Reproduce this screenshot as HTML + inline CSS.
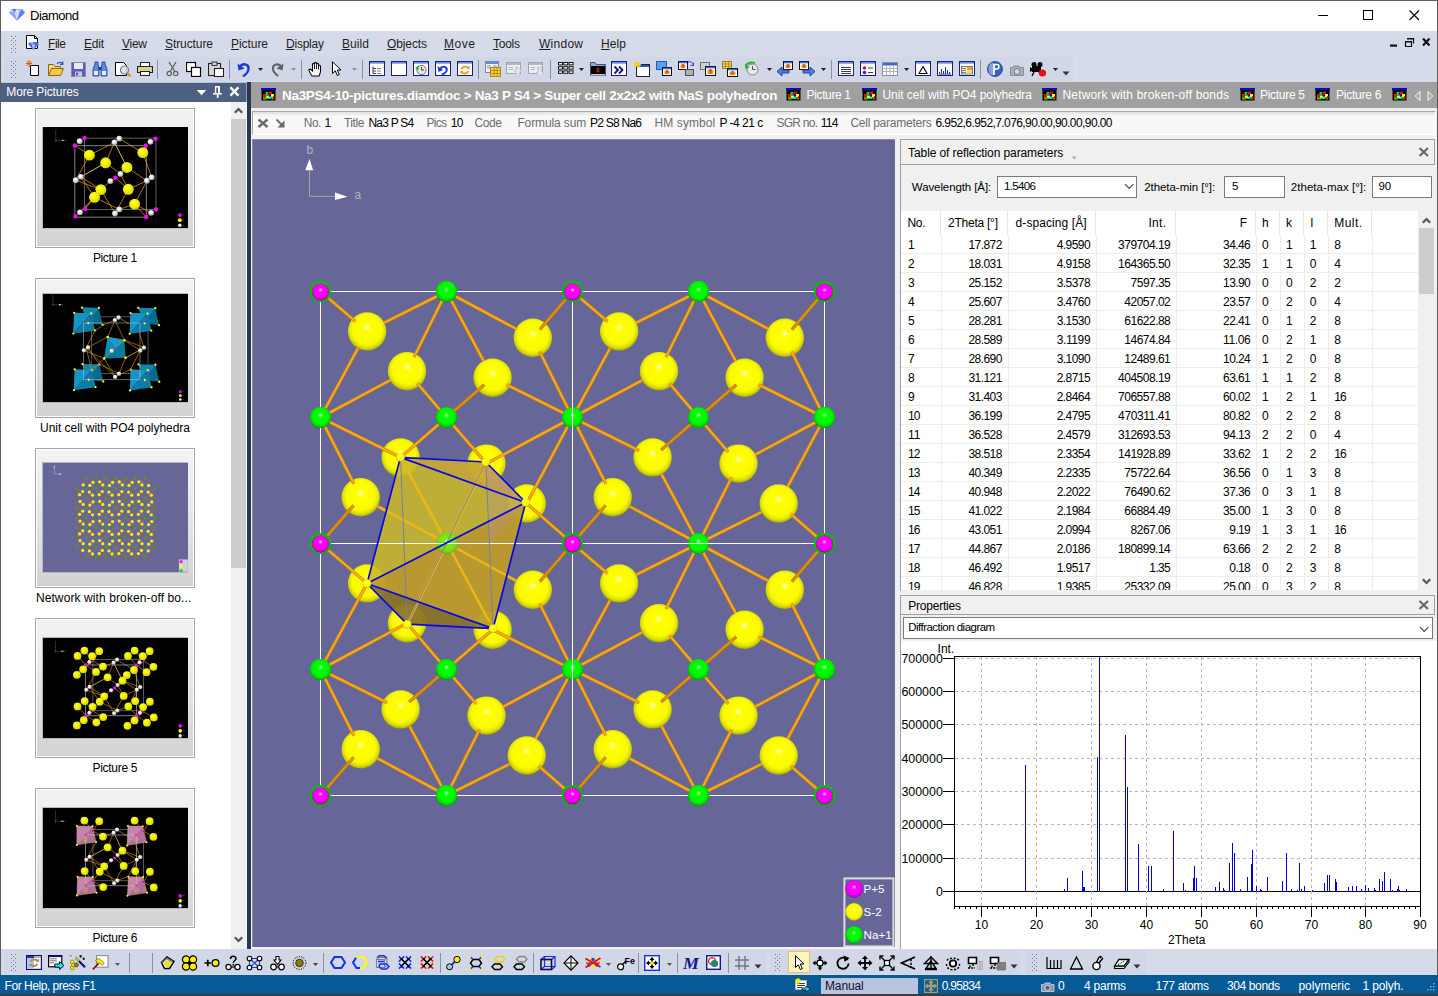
<!DOCTYPE html>
<html><head><meta charset="utf-8"><title>Diamond</title>
<style>
html,body{margin:0;padding:0}
body{width:1438px;height:996px;overflow:hidden;position:relative;background:#d6dbe9;font-family:"Liberation Sans",sans-serif;font-size:12px}
.b{position:absolute;box-sizing:border-box}
.t{position:absolute;white-space:pre}
u{text-decoration:underline;text-underline-offset:1px}
</style></head><body>
<div class="b" style="left:0px;top:0px;width:1438px;height:31px;background:#ffffff;"></div>
<div class="b" style="left:0px;top:0px;width:1438px;height:1px;background:#5d5d5d;"></div>
<svg class="b" style="left:8px;top:8px;" width="18" height="14" viewBox="0 0 18 14">
<polygon points="1,4.5 4,1 14,1 17,4.5 9,12.5" fill="#7f9cf5"/>
<polygon points="1,4.5 4,1 6.5,4.5" fill="#b9caff"/><polygon points="4,1 9,1 6.5,4.5" fill="#5b78ec"/>
<polygon points="9,1 14,1 11.5,4.5" fill="#a9bdff"/><polygon points="14,1 17,4.5 11.5,4.5" fill="#6a86f0"/>
<polygon points="6.5,4.5 9,1 11.5,4.5" fill="#e4ebff"/>
<polygon points="1,4.5 6.5,4.5 9,12.5" fill="#8ea8f8"/><polygon points="6.5,4.5 11.5,4.5 9,12.5" fill="#d4deff"/><polygon points="11.5,4.5 17,4.5 9,12.5" fill="#5f7cee"/>
</svg>
<span class="t " style="left:30.00px;top:7px;font-size:13px;line-height:17px;color:#000;letter-spacing:-0.504px;">Diamond</span>
<svg class="b" style="left:1310px;top:5px;" width="120" height="22" viewBox="0 0 120 22">
<path d="M8 10.5H18" stroke="#000" stroke-width="1" fill="none"/>
<rect x="53.5" y="5.5" width="9" height="9" stroke="#000" stroke-width="1" fill="none"/>
<path d="M99.5 5.5L109 15M109 5.5L99.5 15" stroke="#000" stroke-width="1.1" fill="none"/>
</svg>
<div class="b" style="left:0px;top:31px;width:1438px;height:51px;background:#d6dbe9;"></div>
<div class="b" style="left:0px;top:1px;width:1px;height:993px;background:#5d5d5d;"></div>
<div class="b" style="left:1437px;top:1px;width:1px;height:993px;background:#5d5d5d;"></div>
<div class="b" style="left:4px;top:57px;width:1069px;height:24px;background:#d1d7e6;"></div>
<svg class="b" style="left:11px;top:36px;" width="5" height="18" viewBox="0 0 5 18"><rect x="0" y="0" width="1" height="1" fill="#6f7a96"/><rect x="4" y="0" width="1" height="1" fill="#6f7a96"/><rect x="2" y="2" width="1" height="1" fill="#6f7a96"/><rect x="0" y="4" width="1" height="1" fill="#6f7a96"/><rect x="4" y="4" width="1" height="1" fill="#6f7a96"/><rect x="2" y="6" width="1" height="1" fill="#6f7a96"/><rect x="0" y="8" width="1" height="1" fill="#6f7a96"/><rect x="4" y="8" width="1" height="1" fill="#6f7a96"/><rect x="2" y="10" width="1" height="1" fill="#6f7a96"/><rect x="0" y="12" width="1" height="1" fill="#6f7a96"/><rect x="4" y="12" width="1" height="1" fill="#6f7a96"/><rect x="2" y="14" width="1" height="1" fill="#6f7a96"/><rect x="0" y="16" width="1" height="1" fill="#6f7a96"/><rect x="4" y="16" width="1" height="1" fill="#6f7a96"/></svg>
<svg class="b" style="left:11px;top:61px;" width="5" height="17" viewBox="0 0 5 17"><rect x="0" y="0" width="1" height="1" fill="#6f7a96"/><rect x="4" y="0" width="1" height="1" fill="#6f7a96"/><rect x="2" y="2" width="1" height="1" fill="#6f7a96"/><rect x="0" y="4" width="1" height="1" fill="#6f7a96"/><rect x="4" y="4" width="1" height="1" fill="#6f7a96"/><rect x="2" y="6" width="1" height="1" fill="#6f7a96"/><rect x="0" y="8" width="1" height="1" fill="#6f7a96"/><rect x="4" y="8" width="1" height="1" fill="#6f7a96"/><rect x="2" y="10" width="1" height="1" fill="#6f7a96"/><rect x="0" y="12" width="1" height="1" fill="#6f7a96"/><rect x="4" y="12" width="1" height="1" fill="#6f7a96"/><rect x="2" y="14" width="1" height="1" fill="#6f7a96"/><rect x="0" y="16" width="1" height="1" fill="#6f7a96"/><rect x="4" y="16" width="1" height="1" fill="#6f7a96"/></svg>
<svg class="b" style="left:25px;top:35px;" width="16" height="16" viewBox="0 0 16 16">
<path d="M1.5 0.5H9.5L12.5 3.5V13.5H1.5Z" fill="#fff" stroke="#000" stroke-width="1"/>
<path d="M9.5 0.5V3.5H12.5" fill="none" stroke="#000" stroke-width="1"/>
<polygon points="3,9 5,7 12,7 14,9 8.5,15" fill="#4a6cf0"/>
<polygon points="5,7 8.5,7 7,9.5" fill="#b9c9ff"/><polygon points="7,9.5 10,9.5 8.5,15" fill="#c8d6ff"/>
</svg>
<span class="t" style="left:48px;top:36.00px;font-size:12px;line-height:16px;color:#1e1e1e;letter-spacing:-0.445px"><u>F</u>ile</span>
<span class="t" style="left:84px;top:36.00px;font-size:12px;line-height:16px;color:#1e1e1e;letter-spacing:-0.226px"><u>E</u>dit</span>
<span class="t" style="left:122px;top:36.00px;font-size:12px;line-height:16px;color:#1e1e1e;letter-spacing:-0.264px"><u>V</u>iew</span>
<span class="t" style="left:165px;top:36.00px;font-size:12px;line-height:16px;color:#1e1e1e;letter-spacing:-0.086px"><u>S</u>tructure</span>
<span class="t" style="left:231px;top:36.00px;font-size:12px;line-height:16px;color:#1e1e1e;letter-spacing:-0.058px"><u>P</u>icture</span>
<span class="t" style="left:286px;top:36.00px;font-size:12px;line-height:16px;color:#1e1e1e;letter-spacing:-0.224px"><u>D</u>isplay</span>
<span class="t" style="left:342px;top:36.00px;font-size:12px;line-height:16px;color:#1e1e1e;letter-spacing:0.079px"><u>B</u>uild</span>
<span class="t" style="left:387px;top:36.00px;font-size:12px;line-height:16px;color:#1e1e1e;letter-spacing:-0.114px"><u>O</u>bjects</span>
<span class="t" style="left:444px;top:36.00px;font-size:12px;line-height:16px;color:#1e1e1e;letter-spacing:0.552px"><u>M</u>ove</span>
<span class="t" style="left:493px;top:36.00px;font-size:12px;line-height:16px;color:#1e1e1e;letter-spacing:-0.253px"><u>T</u>ools</span>
<span class="t" style="left:539px;top:36.00px;font-size:12px;line-height:16px;color:#1e1e1e;letter-spacing:0.264px"><u>W</u>indow</span>
<span class="t" style="left:601px;top:36.00px;font-size:12px;line-height:16px;color:#1e1e1e;letter-spacing:0.107px"><u>H</u>elp</span>
<svg class="b" style="left:1388px;top:36px;" width="46" height="14" viewBox="0 0 46 14">
<rect x="2" y="8.5" width="7" height="2.2" fill="#111"/>
<path d="M19.5 2.5H25.5V7.5M17.5 5.5H23.5V10.5H17.5Z" stroke="#111" stroke-width="1.2" fill="none"/>
<path d="M19 2.8H25.5M17.5 5.8H23.5" stroke="#111" stroke-width="1.6" fill="none"/>
<path d="M35 2.5L41.5 9.5M41.5 2.5L35 9.5" stroke="#111" stroke-width="2.2" fill="none"/>
</svg>
<svg class="b" style="left:26px;top:60px;" width="16" height="17" viewBox="0 0 16 17"><path d="M4.5 5.5H12.5V15.5H4.5Z" fill="#fff" stroke="#000"/>
<path d="M3 0V7M0 3.5H6M0.8 1.2L5.2 5.8M5.2 1.2L0.8 5.8" stroke="#e06000" stroke-width="1"/></svg>
<svg class="b" style="left:48px;top:61px;" width="16" height="16" viewBox="0 0 16 16"><path d="M0.5 14.5V3.5H5.5L7 5.5H12.5V7.5" fill="#f8d878" stroke="#8a6a10"/>
<path d="M0.5 14.5L3.5 7.5H15.5L12.5 14.5Z" fill="#f7c64a" stroke="#8a6a10"/>
<path d="M9 3C10.5 0.8 13.5 0.8 14.5 3.2M14.8 0.5V3.5H12" fill="none" stroke="#2a50c8" stroke-width="1.2"/></svg>
<svg class="b" style="left:71px;top:61px;" width="16" height="16" viewBox="0 0 16 16"><rect x="0.5" y="1.5" width="14" height="14" fill="#5a5ac8" stroke="#8c8ca0"/>
<rect x="3" y="2" width="9" height="6" fill="#e8e8f4"/><rect x="4" y="10.5" width="7" height="5" fill="#c8c8d8"/><rect x="5" y="11.5" width="2" height="3" fill="#5a5ac8"/></svg>
<svg class="b" style="left:92px;top:61px;" width="16" height="16" viewBox="0 0 16 16"><path d="M1 15V8L3 3V1H6V3L7 8V15Z" fill="#5a8ae0" stroke="#1a3a9c" stroke-width="0.8"/>
<path d="M9 15V8L10 3V1H13V3L15 8V15Z" fill="#5a8ae0" stroke="#1a3a9c" stroke-width="0.8"/>
<rect x="6.5" y="6" width="3" height="3" fill="#1a3a9c"/><rect x="2" y="10" width="4" height="4" fill="#e8f0ff"/><rect x="10" y="10" width="4" height="4" fill="#e8f0ff"/></svg>
<svg class="b" style="left:115px;top:61px;" width="16" height="16" viewBox="0 0 16 16"><path d="M0.5 1.5H8.5L11.5 4.5V14.5H0.5Z" fill="#fff" stroke="#000"/>
<circle cx="9.5" cy="9" r="4" fill="#d8e8f8" fill-opacity="0.85" stroke="#707888" stroke-width="1.2"/>
<path d="M12.5 12L15.5 15.5" stroke="#d88a20" stroke-width="2.2"/></svg>
<svg class="b" style="left:137px;top:61px;" width="16" height="16" viewBox="0 0 16 16"><rect x="3.5" y="1.5" width="9" height="5" fill="#fff" stroke="#222"/>
<rect x="0.5" y="5.5" width="15" height="6" fill="#d8d090" stroke="#222"/>
<rect x="3.5" y="10.5" width="9" height="4" fill="#fff" stroke="#222"/><rect x="2" y="7" width="2" height="1.5" fill="#e8e020"/></svg>
<div class="b" style="left:157px;top:60px;width:1px;height:19px;background:#8591a8;"></div>
<svg class="b" style="left:166px;top:61px;" width="13" height="16" viewBox="0 0 13 16"><path d="M3 1L8.5 10M10 1L4.5 10" stroke="#606060" stroke-width="1.3" fill="none"/>
<circle cx="3.3" cy="12.5" r="2.2" fill="none" stroke="#606060" stroke-width="1.2"/><circle cx="9.7" cy="12.5" r="2.2" fill="none" stroke="#606060" stroke-width="1.2"/></svg>
<svg class="b" style="left:186px;top:61px;" width="16" height="16" viewBox="0 0 16 16"><rect x="0.5" y="1.5" width="9" height="9" fill="#fff" stroke="#000" stroke-width="1.2"/>
<rect x="5.5" y="6.5" width="9" height="9" fill="#fff" stroke="#000" stroke-width="1.2"/></svg>
<svg class="b" style="left:208px;top:61px;" width="16" height="16" viewBox="0 0 16 16"><rect x="0.5" y="2.5" width="12" height="12" fill="#d8d8d8" stroke="#222" stroke-width="1.1"/>
<rect x="4" y="1" width="5" height="3.5" fill="#d0d0d0" stroke="#222" stroke-width="0.9"/>
<rect x="6.5" y="7.5" width="9" height="8" fill="#fff" stroke="#222" stroke-width="1.1"/></svg>
<div class="b" style="left:229px;top:60px;width:1px;height:19px;background:#8591a8;"></div>
<svg class="b" style="left:237px;top:61px;" width="14" height="16" viewBox="0 0 14 16"><path d="M2.5 6.5C5 1.5 12 2.5 11.5 8C11.2 11 9 13.5 6 15.5" fill="none" stroke="#1a3ad8" stroke-width="2.4"/>
<polygon points="0.5,2.5 1.5,9.5 7.5,7.5" fill="#1a3ad8"/></svg>
<svg class="b" style="left:258px;top:68px;" width="5" height="3" viewBox="0 0 5 3"><polygon points="0,0 5,0 2.5,3" fill="#1e1e1e"/></svg>
<svg class="b" style="left:271px;top:61px;" width="14" height="16" viewBox="0 0 14 16"><path d="M10.5 6.5C8 1.5 1.5 3 2 8C2.3 11 4.5 13 7 15" fill="none" stroke="#606468" stroke-width="2.2"/>
<polygon points="12.5,2.5 11.5,9.5 5.5,7.5" fill="#606468"/></svg>
<svg class="b" style="left:291px;top:68px;" width="5" height="3" viewBox="0 0 5 3"><polygon points="0,0 5,0 2.5,3" fill="#8a90a0"/></svg>
<div class="b" style="left:301px;top:60px;width:1px;height:19px;background:#8591a8;"></div>
<svg class="b" style="left:308px;top:61px;" width="16" height="16" viewBox="0 0 16 16"><path d="M4 15C2 12 0.5 9.5 1 8.5C2 7.5 3.5 9 4.5 10V3.5C4.5 2 6.5 2 6.5 3.5V2.5C6.5 1 8.5 1 8.5 2.5V3.5C8.5 2 10.5 2 10.5 3.5V5C10.5 4 12.5 4 12.5 5.5V10C12.5 12.5 11.5 14 11 15Z" fill="#fff" stroke="#000" stroke-width="1.1"/>
<path d="M6.5 3.5V8M8.5 3.5V8M10.5 5V8.5" stroke="#000" stroke-width="0.9"/></svg>
<svg class="b" style="left:331px;top:61px;" width="11" height="16" viewBox="0 0 11 16"><path d="M1.5 0.8V12.5L4.3 9.8L6.3 14.5L8.3 13.6L6.3 9H10Z" fill="#fff" stroke="#000" stroke-width="1"/></svg>
<svg class="b" style="left:352px;top:68px;" width="5" height="3" viewBox="0 0 5 3"><polygon points="0,0 5,0 2.5,3" fill="#8a90a0"/></svg>
<div class="b" style="left:362px;top:60px;width:1px;height:19px;background:#8591a8;"></div>
<svg class="b" style="left:369px;top:61px;" width="16" height="16" viewBox="0 0 16 16"><rect x="0.5" y="0.5" width="15" height="14" fill="#fff" stroke="#1c1c70" stroke-width="1"/><rect x="1" y="1" width="14" height="1.7" fill="#6a8ce4"/><path d="M4 5.5V12.5M4 7.5H7M4 10H7M4 12.5H7" stroke="#404040" stroke-width="1" fill="none"/><path d="M8 7.5H12M8 10H12M8 12.5H12" stroke="#808080"/></svg>
<svg class="b" style="left:391px;top:61px;" width="16" height="16" viewBox="0 0 16 16"><rect x="0.5" y="0.5" width="15" height="14" fill="#fff" stroke="#1c1c70" stroke-width="1"/><rect x="1" y="1" width="14" height="1.7" fill="#6a8ce4"/></svg>
<svg class="b" style="left:413px;top:61px;" width="16" height="16" viewBox="0 0 16 16"><rect x="0.5" y="0.5" width="15" height="14" fill="#fff" stroke="#1c1c70" stroke-width="1"/><rect x="1" y="1" width="14" height="1.7" fill="#6a8ce4"/><circle cx="8.5" cy="9" r="4.6" fill="#e8e8e8" stroke="#707070"/><path d="M8.5 6V9H11" stroke="#404040" fill="none"/><path d="M2 7L5.5 4.5V9.5Z" fill="#20b020"/></svg>
<svg class="b" style="left:435px;top:61px;" width="16" height="16" viewBox="0 0 16 16"><rect x="0.5" y="0.5" width="15" height="14" fill="#fff" stroke="#1c1c70" stroke-width="1"/><rect x="1" y="1" width="14" height="1.7" fill="#6a8ce4"/><path d="M5 8C7 4.5 12 5.5 11.8 9C11.5 11.5 9.5 12.5 7 13.5" fill="none" stroke="#1a3ad8" stroke-width="2"/><polygon points="2.5,5 3.5,11 8,9" fill="#1a3ad8"/></svg>
<svg class="b" style="left:457px;top:61px;" width="16" height="16" viewBox="0 0 16 16"><rect x="0.5" y="0.5" width="15" height="14" fill="#fff" stroke="#1c1c70" stroke-width="1"/><rect x="1" y="1" width="14" height="1.7" fill="#6a8ce4"/><path d="M4.5 8.5C5 5.5 9.5 4.5 11.5 7M11.5 10C10.5 13 6.5 13.2 4.8 11" fill="none" stroke="#e89a10" stroke-width="1.8"/><polygon points="12.8,5 12.5,8.6 9.5,7.4" fill="#e89a10"/><polygon points="3.2,12.8 3.6,9.4 6.5,10.6" fill="#e89a10"/></svg>
<div class="b" style="left:478px;top:60px;width:1px;height:19px;background:#8591a8;"></div>
<svg class="b" style="left:485px;top:61px;" width="16" height="16" viewBox="0 0 16 16"><rect x="0.5" y="0.5" width="13" height="11" fill="#f4f4f8" stroke="#7088c0"/><rect x="1" y="1" width="12" height="2" fill="#6a8ad8"/>
<path d="M2 5H6M2 7H6M8 5H12" stroke="#8a8a8a"/>
<rect x="5.5" y="6.5" width="10" height="9" fill="#f8d040" stroke="#b08a10"/><path d="M5.5 9.5H15.5M5.5 12.5H15.5M9 6.5V15.5M12.3 6.5V15.5" stroke="#b08a10" stroke-width="0.9"/></svg>
<svg class="b" style="left:506px;top:61px;" width="16" height="16" viewBox="0 0 16 16"><rect x="0.5" y="1.5" width="14" height="11" fill="#eceef2" stroke="#a0a4b0"/><rect x="1" y="2" width="13" height="2" fill="#b4b8c4"/><path d="M2.5 6.5H7M2.5 8.5H7M9 6.5H12M9 8.5H12" stroke="#b0b4bc"/><path d="M10.5 15.5V10.5H8L12 6L16 10.5H13.5V15.5Z" fill="#e4e6ea" stroke="#c0c4cc" stroke-width="0.8"/></svg>
<svg class="b" style="left:528px;top:61px;" width="16" height="16" viewBox="0 0 16 16"><rect x="0.5" y="1.5" width="14" height="11" fill="#eceef2" stroke="#a0a4b0"/><rect x="1" y="2" width="13" height="2" fill="#b4b8c4"/><path d="M2.5 6.5H7M2.5 8.5H7M9 6.5H12M9 8.5H12" stroke="#b0b4bc"/><path d="M10.5 6V11H8L12 15.5L16 11H13.5V6Z" fill="#e4e6ea" stroke="#c0c4cc" stroke-width="0.8"/></svg>
<div class="b" style="left:550px;top:60px;width:1px;height:19px;background:#8591a8;"></div>
<svg class="b" style="left:558px;top:61px;" width="16" height="14" viewBox="0 0 16 14"><rect x="0.5" y="1.5" width="4" height="2.4" fill="#fff" stroke="#000" stroke-width="0.9"/><rect x="5.8" y="1.5" width="4" height="2.4" fill="#fff" stroke="#000" stroke-width="0.9"/><rect x="11.1" y="1.5" width="4" height="2.4" fill="#fff" stroke="#000" stroke-width="0.9"/><rect x="0.5" y="5.7" width="4" height="2.4" fill="#fff" stroke="#000" stroke-width="0.9"/><rect x="5.8" y="5.7" width="4" height="2.4" fill="#fff" stroke="#000" stroke-width="0.9"/><rect x="11.1" y="5.7" width="4" height="2.4" fill="#fff" stroke="#000" stroke-width="0.9"/><rect x="0.5" y="9.9" width="4" height="2.4" fill="#fff" stroke="#000" stroke-width="0.9"/><rect x="5.8" y="9.9" width="4" height="2.4" fill="#fff" stroke="#000" stroke-width="0.9"/><rect x="11.1" y="9.9" width="4" height="2.4" fill="#fff" stroke="#000" stroke-width="0.9"/></svg>
<svg class="b" style="left:579px;top:68px;" width="5" height="3" viewBox="0 0 5 3"><polygon points="0,0 5,0 2.5,3" fill="#1e1e1e"/></svg>
<svg class="b" style="left:590px;top:61px;" width="16" height="16" viewBox="0 0 16 16"><path d="M0.5 14.5V1.5H5L6.5 3.5H15.5V14.5Z" fill="#8aa8e0" stroke="#40507a"/>
<rect x="1" y="5" width="14" height="8" fill="#000"/><path d="M8 6L10 8.5H6ZM8 12L10 9.5H6Z" fill="#e02020"/><rect x="1" y="13" width="14" height="1.5" fill="#c8c8c8"/></svg>
<svg class="b" style="left:611px;top:61px;" width="17" height="16" viewBox="0 0 17 16"><rect x="0.5" y="0.5" width="15" height="14" fill="#fff" stroke="#1c1c70" stroke-width="1"/><rect x="1" y="1" width="14" height="1.7" fill="#6a8ce4"/><path d="M3.5 5.5L7 9L3.5 12.5M8 5.5L11.5 9L8 12.5" fill="none" stroke="#10107a" stroke-width="1.8"/></svg>
<svg class="b" style="left:634px;top:61px;" width="16" height="16" viewBox="0 0 16 16"><rect x="2.5" y="3.5" width="13" height="12" fill="#fff" stroke="#222"/><rect x="3" y="4" width="12" height="2" fill="#2a5ad0"/><path d="M3.5 0V7M0 3.5H7M1 1L6 6M6 1L1 6" stroke="#f0d020" stroke-width="1.3"/></svg>
<svg class="b" style="left:656px;top:61px;" width="16" height="16" viewBox="0 0 16 16"><rect x="0.5" y="0.5" width="10" height="8" fill="#58a0f0" stroke="#2060c0"/><rect x="6.5" y="6.5" width="9" height="8" fill="#fff" stroke="#111" stroke-width="1"/><rect x="7.0" y="6.8" width="8" height="1.5" fill="#3a6ae0"/><rect x="8.5" y="9.7" width="5" height="3.4000000000000004" fill="#e8a020"/><rect x="9.8" y="9.1" width="2.4" height="3.4000000000000004" fill="#e05020"/></svg>
<svg class="b" style="left:678px;top:61px;" width="16" height="16" viewBox="0 0 16 16"><rect x="0.5" y="0.5" width="9" height="8" fill="#fff" stroke="#111" stroke-width="1"/><rect x="1.0" y="0.8" width="8" height="1.5" fill="#3a6ae0"/><rect x="2.5" y="3.7" width="5" height="3.4000000000000004" fill="#e8a020"/><rect x="3.8" y="3.1" width="2.4" height="3.4000000000000004" fill="#e05020"/><rect x="7.5" y="8.5" width="8" height="6" fill="#b0b0b0" stroke="#505050"/><path d="M10 1C12.5 0 15 1.5 15 4M15.5 1.5V4.5H12.5" fill="none" stroke="#2a50c8"/></svg>
<svg class="b" style="left:700px;top:61px;" width="16" height="16" viewBox="0 0 16 16"><rect x="0.5" y="1.5" width="9" height="7" fill="#d0d0d0" stroke="#707070"/><rect x="5.5" y="5.5" width="10" height="9" fill="#fff" stroke="#111" stroke-width="1"/><rect x="6.0" y="5.8" width="9" height="1.5" fill="#3a6ae0"/><rect x="7.5" y="8.7" width="6" height="4.4" fill="#e8a020"/><rect x="9.3" y="8.1" width="2.4" height="4.4" fill="#e05020"/></svg>
<svg class="b" style="left:722px;top:61px;" width="16" height="16" viewBox="0 0 16 16"><rect x="0.5" y="0.5" width="9" height="7" fill="#f4d868" stroke="#a08020"/><path d="M0.5 3H9.5M0.5 5.5H9.5M3.5 0.5V7.5M6.5 0.5V7.5" stroke="#a08020" stroke-width="0.8"/><rect x="5.5" y="7.5" width="10" height="8" fill="#fff" stroke="#111" stroke-width="1"/><rect x="6.0" y="7.8" width="9" height="1.5" fill="#3a6ae0"/><rect x="7.5" y="10.7" width="6" height="3.4000000000000004" fill="#e8a020"/><rect x="9.3" y="10.1" width="2.4" height="3.4000000000000004" fill="#e05020"/></svg>
<svg class="b" style="left:745px;top:61px;" width="14" height="16" viewBox="0 0 14 16"><circle cx="7.5" cy="8.5" r="5.5" fill="#e8e8e8" stroke="#808080"/><path d="M7.5 5V8.5H10.5" stroke="#505050" fill="none"/><path d="M0 6C2 1.5 7 0.5 10 2.5" fill="none" stroke="#30b030" stroke-width="2"/><polygon points="0,3 0.5,8 4.5,6.5" fill="#30b030"/></svg>
<svg class="b" style="left:767px;top:68px;" width="5" height="3" viewBox="0 0 5 3"><polygon points="0,0 5,0 2.5,3" fill="#1e1e1e"/></svg>
<svg class="b" style="left:777px;top:61px;" width="16" height="16" viewBox="0 0 16 16"><rect x="6.5" y="0.5" width="9" height="8" fill="#fff" stroke="#111" stroke-width="1"/><rect x="7.0" y="0.8" width="8" height="1.5" fill="#3a6ae0"/><rect x="8.5" y="3.7" width="5" height="3.4000000000000004" fill="#e8a020"/><rect x="9.8" y="3.1" width="2.4" height="3.4000000000000004" fill="#e05020"/><path d="M0 10.5L5 6V9H12V12H5V15Z" fill="#4a7ae8" stroke="#1a3a9c" stroke-width="0.9"/></svg>
<svg class="b" style="left:799px;top:61px;" width="16" height="16" viewBox="0 0 16 16"><rect x="0.5" y="0.5" width="9" height="8" fill="#fff" stroke="#111" stroke-width="1"/><rect x="1.0" y="0.8" width="8" height="1.5" fill="#3a6ae0"/><rect x="2.5" y="3.7" width="5" height="3.4000000000000004" fill="#e8a020"/><rect x="3.8" y="3.1" width="2.4" height="3.4000000000000004" fill="#e05020"/><path d="M16 10.5L11 6V9H4V12H11V15Z" fill="#4a7ae8" stroke="#1a3a9c" stroke-width="0.9"/></svg>
<svg class="b" style="left:821px;top:68px;" width="5" height="3" viewBox="0 0 5 3"><polygon points="0,0 5,0 2.5,3" fill="#1e1e1e"/></svg>
<div class="b" style="left:831px;top:60px;width:1px;height:19px;background:#8591a8;"></div>
<svg class="b" style="left:838px;top:61px;" width="16" height="16" viewBox="0 0 16 16"><rect x="0.5" y="0.5" width="15" height="14" fill="#fff" stroke="#1c1c70" stroke-width="1"/><rect x="1" y="1" width="14" height="1.7" fill="#6a8ce4"/><path d="M3 6.5H13M3 8.5H13M3 10.5H13M3 12.5H13" stroke="#404040"/></svg>
<svg class="b" style="left:860px;top:61px;" width="16" height="16" viewBox="0 0 16 16"><rect x="0.5" y="0.5" width="15" height="14" fill="#fff" stroke="#1c1c70" stroke-width="1"/><rect x="1" y="1" width="14" height="1.7" fill="#6a8ce4"/><circle cx="4.5" cy="7" r="1.8" fill="#e01010"/><circle cx="4.5" cy="11.5" r="1.8" fill="#1030e0"/><path d="M8 7H13M8 11.5H13" stroke="#404040" stroke-width="1.2"/></svg>
<svg class="b" style="left:882px;top:61px;" width="16" height="16" viewBox="0 0 16 16"><rect x="0.5" y="1.5" width="15" height="13" fill="#fff" stroke="#8a90a8"/><rect x="1" y="2" width="14" height="2.5" fill="#3c6ad8"/><path d="M1 7.5H15M1 10.5H15M4.5 5V14M8 5V14M11.5 5V14" stroke="#b0b4c0" stroke-width="1"/></svg>
<svg class="b" style="left:904px;top:68px;" width="5" height="3" viewBox="0 0 5 3"><polygon points="0,0 5,0 2.5,3" fill="#1e1e1e"/></svg>
<svg class="b" style="left:915px;top:61px;" width="16" height="16" viewBox="0 0 16 16"><rect x="0.5" y="0.5" width="15" height="14" fill="#fff" stroke="#1c1c70" stroke-width="1"/><rect x="1" y="1" width="14" height="1.7" fill="#6a8ce4"/><path d="M8 5.5L12 12.5H4Z" fill="none" stroke="#000" stroke-width="1.1"/></svg>
<svg class="b" style="left:937px;top:61px;" width="16" height="16" viewBox="0 0 16 16"><rect x="0.5" y="0.5" width="15" height="14" fill="#fff" stroke="#1c1c70" stroke-width="1"/><rect x="1" y="1" width="14" height="1.7" fill="#6a8ce4"/><path d="M2.5 13V11M4.5 13V8M6.5 13V10M8.5 13V6M10.5 13V9M12.5 13V11" stroke="#1030d0" stroke-width="1"/><path d="M2 13.2H14" stroke="#1030d0" stroke-width="0.8"/></svg>
<svg class="b" style="left:959px;top:61px;" width="16" height="16" viewBox="0 0 16 16"><rect x="0.5" y="0.5" width="15" height="14" fill="#fff" stroke="#1c1c70" stroke-width="1"/><rect x="1" y="1" width="14" height="1.7" fill="#6a8ce4"/><rect x="2.5" y="5.5" width="11" height="7.5" fill="#f0f0f0" stroke="#606060" stroke-width="0.8"/><rect x="8" y="6" width="5" height="3" fill="#f0a020"/><rect x="8" y="9.5" width="5" height="3" fill="#f0d848"/><path d="M3 7.5H7M3 9.5H7M3 11.5H7" stroke="#707070" stroke-width="0.9"/></svg>
<div class="b" style="left:980px;top:60px;width:1px;height:19px;background:#8591a8;"></div>
<svg class="b" style="left:987px;top:61px;" width="16" height="16" viewBox="0 0 16 16"><circle cx="8" cy="8" r="7.5" fill="#3a62b8"/><ellipse cx="5" cy="8" rx="3.5" ry="6.5" fill="#9ab4e8" opacity="0.8"/><path d="M7 14V3.5H10C12.5 3.5 12.5 8 10 8H7" fill="none" stroke="#fff" stroke-width="1.6"/><circle cx="8" cy="8" r="7.5" fill="none" stroke="#203a80" stroke-width="0.8"/></svg>
<svg class="b" style="left:1010px;top:63px;" width="14" height="13" viewBox="0 0 14 13"><path d="M0.5 4.5H3L4 3H9L10 4.5H13.5V12.5H0.5Z" fill="#a8b0b8" stroke="#808890" stroke-width="0.9"/><circle cx="7" cy="8.5" r="3" fill="#d0d8e0" stroke="#707880"/></svg>
<svg class="b" style="left:1030px;top:61px;" width="17" height="16" viewBox="0 0 17 16"><circle cx="4" cy="3.5" r="2.5" fill="#000"/><circle cx="10" cy="3.5" r="2.5" fill="#000"/><rect x="2" y="5" width="9" height="6" fill="#000"/><path d="M0 6L2.5 7.5V9.5L0 11Z" fill="#000"/><path d="M4 11L2 15M9 11L11 15" stroke="#000" stroke-width="1.3"/><circle cx="12.5" cy="12" r="3.6" fill="#e81010"/></svg>
<svg class="b" style="left:1053px;top:68px;" width="5" height="3" viewBox="0 0 5 3"><polygon points="0,0 5,0 2.5,3" fill="#1e1e1e"/></svg>
<svg class="b" style="left:1062px;top:71px;" width="8" height="5" viewBox="0 0 8 5"><polygon points="0.5,0.5 7.5,0.5 4,4.5" fill="#333"/></svg>
<div class="b" style="left:1px;top:82px;width:1436px;height:893px;background:#293955;"></div>
<div class="b" style="left:251px;top:82px;width:1186px;height:867px;background:#f0f0f0;"></div>
<div class="b" style="left:251px;top:82px;width:1186px;height:26px;background:#a0a0a0;"></div>
<svg class="b" style="left:261px;top:88px;" width="15" height="13" viewBox="0 0 15 13"><rect x="0" y="0" width="15" height="2" fill="#0000e0"/><rect x="0.5" y="2" width="14" height="10.5" fill="#000"/>
<rect x="2" y="6" width="3.5" height="4" fill="#ff0000"/><rect x="4.5" y="4" width="3" height="3" fill="#00e000"/><rect x="7" y="5" width="2.5" height="4" fill="#0000ff"/><rect x="8" y="3.5" width="3" height="3" fill="#ff0000"/>
<rect x="10" y="6" width="3" height="3.5" fill="#ffff00"/><rect x="5" y="7.5" width="3" height="3" fill="#ffff00"/><rect x="7.5" y="8.5" width="2.5" height="2.5" fill="#00e0ff"/><rect x="2" y="9.5" width="4" height="2" fill="#00e000"/><rect x="10.5" y="9.5" width="2.5" height="2" fill="#00d000"/><rect x="12" y="8" width="1.5" height="3" fill="#ff0000"/></svg>
<span class="t " style="left:282.00px;top:87px;font-size:13.5px;line-height:17px;color:#fff;letter-spacing:-0.303px;font-weight:bold;">Na3PS4-10-pictures.diamdoc &gt; Na3 P S4 &gt; Super cell 2x2x2 with NaS polyhedron</span>
<svg class="b" style="left:786px;top:88px;" width="15" height="13" viewBox="0 0 15 13"><rect x="0" y="0" width="15" height="2" fill="#0000e0"/><rect x="0.5" y="2" width="14" height="10.5" fill="#000"/>
<rect x="2" y="6" width="3.5" height="4" fill="#ff0000"/><rect x="4.5" y="4" width="3" height="3" fill="#00e000"/><rect x="7" y="5" width="2.5" height="4" fill="#0000ff"/><rect x="8" y="3.5" width="3" height="3" fill="#ff0000"/>
<rect x="10" y="6" width="3" height="3.5" fill="#ffff00"/><rect x="5" y="7.5" width="3" height="3" fill="#ffff00"/><rect x="7.5" y="8.5" width="2.5" height="2.5" fill="#00e0ff"/><rect x="2" y="9.5" width="4" height="2" fill="#00e000"/><rect x="10.5" y="9.5" width="2.5" height="2" fill="#00d000"/><rect x="12" y="8" width="1.5" height="3" fill="#ff0000"/></svg>
<span class="t " style="left:806.60px;top:87px;font-size:12px;line-height:16px;color:#fff;letter-spacing:-0.370px;">Picture 1</span>
<svg class="b" style="left:862px;top:88px;" width="15" height="13" viewBox="0 0 15 13"><rect x="0" y="0" width="15" height="2" fill="#0000e0"/><rect x="0.5" y="2" width="14" height="10.5" fill="#000"/>
<rect x="2" y="6" width="3.5" height="4" fill="#ff0000"/><rect x="4.5" y="4" width="3" height="3" fill="#00e000"/><rect x="7" y="5" width="2.5" height="4" fill="#0000ff"/><rect x="8" y="3.5" width="3" height="3" fill="#ff0000"/>
<rect x="10" y="6" width="3" height="3.5" fill="#ffff00"/><rect x="5" y="7.5" width="3" height="3" fill="#ffff00"/><rect x="7.5" y="8.5" width="2.5" height="2.5" fill="#00e0ff"/><rect x="2" y="9.5" width="4" height="2" fill="#00e000"/><rect x="10.5" y="9.5" width="2.5" height="2" fill="#00d000"/><rect x="12" y="8" width="1.5" height="3" fill="#ff0000"/></svg>
<span class="t " style="left:882.40px;top:87px;font-size:12px;line-height:16px;color:#fff;letter-spacing:-0.042px;">Unit cell with PO4 polyhedra</span>
<svg class="b" style="left:1042px;top:88px;" width="15" height="13" viewBox="0 0 15 13"><rect x="0" y="0" width="15" height="2" fill="#0000e0"/><rect x="0.5" y="2" width="14" height="10.5" fill="#000"/>
<rect x="2" y="6" width="3.5" height="4" fill="#ff0000"/><rect x="4.5" y="4" width="3" height="3" fill="#00e000"/><rect x="7" y="5" width="2.5" height="4" fill="#0000ff"/><rect x="8" y="3.5" width="3" height="3" fill="#ff0000"/>
<rect x="10" y="6" width="3" height="3.5" fill="#ffff00"/><rect x="5" y="7.5" width="3" height="3" fill="#ffff00"/><rect x="7.5" y="8.5" width="2.5" height="2.5" fill="#00e0ff"/><rect x="2" y="9.5" width="4" height="2" fill="#00e000"/><rect x="10.5" y="9.5" width="2.5" height="2" fill="#00d000"/><rect x="12" y="8" width="1.5" height="3" fill="#ff0000"/></svg>
<span class="t " style="left:1062.50px;top:87px;font-size:12px;line-height:16px;color:#fff;letter-spacing:0.166px;">Network with broken-off bonds</span>
<svg class="b" style="left:1240px;top:88px;" width="15" height="13" viewBox="0 0 15 13"><rect x="0" y="0" width="15" height="2" fill="#0000e0"/><rect x="0.5" y="2" width="14" height="10.5" fill="#000"/>
<rect x="2" y="6" width="3.5" height="4" fill="#ff0000"/><rect x="4.5" y="4" width="3" height="3" fill="#00e000"/><rect x="7" y="5" width="2.5" height="4" fill="#0000ff"/><rect x="8" y="3.5" width="3" height="3" fill="#ff0000"/>
<rect x="10" y="6" width="3" height="3.5" fill="#ffff00"/><rect x="5" y="7.5" width="3" height="3" fill="#ffff00"/><rect x="7.5" y="8.5" width="2.5" height="2.5" fill="#00e0ff"/><rect x="2" y="9.5" width="4" height="2" fill="#00e000"/><rect x="10.5" y="9.5" width="2.5" height="2" fill="#00d000"/><rect x="12" y="8" width="1.5" height="3" fill="#ff0000"/></svg>
<span class="t " style="left:1260.00px;top:87px;font-size:12px;line-height:16px;color:#fff;letter-spacing:-0.295px;">Picture 5</span>
<svg class="b" style="left:1315px;top:88px;" width="15" height="13" viewBox="0 0 15 13"><rect x="0" y="0" width="15" height="2" fill="#0000e0"/><rect x="0.5" y="2" width="14" height="10.5" fill="#000"/>
<rect x="2" y="6" width="3.5" height="4" fill="#ff0000"/><rect x="4.5" y="4" width="3" height="3" fill="#00e000"/><rect x="7" y="5" width="2.5" height="4" fill="#0000ff"/><rect x="8" y="3.5" width="3" height="3" fill="#ff0000"/>
<rect x="10" y="6" width="3" height="3.5" fill="#ffff00"/><rect x="5" y="7.5" width="3" height="3" fill="#ffff00"/><rect x="7.5" y="8.5" width="2.5" height="2.5" fill="#00e0ff"/><rect x="2" y="9.5" width="4" height="2" fill="#00e000"/><rect x="10.5" y="9.5" width="2.5" height="2" fill="#00d000"/><rect x="12" y="8" width="1.5" height="3" fill="#ff0000"/></svg>
<span class="t " style="left:1336.00px;top:87px;font-size:12px;line-height:16px;color:#fff;letter-spacing:-0.232px;">Picture 6</span>
<svg class="b" style="left:1392px;top:88px;" width="15" height="13" viewBox="0 0 15 13"><rect x="0" y="0" width="15" height="2" fill="#0000e0"/><rect x="0.5" y="2" width="14" height="10.5" fill="#000"/>
<rect x="2" y="6" width="3.5" height="4" fill="#ff0000"/><rect x="4.5" y="4" width="3" height="3" fill="#00e000"/><rect x="7" y="5" width="2.5" height="4" fill="#0000ff"/><rect x="8" y="3.5" width="3" height="3" fill="#ff0000"/>
<rect x="10" y="6" width="3" height="3.5" fill="#ffff00"/><rect x="5" y="7.5" width="3" height="3" fill="#ffff00"/><rect x="7.5" y="8.5" width="2.5" height="2.5" fill="#00e0ff"/><rect x="2" y="9.5" width="4" height="2" fill="#00e000"/><rect x="10.5" y="9.5" width="2.5" height="2" fill="#00d000"/><rect x="12" y="8" width="1.5" height="3" fill="#ff0000"/></svg>
<svg class="b" style="left:1413px;top:90px;" width="22" height="12" viewBox="0 0 22 12"><path d="M7 1.5V10.5L2.2 6Z" fill="none" stroke="#fff" stroke-width="1"/><path d="M15 1.5V10.5L19.8 6Z" fill="none" stroke="#fff" stroke-width="1"/></svg>
<div class="b" style="left:252px;top:111px;width:1184px;height:24px;background:#f0f0f0;border:1px solid #fff;border-top:1px solid #a8a8a8;border-left:1px solid #a8a8a8;background:linear-gradient(#e0e0e0,#f8f8f8 4px,#f8f8f8)"></div>
<svg class="b" style="left:257px;top:117px;" width="30" height="12" viewBox="0 0 30 12"><path d="M1.5 2.5L10.5 10M10.5 2.5L1.5 10" stroke="#6a6a6a" stroke-width="2.3"/><path d="M19.5 2.5L25.5 8.5" stroke="#6a6a6a" stroke-width="1.8" fill="none"/><polygon points="27.5,3.5 27.5,10.5 20.5,10.5" fill="#6a6a6a"/></svg>
<span class="t " style="left:303.80px;top:115px;font-size:12px;line-height:16px;color:#6d6d6d;letter-spacing:-0.587px;">No.</span>
<span class="t " style="left:324.60px;top:115px;font-size:12px;line-height:16px;color:#000;">1</span>
<span class="t " style="left:343.90px;top:115px;font-size:12px;line-height:16px;color:#6d6d6d;letter-spacing:-0.431px;">Title</span>
<span class="t " style="left:368.40px;top:115px;font-size:12px;line-height:16px;color:#000;letter-spacing:-0.750px;">Na3 P S4</span>
<span class="t " style="left:426.50px;top:115px;font-size:12px;line-height:16px;color:#6d6d6d;letter-spacing:-0.750px;">Pics</span>
<span class="t " style="left:450.80px;top:115px;font-size:12px;line-height:16px;color:#000;letter-spacing:-0.750px;">10</span>
<span class="t " style="left:474.60px;top:115px;font-size:12px;line-height:16px;color:#6d6d6d;letter-spacing:-0.462px;">Code</span>
<span class="t " style="left:517.40px;top:115px;font-size:12px;line-height:16px;color:#6d6d6d;letter-spacing:-0.111px;">Formula sum</span>
<span class="t " style="left:590.00px;top:115px;font-size:12px;line-height:16px;color:#000;letter-spacing:-0.750px;">P2 S8 Na6</span>
<span class="t " style="left:654.60px;top:115px;font-size:12px;line-height:16px;color:#6d6d6d;letter-spacing:0.074px;">HM symbol</span>
<span class="t " style="left:719.40px;top:115px;font-size:12px;line-height:16px;color:#000;letter-spacing:-0.501px;">P -4 21 c</span>
<span class="t " style="left:776.50px;top:115px;font-size:12px;line-height:16px;color:#6d6d6d;letter-spacing:-0.750px;">SGR no.</span>
<span class="t " style="left:820.80px;top:115px;font-size:12px;line-height:16px;color:#000;letter-spacing:-0.750px;">114</span>
<span class="t " style="left:850.40px;top:115px;font-size:12px;line-height:16px;color:#6d6d6d;letter-spacing:-0.243px;">Cell parameters</span>
<span class="t " style="left:935.50px;top:115px;font-size:12px;line-height:16px;color:#000;letter-spacing:-0.584px;">6.952,6.952,7.076,90.00,90.00,90.00</span>
<div class="b" style="left:1px;top:82px;width:246px;height:1px;background:#b9c4da;"></div>
<div class="b" style="left:1px;top:83px;width:245px;height:19px;background:#4d6082;"></div>
<div class="b" style="left:246px;top:83px;width:1px;height:19px;background:#8e9bbc;"></div>
<div class="b" style="left:246px;top:102px;width:1px;height:847px;background:#f4f4f4;"></div>
<span class="t " style="left:6.30px;top:84px;font-size:12px;line-height:16px;color:#fff;letter-spacing:-0.127px;">More Pictures</span>
<svg class="b" style="left:196px;top:85px;" width="46" height="14" viewBox="0 0 46 14"><polygon points="0.8,4.9 10.2,4.9 5.5,10.2" fill="#fff"/>
<path d="M19.6 8V1.8H23.2V8" stroke="#fff" stroke-width="1.4" fill="none"/><rect x="22" y="1.8" width="1.9" height="6.5" fill="#fff"/><rect x="17.1" y="8.1" width="8.8" height="1.5" fill="#fff"/><rect x="20.8" y="9.5" width="1.8" height="3.4" fill="#fff"/>
<path d="M34.4 2.4L42.4 10.6M42.4 2.4L34.4 10.6" stroke="#fff" stroke-width="2.4"/></svg>
<div class="b" style="left:1px;top:102px;width:230px;height:847px;background:#ffffff;"></div>
<div class="b" style="left:231px;top:102px;width:15px;height:847px;background:#f0f0f0;"></div>
<div class="b" style="left:231px;top:119px;width:15px;height:449px;background:#cdcdcd;"></div>
<svg class="b" style="left:231px;top:102px;" width="15" height="17" viewBox="0 0 15 17"><path d="M3.8 10.8L7.5 7L11.2 10.8" fill="none" stroke="#555" stroke-width="2.2"/></svg>
<svg class="b" style="left:231px;top:931px;" width="15" height="17" viewBox="0 0 15 17"><path d="M3.8 6.2L7.5 10L11.2 6.2" fill="none" stroke="#555" stroke-width="2.2"/></svg>
<div class="b" style="left:35px;top:108px;width:160px;height:140px;border:1px solid #a6a6a6;background:linear-gradient(#f3f3f3,#ececec 30%,#d2d2d2);box-shadow:inset 0 0 0 1px #fff"></div>
<div class="b" style="left:42px;top:126.8px;width:146px;height:102.00000000000001px;background:#b8b8b8;"></div>
<svg class="b" style="left:42.5px;top:127.3px" width="145" height="101.00000000000001" viewBox="0 0 145 101.00000000000001"><defs><radialGradient id="gy" cx="0.42" cy="0.38" r="0.6"><stop offset="0" stop-color="#ffff9a"/><stop offset="0.25" stop-color="#ffff00"/><stop offset="1" stop-color="#d8d800"/></radialGradient><radialGradient id="gw" cx="0.42" cy="0.38" r="0.6"><stop offset="0" stop-color="#fff"/><stop offset="0.5" stop-color="#e8e8e8"/><stop offset="1" stop-color="#9a9a9a"/></radialGradient></defs><rect width="145" height="101.00000000000001" fill="#000"/><g transform="scale(0.17062) translate(-103,-160)"><rect x="346" y="225" width="419" height="418" fill="none" stroke="#8a8a8a" stroke-width="4"/><path d="M290 268L375 325M375 325L522 250M522 250L470 370M522 250L595 397M550 228L688 310M705 270L688 310M375 325L295 472M470 370L325 452M470 370L557 435M595 397L557 435M595 397L712 475M688 310L740 455M295 472L442 527M325 452L405 572M498 477L442 527M527 457L603 525M712 475L603 525M712 475L640 612M442 527L525 667M405 572L550 643M603 525L525 667M640 612L550 643M405 572L293 684M640 612L708 688M350 640L405 572M325 452L442 527M557 435L603 525M640 612L737 663M320 660L405 572M498 477L527 457" stroke="#c8820a" stroke-width="5" fill="none"/><rect x="290" y="270" width="418" height="418" fill="none" stroke="#bdbdbd" stroke-width="4"/><path d="M522 250L595 397M325 452L470 370" stroke="#e8d0a0" stroke-width="3" fill="none"/><circle cx="346" cy="224" r="13" fill="#ff00ff"/><circle cx="290" cy="268" r="13" fill="#ff00ff"/><circle cx="762" cy="229" r="13" fill="#ff00ff"/><circle cx="705" cy="270" r="13" fill="#ff00ff"/><circle cx="527" cy="457" r="13" fill="#ff00ff"/><circle cx="350" cy="640" r="13" fill="#ff00ff"/><circle cx="293" cy="684" r="13" fill="#ff00ff"/><circle cx="765" cy="643" r="13" fill="#ff00ff"/><circle cx="708" cy="688" r="13" fill="#ff00ff"/><circle cx="318" cy="243" r="17" fill="url(#gw)"/><circle cx="550" cy="228" r="17" fill="url(#gw)"/><circle cx="522" cy="250" r="17" fill="url(#gw)"/><circle cx="733" cy="247" r="17" fill="url(#gw)"/><circle cx="295" cy="472" r="17" fill="url(#gw)"/><circle cx="325" cy="452" r="17" fill="url(#gw)"/><circle cx="498" cy="477" r="17" fill="url(#gw)"/><circle cx="557" cy="435" r="17" fill="url(#gw)"/><circle cx="712" cy="475" r="17" fill="url(#gw)"/><circle cx="740" cy="455" r="17" fill="url(#gw)"/><circle cx="320" cy="660" r="17" fill="url(#gw)"/><circle cx="525" cy="667" r="17" fill="url(#gw)"/><circle cx="550" cy="643" r="17" fill="url(#gw)"/><circle cx="737" cy="663" r="17" fill="url(#gw)"/><circle cx="375" cy="325" r="32" fill="url(#gy)"/><circle cx="470" cy="370" r="32" fill="url(#gy)"/><circle cx="595" cy="397" r="32" fill="url(#gy)"/><circle cx="688" cy="310" r="32" fill="url(#gy)"/><circle cx="442" cy="527" r="32" fill="url(#gy)"/><circle cx="405" cy="572" r="32" fill="url(#gy)"/><circle cx="603" cy="525" r="32" fill="url(#gy)"/><circle cx="640" cy="612" r="32" fill="url(#gy)"/><path d="M178 178.0V248.0M170.0 238H238.0" stroke="#ddd" stroke-width="2.0" stroke-dasharray="6.0 3.0" fill="none"/><polygon points="214.0,234.0 214.0,242.0 230.0,238" fill="#fff"/><circle cx="905.0" cy="676.0" r="11.0" fill="#ff00ff"/><rect x="919.0" y="674.0" width="12.0" height="3.0" fill="#bbb" opacity="0.7"/><circle cx="905.0" cy="706.0" r="11.0" fill="#ffff00"/><rect x="919.0" y="704.0" width="12.0" height="3.0" fill="#bbb" opacity="0.7"/><circle cx="905.0" cy="736.0" r="11.0" fill="url(#gw)"/><rect x="919.0" y="734.0" width="12.0" height="3.0" fill="#bbb" opacity="0.7"/></g></svg>
<span class="t " style="left:92.90px;top:250px;font-size:12px;line-height:16px;color:#000;letter-spacing:-0.395px;">Picture 1</span>
<div class="b" style="left:35px;top:278px;width:160px;height:140px;border:1px solid #a6a6a6;background:linear-gradient(#f3f3f3,#ececec 30%,#d2d2d2);box-shadow:inset 0 0 0 1px #fff"></div>
<div class="b" style="left:42px;top:293.2px;width:146px;height:109.5px;background:#b8b8b8;"></div>
<svg class="b" style="left:42.5px;top:293.7px" width="145" height="108.5" viewBox="0 0 145 108.5"><defs><radialGradient id="gy" cx="0.42" cy="0.38" r="0.6"><stop offset="0" stop-color="#ffff9a"/><stop offset="0.25" stop-color="#ffff00"/><stop offset="1" stop-color="#d8d800"/></radialGradient><radialGradient id="gw" cx="0.42" cy="0.38" r="0.6"><stop offset="0" stop-color="#fff"/><stop offset="0.5" stop-color="#e8e8e8"/><stop offset="1" stop-color="#9a9a9a"/></radialGradient></defs><rect width="145" height="108.5" fill="#000"/><g transform="scale(0.11544) translate(-65,-32)"><rect x="485" y="230" width="490" height="490" fill="none" stroke="#8a8a8a" stroke-width="5"/><polygon points="402,150 549,153 582,300 457,285" fill="#0a6a8c"/><polygon points="402,150 549,153 457,285" fill="#0f86ae"/><polygon points="335,195 482,200 515,348 328,375" fill="#0a7296"/><polygon points="335,195 482,200 328,375" fill="#1596c2"/><polygon points="482,200 515,348 328,375" fill="#0c7ea6" opacity="0.9"/><path d="M328 375L482 200M457 285L549 153" stroke="#1030e0" stroke-width="3"/><circle cx="415" cy="280" r="10" fill="#7030c0"/><circle cx="467" cy="230" r="8" fill="#6030b0"/><circle cx="335" cy="195" r="10" fill="#ffff00"/><circle cx="482" cy="200" r="10" fill="#ffff00"/><circle cx="515" cy="348" r="10" fill="#ffff00"/><circle cx="328" cy="375" r="10" fill="#ffff00"/><circle cx="402" cy="150" r="10" fill="#ffff00"/><circle cx="549" cy="153" r="10" fill="#ffff00"/><circle cx="582" cy="300" r="10" fill="#ffff00"/><circle cx="457" cy="285" r="10" fill="#ffff00"/><polygon points="890,152 1037,155 1070,302 945,287" fill="#0a6a8c"/><polygon points="890,152 1037,155 945,287" fill="#0f86ae"/><polygon points="823,197 970,202 1003,350 816,377" fill="#0a7296"/><polygon points="823,197 970,202 816,377" fill="#1596c2"/><polygon points="970,202 1003,350 816,377" fill="#0c7ea6" opacity="0.9"/><path d="M816 377L970 202M945 287L1037 155" stroke="#1030e0" stroke-width="3"/><circle cx="903" cy="282" r="10" fill="#7030c0"/><circle cx="955" cy="232" r="8" fill="#6030b0"/><circle cx="823" cy="197" r="10" fill="#ffff00"/><circle cx="970" cy="202" r="10" fill="#ffff00"/><circle cx="1003" cy="350" r="10" fill="#ffff00"/><circle cx="816" cy="377" r="10" fill="#ffff00"/><circle cx="890" cy="152" r="10" fill="#ffff00"/><circle cx="1037" cy="155" r="10" fill="#ffff00"/><circle cx="1070" cy="302" r="10" fill="#ffff00"/><circle cx="945" cy="287" r="10" fill="#ffff00"/><polygon points="407,640 554,643 587,790 462,775" fill="#0a6a8c"/><polygon points="407,640 554,643 462,775" fill="#0f86ae"/><polygon points="340,685 487,690 520,838 333,865" fill="#0a7296"/><polygon points="340,685 487,690 333,865" fill="#1596c2"/><polygon points="487,690 520,838 333,865" fill="#0c7ea6" opacity="0.9"/><path d="M333 865L487 690M462 775L554 643" stroke="#1030e0" stroke-width="3"/><circle cx="420" cy="770" r="10" fill="#7030c0"/><circle cx="472" cy="720" r="8" fill="#6030b0"/><circle cx="340" cy="685" r="10" fill="#ffff00"/><circle cx="487" cy="690" r="10" fill="#ffff00"/><circle cx="520" cy="838" r="10" fill="#ffff00"/><circle cx="333" cy="865" r="10" fill="#ffff00"/><circle cx="407" cy="640" r="10" fill="#ffff00"/><circle cx="554" cy="643" r="10" fill="#ffff00"/><circle cx="587" cy="790" r="10" fill="#ffff00"/><circle cx="462" cy="775" r="10" fill="#ffff00"/><polygon points="892,642 1039,645 1072,792 947,777" fill="#0a6a8c"/><polygon points="892,642 1039,645 947,777" fill="#0f86ae"/><polygon points="825,687 972,692 1005,840 818,867" fill="#0a7296"/><polygon points="825,687 972,692 818,867" fill="#1596c2"/><polygon points="972,692 1005,840 818,867" fill="#0c7ea6" opacity="0.9"/><path d="M818 867L972 692M947 777L1039 645" stroke="#1030e0" stroke-width="3"/><circle cx="905" cy="772" r="10" fill="#7030c0"/><circle cx="957" cy="722" r="8" fill="#6030b0"/><circle cx="825" cy="687" r="10" fill="#ffff00"/><circle cx="972" cy="692" r="10" fill="#ffff00"/><circle cx="1005" cy="840" r="10" fill="#ffff00"/><circle cx="818" cy="867" r="10" fill="#ffff00"/><circle cx="892" cy="642" r="10" fill="#ffff00"/><circle cx="1039" cy="645" r="10" fill="#ffff00"/><circle cx="1072" cy="792" r="10" fill="#ffff00"/><circle cx="947" cy="777" r="10" fill="#ffff00"/><path d="M688 258L580 305M580 305L515 350M515 350L440 498M688 258L625 405M625 405L455 495M720 235L810 290M688 258L770 432M770 432L905 520M770 432L940 495M900 370L940 495M420 520L595 590M455 495L550 640M595 590L690 750M550 640L725 720M905 520L780 585M780 585L725 720M905 520L825 685M825 685L690 750M485 690L595 590M625 405L770 432M595 590L770 432M440 498L485 690M440 498L690 750M940 495L780 585" stroke="#c8820a" stroke-width="6" fill="none"/><rect x="415" y="283" width="490" height="492" fill="none" stroke="#c8c8c8" stroke-width="5" opacity="0.85"/><polygon points="625,405 770,432 780,585 595,590" fill="#0a7a9c"/><polygon points="625,405 770,432 690,500" fill="#12a0c8"/><polygon points="625,405 690,500 595,590" fill="#0e8eb6"/><path d="M595 590L770 432" stroke="#d89a10" stroke-width="4"/><circle cx="693" cy="500" r="11" fill="#c030e0"/><circle cx="625" cy="405" r="11" fill="#ffff00"/><circle cx="770" cy="432" r="11" fill="#ffff00"/><circle cx="780" cy="585" r="11" fill="#ffff00"/><circle cx="595" cy="590" r="11" fill="#ffff00"/><circle cx="720" cy="235" r="19" fill="url(#gw)"/><circle cx="688" cy="258" r="19" fill="url(#gw)"/><circle cx="455" cy="495" r="19" fill="url(#gw)"/><circle cx="420" cy="520" r="19" fill="url(#gw)"/><circle cx="940" cy="497" r="19" fill="url(#gw)"/><circle cx="908" cy="522" r="19" fill="url(#gw)"/><circle cx="660" cy="525" r="19" fill="url(#gw)"/><circle cx="723" cy="722" r="19" fill="url(#gw)"/><circle cx="690" cy="750" r="19" fill="url(#gw)"/><path d="M152 38.39999999999999V139.43333333333334M140.45333333333332 125H238.60000000000002" stroke="#ddd" stroke-width="2.8866666666666667" stroke-dasharray="8.66 4.33" fill="none"/><polygon points="203.96,119.22666666666666 203.96,130.77333333333334 227.05333333333334,125" fill="#fff"/><circle cx="1254.3333333333333" cy="878.8" r="12.466666666666667" fill="#ff00ff"/><rect x="1270.2" y="876.5333333333333" width="13.6" height="3.4" fill="#bbb" opacity="0.7"/><circle cx="1254.3333333333333" cy="912.8" r="12.466666666666667" fill="#ffff00"/><rect x="1270.2" y="910.5333333333333" width="13.6" height="3.4" fill="#bbb" opacity="0.7"/><circle cx="1254.3333333333333" cy="946.8" r="12.466666666666667" fill="url(#gw)"/><rect x="1270.2" y="944.5333333333333" width="13.6" height="3.4" fill="#bbb" opacity="0.7"/></g></svg>
<span class="t " style="left:40.00px;top:420px;font-size:12px;line-height:16px;color:#000;letter-spacing:-0.027px;">Unit cell with PO4 polyhedra</span>
<div class="b" style="left:35px;top:448px;width:160px;height:140px;border:1px solid #a6a6a6;background:linear-gradient(#f3f3f3,#ececec 30%,#d2d2d2);box-shadow:inset 0 0 0 1px #fff"></div>
<div class="b" style="left:42px;top:462.4px;width:146px;height:110.30000000000007px;background:#b8b8b8;"></div>
<svg class="b" style="left:42.5px;top:462.9px" width="145" height="109.30000000000007" viewBox="0 0 145 109.30000000000007"><defs><radialGradient id="gy" cx="0.42" cy="0.38" r="0.6"><stop offset="0" stop-color="#ffff9a"/><stop offset="0.25" stop-color="#ffff00"/><stop offset="1" stop-color="#d8d800"/></radialGradient><radialGradient id="gw" cx="0.42" cy="0.38" r="0.6"><stop offset="0" stop-color="#fff"/><stop offset="0.5" stop-color="#e8e8e8"/><stop offset="1" stop-color="#9a9a9a"/></radialGradient></defs><rect width="145" height="109.30000000000007" fill="#666699"/><g transform="scale(0.17077) translate(-42,-105)"><path d="M238.0 254.4L259.0 260.9M238.0 254.4L248.3 273.8M238.0 254.4L231.5 275.4M238.0 254.4L218.5 264.6M238.0 254.4L217.0 247.9M238.0 254.4L227.7 234.9M238.0 254.4L244.5 233.4M238.0 254.4L257.5 244.1M238.0 311.8L259.0 318.3M238.0 311.8L248.3 331.2M238.0 311.8L231.5 332.8M238.0 311.8L218.5 322.0M238.0 311.8L217.0 305.2M238.0 311.8L227.7 292.3M238.0 311.8L244.5 290.7M238.0 311.8L257.5 301.5M238.0 369.1L259.0 375.6M238.0 369.1L248.3 388.6M238.0 369.1L231.5 390.1M238.0 369.1L218.5 379.4M238.0 369.1L217.0 362.6M238.0 369.1L227.7 349.7M238.0 369.1L244.5 348.1M238.0 369.1L257.5 358.9M238.0 426.5L259.0 433.0M238.0 426.5L248.3 446.0M238.0 426.5L231.5 447.5M238.0 426.5L218.5 436.8M238.0 426.5L217.0 420.0M238.0 426.5L227.7 407.0M238.0 426.5L244.5 405.5M238.0 426.5L257.5 416.2M238.0 483.9L259.0 490.4M238.0 483.9L248.3 503.3M238.0 483.9L231.5 504.9M238.0 483.9L218.5 494.1M238.0 483.9L217.0 477.4M238.0 483.9L227.7 464.4M238.0 483.9L244.5 462.9M238.0 483.9L257.5 473.6M238.0 541.2L259.0 547.8M238.0 541.2L248.3 560.7M238.0 541.2L231.5 562.3M238.0 541.2L218.5 551.5M238.0 541.2L217.0 534.7M238.0 541.2L227.7 521.8M238.0 541.2L244.5 520.2M238.0 541.2L257.5 531.0M238.0 598.6L259.0 605.1M238.0 598.6L248.3 618.1M238.0 598.6L231.5 619.6M238.0 598.6L218.5 608.9M238.0 598.6L217.0 592.1M238.0 598.6L227.7 579.2M238.0 598.6L244.5 577.6M238.0 598.6L257.5 588.4M295.4 197.0L316.4 203.5M295.4 197.0L305.6 216.5M295.4 197.0L288.9 218.0M295.4 197.0L275.9 207.3M295.4 197.0L274.4 190.5M295.4 197.0L285.1 177.5M295.4 197.0L301.9 176.0M295.4 197.0L314.8 186.7M295.4 656.0L316.4 662.5M295.4 656.0L305.6 675.5M295.4 656.0L288.9 677.0M295.4 656.0L275.9 666.3M295.4 656.0L274.4 649.5M295.4 656.0L285.1 636.5M295.4 656.0L301.9 635.0M295.4 656.0L314.8 645.7M352.8 197.0L373.8 203.5M352.8 197.0L363.0 216.5M352.8 197.0L346.2 218.0M352.8 197.0L333.3 207.3M352.8 197.0L331.7 190.5M352.8 197.0L342.5 177.5M352.8 197.0L359.3 176.0M352.8 197.0L372.2 186.7M352.8 656.0L373.8 662.5M352.8 656.0L363.0 675.5M352.8 656.0L346.2 677.0M352.8 656.0L333.3 666.3M352.8 656.0L331.7 649.5M352.8 656.0L342.5 636.5M352.8 656.0L359.3 635.0M352.8 656.0L372.2 645.7M410.1 197.0L431.1 203.5M410.1 197.0L420.4 216.5M410.1 197.0L403.6 218.0M410.1 197.0L390.7 207.3M410.1 197.0L389.1 190.5M410.1 197.0L399.9 177.5M410.1 197.0L416.6 176.0M410.1 197.0L429.6 186.7M410.1 656.0L431.1 662.5M410.1 656.0L420.4 675.5M410.1 656.0L403.6 677.0M410.1 656.0L390.7 666.3M410.1 656.0L389.1 649.5M410.1 656.0L399.9 636.5M410.1 656.0L416.6 635.0M410.1 656.0L429.6 645.7M467.5 197.0L488.5 203.5M467.5 197.0L477.8 216.5M467.5 197.0L461.0 218.0M467.5 197.0L448.0 207.3M467.5 197.0L446.5 190.5M467.5 197.0L457.2 177.5M467.5 197.0L474.0 176.0M467.5 197.0L487.0 186.7M467.5 656.0L488.5 662.5M467.5 656.0L477.8 675.5M467.5 656.0L461.0 677.0M467.5 656.0L448.0 666.3M467.5 656.0L446.5 649.5M467.5 656.0L457.2 636.5M467.5 656.0L474.0 635.0M467.5 656.0L487.0 645.7M524.9 197.0L545.9 203.5M524.9 197.0L535.1 216.5M524.9 197.0L518.4 218.0M524.9 197.0L505.4 207.3M524.9 197.0L503.9 190.5M524.9 197.0L514.6 177.5M524.9 197.0L531.4 176.0M524.9 197.0L544.3 186.7M524.9 656.0L545.9 662.5M524.9 656.0L535.1 675.5M524.9 656.0L518.4 677.0M524.9 656.0L505.4 666.3M524.9 656.0L503.9 649.5M524.9 656.0L514.6 636.5M524.9 656.0L531.4 635.0M524.9 656.0L544.3 645.7M582.2 197.0L603.3 203.5M582.2 197.0L592.5 216.5M582.2 197.0L575.7 218.0M582.2 197.0L562.8 207.3M582.2 197.0L561.2 190.5M582.2 197.0L572.0 177.5M582.2 197.0L588.8 176.0M582.2 197.0L601.7 186.7M582.2 656.0L603.3 662.5M582.2 656.0L592.5 675.5M582.2 656.0L575.7 677.0M582.2 656.0L562.8 666.3M582.2 656.0L561.2 649.5M582.2 656.0L572.0 636.5M582.2 656.0L588.8 635.0M582.2 656.0L601.7 645.7M639.6 197.0L660.6 203.5M639.6 197.0L649.9 216.5M639.6 197.0L633.1 218.0M639.6 197.0L620.2 207.3M639.6 197.0L618.6 190.5M639.6 197.0L629.4 177.5M639.6 197.0L646.1 176.0M639.6 197.0L659.1 186.7M639.6 656.0L660.6 662.5M639.6 656.0L649.9 675.5M639.6 656.0L633.1 677.0M639.6 656.0L620.2 666.3M639.6 656.0L618.6 649.5M639.6 656.0L629.4 636.5M639.6 656.0L646.1 635.0M639.6 656.0L659.1 645.7M697.0 254.4L718.0 260.9M697.0 254.4L707.3 273.8M697.0 254.4L690.5 275.4M697.0 254.4L677.5 264.6M697.0 254.4L676.0 247.9M697.0 254.4L686.7 234.9M697.0 254.4L703.5 233.4M697.0 254.4L716.5 244.1M697.0 311.8L718.0 318.3M697.0 311.8L707.3 331.2M697.0 311.8L690.5 332.8M697.0 311.8L677.5 322.0M697.0 311.8L676.0 305.2M697.0 311.8L686.7 292.3M697.0 311.8L703.5 290.7M697.0 311.8L716.5 301.5M697.0 369.1L718.0 375.6M697.0 369.1L707.3 388.6M697.0 369.1L690.5 390.1M697.0 369.1L677.5 379.4M697.0 369.1L676.0 362.6M697.0 369.1L686.7 349.7M697.0 369.1L703.5 348.1M697.0 369.1L716.5 358.9M697.0 426.5L718.0 433.0M697.0 426.5L707.3 446.0M697.0 426.5L690.5 447.5M697.0 426.5L677.5 436.8M697.0 426.5L676.0 420.0M697.0 426.5L686.7 407.0M697.0 426.5L703.5 405.5M697.0 426.5L716.5 416.2M697.0 483.9L718.0 490.4M697.0 483.9L707.3 503.3M697.0 483.9L690.5 504.9M697.0 483.9L677.5 494.1M697.0 483.9L676.0 477.4M697.0 483.9L686.7 464.4M697.0 483.9L703.5 462.9M697.0 483.9L716.5 473.6M697.0 541.2L718.0 547.8M697.0 541.2L707.3 560.7M697.0 541.2L690.5 562.3M697.0 541.2L677.5 551.5M697.0 541.2L676.0 534.7M697.0 541.2L686.7 521.8M697.0 541.2L703.5 520.2M697.0 541.2L716.5 531.0M697.0 598.6L718.0 605.1M697.0 598.6L707.3 618.1M697.0 598.6L690.5 619.6M697.0 598.6L677.5 608.9M697.0 598.6L676.0 592.1M697.0 598.6L686.7 579.2M697.0 598.6L703.5 577.6M697.0 598.6L716.5 588.4" stroke="#8a6a48" stroke-width="2.5" fill="none"/><path d="M352.8 197.0L334.7 218.1M295.4 197.0L277.4 233.3M295.4 197.0L316.4 236.3M295.4 197.0L334.7 218.1M238.0 254.4L277.4 233.3M295.4 254.4L277.4 233.3M295.4 254.4L316.4 236.3M352.8 254.4L316.4 236.3M352.8 254.4L334.7 218.1M238.0 254.4L274.5 272.5M238.0 254.4L256.3 290.7M295.4 254.4L274.5 272.5M295.4 254.4L313.6 275.4M352.8 254.4L313.6 275.4M352.8 254.4L331.9 293.5M295.4 311.8L274.5 272.5M295.4 311.8L313.6 275.4M295.4 311.8L256.3 290.7M295.4 311.8L331.9 293.5M238.0 311.8L256.3 290.7M352.8 311.8L331.9 293.5M238.0 311.8L259.2 329.9M352.8 311.8L334.7 332.8M295.4 311.8L259.2 329.9M295.4 311.8L277.4 348.0M295.4 311.8L316.4 351.0M295.4 311.8L334.7 332.8M238.0 369.1L259.2 329.9M238.0 369.1L277.4 348.0M295.4 369.1L277.4 348.0M295.4 369.1L316.4 351.0M352.8 369.1L316.4 351.0M352.8 369.1L334.7 332.8M238.0 369.1L274.5 387.3M238.0 369.1L256.3 405.5M295.4 369.1L274.5 387.3M295.4 369.1L313.6 390.1M352.8 369.1L313.6 390.1M352.8 369.1L331.9 408.3M295.4 426.5L274.5 387.3M295.4 426.5L313.6 390.1M295.4 426.5L256.3 405.5M295.4 426.5L331.9 408.3M238.0 426.5L256.3 405.5M352.8 426.5L331.9 408.3M238.0 426.5L259.2 444.7M352.8 426.5L334.7 447.6M295.4 426.5L259.2 444.7M295.4 426.5L277.4 462.8M295.4 426.5L316.4 465.8M295.4 426.5L334.7 447.6M238.0 483.9L259.2 444.7M238.0 483.9L277.4 462.8M295.4 483.9L277.4 462.8M295.4 483.9L316.4 465.8M352.8 483.9L316.4 465.8M352.8 483.9L334.7 447.6M238.0 483.9L274.5 502.0M238.0 483.9L256.3 520.2M295.4 483.9L274.5 502.0M295.4 483.9L313.6 504.9M352.8 483.9L313.6 504.9M352.8 483.9L331.9 523.0M295.4 541.2L274.5 502.0M295.4 541.2L313.6 504.9M295.4 541.2L256.3 520.2M295.4 541.2L331.9 523.0M238.0 541.2L256.3 520.2M352.8 541.2L331.9 523.0M238.0 541.2L259.2 559.4M352.8 541.2L334.7 562.3M295.4 541.2L259.2 559.4M295.4 541.2L277.4 577.5M295.4 541.2L316.4 580.5M295.4 541.2L334.7 562.3M238.0 598.6L259.2 559.4M238.0 598.6L277.4 577.5M295.4 598.6L277.4 577.5M295.4 598.6L316.4 580.5M352.8 598.6L316.4 580.5M352.8 598.6L334.7 562.3M238.0 598.6L274.5 616.8M295.4 598.6L274.5 616.8M295.4 598.6L313.6 619.6M352.8 598.6L313.6 619.6M352.8 598.6L331.9 637.8M295.4 656.0L274.5 616.8M295.4 656.0L313.6 619.6M295.4 656.0L331.9 637.8M352.8 656.0L331.9 637.8M352.8 197.0L374.0 215.2M467.5 197.0L449.4 218.1M410.1 197.0L374.0 215.2M410.1 197.0L392.1 233.3M410.1 197.0L431.1 236.3M410.1 197.0L449.4 218.1M352.8 254.4L374.0 215.2M352.8 254.4L392.1 233.3M410.1 254.4L392.1 233.3M410.1 254.4L431.1 236.3M467.5 254.4L431.1 236.3M467.5 254.4L449.4 218.1M352.8 254.4L389.2 272.5M352.8 254.4L371.1 290.7M410.1 254.4L389.2 272.5M410.1 254.4L428.3 275.4M467.5 254.4L428.3 275.4M467.5 254.4L446.6 293.5M410.1 311.8L389.2 272.5M410.1 311.8L428.3 275.4M410.1 311.8L371.1 290.7M410.1 311.8L446.6 293.5M352.8 311.8L371.1 290.7M467.5 311.8L446.6 293.5M352.8 311.8L374.0 329.9M467.5 311.8L449.4 332.8M410.1 311.8L374.0 329.9M410.1 311.8L392.1 348.0M410.1 311.8L431.1 351.0M410.1 311.8L449.4 332.8M352.8 369.1L374.0 329.9M352.8 369.1L392.1 348.0M410.1 369.1L392.1 348.0M410.1 369.1L431.1 351.0M467.5 369.1L431.1 351.0M467.5 369.1L449.4 332.8M352.8 369.1L389.2 387.3M352.8 369.1L371.1 405.5M410.1 369.1L389.2 387.3M410.1 369.1L428.3 390.1M467.5 369.1L428.3 390.1M467.5 369.1L446.6 408.3M410.1 426.5L389.2 387.3M410.1 426.5L428.3 390.1M410.1 426.5L371.1 405.5M410.1 426.5L446.6 408.3M352.8 426.5L371.1 405.5M467.5 426.5L446.6 408.3M352.8 426.5L374.0 444.7M467.5 426.5L449.4 447.6M410.1 426.5L374.0 444.7M410.1 426.5L392.1 462.8M410.1 426.5L431.1 465.8M410.1 426.5L449.4 447.6M352.8 483.9L374.0 444.7M352.8 483.9L392.1 462.8M410.1 483.9L392.1 462.8M410.1 483.9L431.1 465.8M467.5 483.9L431.1 465.8M467.5 483.9L449.4 447.6M352.8 483.9L389.2 502.0M352.8 483.9L371.1 520.2M410.1 483.9L389.2 502.0M410.1 483.9L428.3 504.9M467.5 483.9L428.3 504.9M467.5 483.9L446.6 523.0M410.1 541.2L389.2 502.0M410.1 541.2L428.3 504.9M410.1 541.2L371.1 520.2M410.1 541.2L446.6 523.0M352.8 541.2L371.1 520.2M467.5 541.2L446.6 523.0M352.8 541.2L374.0 559.4M467.5 541.2L449.4 562.3M410.1 541.2L374.0 559.4M410.1 541.2L392.1 577.5M410.1 541.2L431.1 580.5M410.1 541.2L449.4 562.3M352.8 598.6L374.0 559.4M352.8 598.6L392.1 577.5M410.1 598.6L392.1 577.5M410.1 598.6L431.1 580.5M467.5 598.6L431.1 580.5M467.5 598.6L449.4 562.3M352.8 598.6L389.2 616.8M352.8 598.6L371.1 635.0M410.1 598.6L389.2 616.8M410.1 598.6L428.3 619.6M467.5 598.6L428.3 619.6M467.5 598.6L446.6 637.8M410.1 656.0L389.2 616.8M410.1 656.0L428.3 619.6M410.1 656.0L371.1 635.0M410.1 656.0L446.6 637.8M352.8 656.0L371.1 635.0M467.5 656.0L446.6 637.8M467.5 197.0L488.7 215.2M582.2 197.0L564.2 218.1M524.9 197.0L488.7 215.2M524.9 197.0L506.9 233.3M524.9 197.0L545.9 236.3M524.9 197.0L564.2 218.1M467.5 254.4L488.7 215.2M467.5 254.4L506.9 233.3M524.9 254.4L506.9 233.3M524.9 254.4L545.9 236.3M582.2 254.4L545.9 236.3M582.2 254.4L564.2 218.1M467.5 254.4L504.0 272.5M467.5 254.4L485.8 290.7M524.9 254.4L504.0 272.5M524.9 254.4L543.1 275.4M582.2 254.4L543.1 275.4M582.2 254.4L561.4 293.5M524.9 311.8L504.0 272.5M524.9 311.8L543.1 275.4M524.9 311.8L485.8 290.7M524.9 311.8L561.4 293.5M467.5 311.8L485.8 290.7M582.2 311.8L561.4 293.5M467.5 311.8L488.7 329.9M582.2 311.8L564.2 332.8M524.9 311.8L488.7 329.9M524.9 311.8L506.9 348.0M524.9 311.8L545.9 351.0M524.9 311.8L564.2 332.8M467.5 369.1L488.7 329.9M467.5 369.1L506.9 348.0M524.9 369.1L506.9 348.0M524.9 369.1L545.9 351.0M582.2 369.1L545.9 351.0M582.2 369.1L564.2 332.8M467.5 369.1L504.0 387.3M467.5 369.1L485.8 405.5M524.9 369.1L504.0 387.3M524.9 369.1L543.1 390.1M582.2 369.1L543.1 390.1M582.2 369.1L561.4 408.3M524.9 426.5L504.0 387.3M524.9 426.5L543.1 390.1M524.9 426.5L485.8 405.5M524.9 426.5L561.4 408.3M467.5 426.5L485.8 405.5M582.2 426.5L561.4 408.3M467.5 426.5L488.7 444.7M582.2 426.5L564.2 447.6M524.9 426.5L488.7 444.7M524.9 426.5L506.9 462.8M524.9 426.5L545.9 465.8M524.9 426.5L564.2 447.6M467.5 483.9L488.7 444.7M467.5 483.9L506.9 462.8M524.9 483.9L506.9 462.8M524.9 483.9L545.9 465.8M582.2 483.9L545.9 465.8M582.2 483.9L564.2 447.6M467.5 483.9L504.0 502.0M467.5 483.9L485.8 520.2M524.9 483.9L504.0 502.0M524.9 483.9L543.1 504.9M582.2 483.9L543.1 504.9M582.2 483.9L561.4 523.0M524.9 541.2L504.0 502.0M524.9 541.2L543.1 504.9M524.9 541.2L485.8 520.2M524.9 541.2L561.4 523.0M467.5 541.2L485.8 520.2M582.2 541.2L561.4 523.0M467.5 541.2L488.7 559.4M582.2 541.2L564.2 562.3M524.9 541.2L488.7 559.4M524.9 541.2L506.9 577.5M524.9 541.2L545.9 580.5M524.9 541.2L564.2 562.3M467.5 598.6L488.7 559.4M467.5 598.6L506.9 577.5M524.9 598.6L506.9 577.5M524.9 598.6L545.9 580.5M582.2 598.6L545.9 580.5M582.2 598.6L564.2 562.3M467.5 598.6L504.0 616.8M467.5 598.6L485.8 635.0M524.9 598.6L504.0 616.8M524.9 598.6L543.1 619.6M582.2 598.6L543.1 619.6M582.2 598.6L561.4 637.8M524.9 656.0L504.0 616.8M524.9 656.0L543.1 619.6M524.9 656.0L485.8 635.0M524.9 656.0L561.4 637.8M467.5 656.0L485.8 635.0M582.2 656.0L561.4 637.8M582.2 197.0L603.5 215.2M639.6 197.0L603.5 215.2M639.6 197.0L621.6 233.3M639.6 197.0L660.6 236.3M582.2 254.4L603.5 215.2M582.2 254.4L621.6 233.3M639.6 254.4L621.6 233.3M639.6 254.4L660.6 236.3M697.0 254.4L660.6 236.3M582.2 254.4L618.7 272.5M582.2 254.4L600.6 290.7M639.6 254.4L618.7 272.5M639.6 254.4L657.8 275.4M697.0 254.4L657.8 275.4M697.0 254.4L676.1 293.5M639.6 311.8L618.7 272.5M639.6 311.8L657.8 275.4M639.6 311.8L600.6 290.7M639.6 311.8L676.1 293.5M582.2 311.8L600.6 290.7M697.0 311.8L676.1 293.5M582.2 311.8L603.5 329.9M697.0 311.8L678.9 332.8M639.6 311.8L603.5 329.9M639.6 311.8L621.6 348.0M639.6 311.8L660.6 351.0M639.6 311.8L678.9 332.8M582.2 369.1L603.5 329.9M582.2 369.1L621.6 348.0M639.6 369.1L621.6 348.0M639.6 369.1L660.6 351.0M697.0 369.1L660.6 351.0M697.0 369.1L678.9 332.8M582.2 369.1L618.7 387.3M582.2 369.1L600.6 405.5M639.6 369.1L618.7 387.3M639.6 369.1L657.8 390.1M697.0 369.1L657.8 390.1M697.0 369.1L676.1 408.3M639.6 426.5L618.7 387.3M639.6 426.5L657.8 390.1M639.6 426.5L600.6 405.5M639.6 426.5L676.1 408.3M582.2 426.5L600.6 405.5M697.0 426.5L676.1 408.3M582.2 426.5L603.5 444.7M697.0 426.5L678.9 447.6M639.6 426.5L603.5 444.7M639.6 426.5L621.6 462.8M639.6 426.5L660.6 465.8M639.6 426.5L678.9 447.6M582.2 483.9L603.5 444.7M582.2 483.9L621.6 462.8M639.6 483.9L621.6 462.8M639.6 483.9L660.6 465.8M697.0 483.9L660.6 465.8M697.0 483.9L678.9 447.6M582.2 483.9L618.7 502.0M582.2 483.9L600.6 520.2M639.6 483.9L618.7 502.0M639.6 483.9L657.8 504.9M697.0 483.9L657.8 504.9M697.0 483.9L676.1 523.0M639.6 541.2L618.7 502.0M639.6 541.2L657.8 504.9M639.6 541.2L600.6 520.2M639.6 541.2L676.1 523.0M582.2 541.2L600.6 520.2M697.0 541.2L676.1 523.0M582.2 541.2L603.5 559.4M697.0 541.2L678.9 562.3M639.6 541.2L603.5 559.4M639.6 541.2L621.6 577.5M639.6 541.2L660.6 580.5M639.6 541.2L678.9 562.3M582.2 598.6L603.5 559.4M582.2 598.6L621.6 577.5M639.6 598.6L621.6 577.5M639.6 598.6L660.6 580.5M697.0 598.6L660.6 580.5M697.0 598.6L678.9 562.3M582.2 598.6L618.7 616.8M582.2 598.6L600.6 635.0M639.6 598.6L618.7 616.8M639.6 598.6L657.8 619.6M697.0 598.6L657.8 619.6M639.6 656.0L618.7 616.8M639.6 656.0L657.8 619.6M639.6 656.0L600.6 635.0M582.2 656.0L600.6 635.0" stroke="#9a7448" stroke-width="2.5" fill="none"/><circle cx="238.0" cy="254.4" r="5.5" fill="#00d000"/><circle cx="238.0" cy="311.8" r="5.5" fill="#00d000"/><circle cx="238.0" cy="369.1" r="5.5" fill="#00d000"/><circle cx="238.0" cy="426.5" r="5.5" fill="#00d000"/><circle cx="238.0" cy="483.9" r="5.5" fill="#00d000"/><circle cx="238.0" cy="541.2" r="5.5" fill="#00d000"/><circle cx="238.0" cy="598.6" r="5.5" fill="#00d000"/><circle cx="295.4" cy="197.0" r="5.5" fill="#00d000"/><circle cx="295.4" cy="254.4" r="5.5" fill="#00d000"/><circle cx="295.4" cy="311.8" r="5.5" fill="#00d000"/><circle cx="295.4" cy="369.1" r="5.5" fill="#00d000"/><circle cx="295.4" cy="426.5" r="5.5" fill="#00d000"/><circle cx="295.4" cy="483.9" r="5.5" fill="#00d000"/><circle cx="295.4" cy="541.2" r="5.5" fill="#00d000"/><circle cx="295.4" cy="598.6" r="5.5" fill="#00d000"/><circle cx="295.4" cy="656.0" r="5.5" fill="#00d000"/><circle cx="352.8" cy="197.0" r="5.5" fill="#00d000"/><circle cx="352.8" cy="254.4" r="5.5" fill="#00d000"/><circle cx="352.8" cy="311.8" r="5.5" fill="#00d000"/><circle cx="352.8" cy="369.1" r="5.5" fill="#00d000"/><circle cx="352.8" cy="426.5" r="5.5" fill="#00d000"/><circle cx="352.8" cy="483.9" r="5.5" fill="#00d000"/><circle cx="352.8" cy="541.2" r="5.5" fill="#00d000"/><circle cx="352.8" cy="598.6" r="5.5" fill="#00d000"/><circle cx="352.8" cy="656.0" r="5.5" fill="#00d000"/><circle cx="410.1" cy="197.0" r="5.5" fill="#00d000"/><circle cx="410.1" cy="254.4" r="5.5" fill="#00d000"/><circle cx="410.1" cy="311.8" r="5.5" fill="#00d000"/><circle cx="410.1" cy="369.1" r="5.5" fill="#00d000"/><circle cx="410.1" cy="426.5" r="5.5" fill="#00d000"/><circle cx="410.1" cy="483.9" r="5.5" fill="#00d000"/><circle cx="410.1" cy="541.2" r="5.5" fill="#00d000"/><circle cx="410.1" cy="598.6" r="5.5" fill="#00d000"/><circle cx="410.1" cy="656.0" r="5.5" fill="#00d000"/><circle cx="467.5" cy="197.0" r="5.5" fill="#00d000"/><circle cx="467.5" cy="254.4" r="5.5" fill="#00d000"/><circle cx="467.5" cy="311.8" r="5.5" fill="#00d000"/><circle cx="467.5" cy="369.1" r="5.5" fill="#00d000"/><circle cx="467.5" cy="426.5" r="5.5" fill="#00d000"/><circle cx="467.5" cy="483.9" r="5.5" fill="#00d000"/><circle cx="467.5" cy="541.2" r="5.5" fill="#00d000"/><circle cx="467.5" cy="598.6" r="5.5" fill="#00d000"/><circle cx="467.5" cy="656.0" r="5.5" fill="#00d000"/><circle cx="524.9" cy="197.0" r="5.5" fill="#00d000"/><circle cx="524.9" cy="254.4" r="5.5" fill="#00d000"/><circle cx="524.9" cy="311.8" r="5.5" fill="#00d000"/><circle cx="524.9" cy="369.1" r="5.5" fill="#00d000"/><circle cx="524.9" cy="426.5" r="5.5" fill="#00d000"/><circle cx="524.9" cy="483.9" r="5.5" fill="#00d000"/><circle cx="524.9" cy="541.2" r="5.5" fill="#00d000"/><circle cx="524.9" cy="598.6" r="5.5" fill="#00d000"/><circle cx="524.9" cy="656.0" r="5.5" fill="#00d000"/><circle cx="582.2" cy="197.0" r="5.5" fill="#00d000"/><circle cx="582.2" cy="254.4" r="5.5" fill="#00d000"/><circle cx="582.2" cy="311.8" r="5.5" fill="#00d000"/><circle cx="582.2" cy="369.1" r="5.5" fill="#00d000"/><circle cx="582.2" cy="426.5" r="5.5" fill="#00d000"/><circle cx="582.2" cy="483.9" r="5.5" fill="#00d000"/><circle cx="582.2" cy="541.2" r="5.5" fill="#00d000"/><circle cx="582.2" cy="598.6" r="5.5" fill="#00d000"/><circle cx="582.2" cy="656.0" r="5.5" fill="#00d000"/><circle cx="639.6" cy="197.0" r="5.5" fill="#00d000"/><circle cx="639.6" cy="254.4" r="5.5" fill="#00d000"/><circle cx="639.6" cy="311.8" r="5.5" fill="#00d000"/><circle cx="639.6" cy="369.1" r="5.5" fill="#00d000"/><circle cx="639.6" cy="426.5" r="5.5" fill="#00d000"/><circle cx="639.6" cy="483.9" r="5.5" fill="#00d000"/><circle cx="639.6" cy="541.2" r="5.5" fill="#00d000"/><circle cx="639.6" cy="598.6" r="5.5" fill="#00d000"/><circle cx="639.6" cy="656.0" r="5.5" fill="#00d000"/><circle cx="697.0" cy="254.4" r="5.5" fill="#00d000"/><circle cx="697.0" cy="311.8" r="5.5" fill="#00d000"/><circle cx="697.0" cy="369.1" r="5.5" fill="#00d000"/><circle cx="697.0" cy="426.5" r="5.5" fill="#00d000"/><circle cx="697.0" cy="483.9" r="5.5" fill="#00d000"/><circle cx="697.0" cy="541.2" r="5.5" fill="#00d000"/><circle cx="697.0" cy="598.6" r="5.5" fill="#00d000"/><circle cx="238" cy="312" r="4" fill="#e000c0"/><circle cx="353" cy="312" r="4" fill="#e000c0"/><circle cx="468" cy="312" r="4" fill="#e000c0"/><circle cx="582" cy="312" r="4" fill="#e000c0"/><circle cx="697" cy="312" r="4" fill="#e000c0"/><circle cx="353" cy="427" r="4" fill="#e000c0"/><circle cx="582" cy="427" r="4" fill="#e000c0"/><circle cx="468" cy="427" r="4" fill="#e000c0"/><circle cx="238" cy="542" r="4" fill="#e000c0"/><circle cx="353" cy="542" r="4" fill="#e000c0"/><circle cx="582" cy="542" r="4" fill="#e000c0"/><circle cx="697" cy="542" r="4" fill="#e000c0"/><circle cx="334.7" cy="218.1" r="9.5" fill="#ffee00"/><circle cx="277.4" cy="233.3" r="9.5" fill="#ffee00"/><circle cx="316.4" cy="236.3" r="9.5" fill="#ffee00"/><circle cx="274.5" cy="272.5" r="9.5" fill="#ffee00"/><circle cx="313.6" cy="275.4" r="9.5" fill="#ffee00"/><circle cx="256.3" cy="290.7" r="9.5" fill="#ffee00"/><circle cx="331.9" cy="293.5" r="9.5" fill="#ffee00"/><circle cx="259.2" cy="329.9" r="9.5" fill="#ffee00"/><circle cx="334.7" cy="332.8" r="9.5" fill="#ffee00"/><circle cx="277.4" cy="348.0" r="9.5" fill="#ffee00"/><circle cx="316.4" cy="351.0" r="9.5" fill="#ffee00"/><circle cx="274.5" cy="387.3" r="9.5" fill="#ffee00"/><circle cx="313.6" cy="390.1" r="9.5" fill="#ffee00"/><circle cx="256.3" cy="405.5" r="9.5" fill="#ffee00"/><circle cx="331.9" cy="408.3" r="9.5" fill="#ffee00"/><circle cx="259.2" cy="444.7" r="9.5" fill="#ffee00"/><circle cx="334.7" cy="447.6" r="9.5" fill="#ffee00"/><circle cx="277.4" cy="462.8" r="9.5" fill="#ffee00"/><circle cx="316.4" cy="465.8" r="9.5" fill="#ffee00"/><circle cx="274.5" cy="502.0" r="9.5" fill="#ffee00"/><circle cx="313.6" cy="504.9" r="9.5" fill="#ffee00"/><circle cx="256.3" cy="520.2" r="9.5" fill="#ffee00"/><circle cx="331.9" cy="523.0" r="9.5" fill="#ffee00"/><circle cx="259.2" cy="559.4" r="9.5" fill="#ffee00"/><circle cx="334.7" cy="562.3" r="9.5" fill="#ffee00"/><circle cx="277.4" cy="577.5" r="9.5" fill="#ffee00"/><circle cx="316.4" cy="580.5" r="9.5" fill="#ffee00"/><circle cx="274.5" cy="616.8" r="9.5" fill="#ffee00"/><circle cx="313.6" cy="619.6" r="9.5" fill="#ffee00"/><circle cx="331.9" cy="637.8" r="9.5" fill="#ffee00"/><circle cx="374.0" cy="215.2" r="9.5" fill="#ffee00"/><circle cx="449.4" cy="218.1" r="9.5" fill="#ffee00"/><circle cx="392.1" cy="233.3" r="9.5" fill="#ffee00"/><circle cx="431.1" cy="236.3" r="9.5" fill="#ffee00"/><circle cx="389.2" cy="272.5" r="9.5" fill="#ffee00"/><circle cx="428.3" cy="275.4" r="9.5" fill="#ffee00"/><circle cx="371.1" cy="290.7" r="9.5" fill="#ffee00"/><circle cx="446.6" cy="293.5" r="9.5" fill="#ffee00"/><circle cx="374.0" cy="329.9" r="9.5" fill="#ffee00"/><circle cx="449.4" cy="332.8" r="9.5" fill="#ffee00"/><circle cx="392.1" cy="348.0" r="9.5" fill="#ffee00"/><circle cx="431.1" cy="351.0" r="9.5" fill="#ffee00"/><circle cx="389.2" cy="387.3" r="9.5" fill="#ffee00"/><circle cx="428.3" cy="390.1" r="9.5" fill="#ffee00"/><circle cx="371.1" cy="405.5" r="9.5" fill="#ffee00"/><circle cx="446.6" cy="408.3" r="9.5" fill="#ffee00"/><circle cx="374.0" cy="444.7" r="9.5" fill="#ffee00"/><circle cx="449.4" cy="447.6" r="9.5" fill="#ffee00"/><circle cx="392.1" cy="462.8" r="9.5" fill="#ffee00"/><circle cx="431.1" cy="465.8" r="9.5" fill="#ffee00"/><circle cx="389.2" cy="502.0" r="9.5" fill="#ffee00"/><circle cx="428.3" cy="504.9" r="9.5" fill="#ffee00"/><circle cx="371.1" cy="520.2" r="9.5" fill="#ffee00"/><circle cx="446.6" cy="523.0" r="9.5" fill="#ffee00"/><circle cx="374.0" cy="559.4" r="9.5" fill="#ffee00"/><circle cx="449.4" cy="562.3" r="9.5" fill="#ffee00"/><circle cx="392.1" cy="577.5" r="9.5" fill="#ffee00"/><circle cx="431.1" cy="580.5" r="9.5" fill="#ffee00"/><circle cx="389.2" cy="616.8" r="9.5" fill="#ffee00"/><circle cx="428.3" cy="619.6" r="9.5" fill="#ffee00"/><circle cx="371.1" cy="635.0" r="9.5" fill="#ffee00"/><circle cx="446.6" cy="637.8" r="9.5" fill="#ffee00"/><circle cx="488.7" cy="215.2" r="9.5" fill="#ffee00"/><circle cx="564.2" cy="218.1" r="9.5" fill="#ffee00"/><circle cx="506.9" cy="233.3" r="9.5" fill="#ffee00"/><circle cx="545.9" cy="236.3" r="9.5" fill="#ffee00"/><circle cx="504.0" cy="272.5" r="9.5" fill="#ffee00"/><circle cx="543.1" cy="275.4" r="9.5" fill="#ffee00"/><circle cx="485.8" cy="290.7" r="9.5" fill="#ffee00"/><circle cx="561.4" cy="293.5" r="9.5" fill="#ffee00"/><circle cx="488.7" cy="329.9" r="9.5" fill="#ffee00"/><circle cx="564.2" cy="332.8" r="9.5" fill="#ffee00"/><circle cx="506.9" cy="348.0" r="9.5" fill="#ffee00"/><circle cx="545.9" cy="351.0" r="9.5" fill="#ffee00"/><circle cx="504.0" cy="387.3" r="9.5" fill="#ffee00"/><circle cx="543.1" cy="390.1" r="9.5" fill="#ffee00"/><circle cx="485.8" cy="405.5" r="9.5" fill="#ffee00"/><circle cx="561.4" cy="408.3" r="9.5" fill="#ffee00"/><circle cx="488.7" cy="444.7" r="9.5" fill="#ffee00"/><circle cx="564.2" cy="447.6" r="9.5" fill="#ffee00"/><circle cx="506.9" cy="462.8" r="9.5" fill="#ffee00"/><circle cx="545.9" cy="465.8" r="9.5" fill="#ffee00"/><circle cx="504.0" cy="502.0" r="9.5" fill="#ffee00"/><circle cx="543.1" cy="504.9" r="9.5" fill="#ffee00"/><circle cx="485.8" cy="520.2" r="9.5" fill="#ffee00"/><circle cx="561.4" cy="523.0" r="9.5" fill="#ffee00"/><circle cx="488.7" cy="559.4" r="9.5" fill="#ffee00"/><circle cx="564.2" cy="562.3" r="9.5" fill="#ffee00"/><circle cx="506.9" cy="577.5" r="9.5" fill="#ffee00"/><circle cx="545.9" cy="580.5" r="9.5" fill="#ffee00"/><circle cx="504.0" cy="616.8" r="9.5" fill="#ffee00"/><circle cx="543.1" cy="619.6" r="9.5" fill="#ffee00"/><circle cx="485.8" cy="635.0" r="9.5" fill="#ffee00"/><circle cx="561.4" cy="637.8" r="9.5" fill="#ffee00"/><circle cx="603.5" cy="215.2" r="9.5" fill="#ffee00"/><circle cx="621.6" cy="233.3" r="9.5" fill="#ffee00"/><circle cx="660.6" cy="236.3" r="9.5" fill="#ffee00"/><circle cx="618.7" cy="272.5" r="9.5" fill="#ffee00"/><circle cx="657.8" cy="275.4" r="9.5" fill="#ffee00"/><circle cx="600.6" cy="290.7" r="9.5" fill="#ffee00"/><circle cx="676.1" cy="293.5" r="9.5" fill="#ffee00"/><circle cx="603.5" cy="329.9" r="9.5" fill="#ffee00"/><circle cx="678.9" cy="332.8" r="9.5" fill="#ffee00"/><circle cx="621.6" cy="348.0" r="9.5" fill="#ffee00"/><circle cx="660.6" cy="351.0" r="9.5" fill="#ffee00"/><circle cx="618.7" cy="387.3" r="9.5" fill="#ffee00"/><circle cx="657.8" cy="390.1" r="9.5" fill="#ffee00"/><circle cx="600.6" cy="405.5" r="9.5" fill="#ffee00"/><circle cx="676.1" cy="408.3" r="9.5" fill="#ffee00"/><circle cx="603.5" cy="444.7" r="9.5" fill="#ffee00"/><circle cx="678.9" cy="447.6" r="9.5" fill="#ffee00"/><circle cx="621.6" cy="462.8" r="9.5" fill="#ffee00"/><circle cx="660.6" cy="465.8" r="9.5" fill="#ffee00"/><circle cx="618.7" cy="502.0" r="9.5" fill="#ffee00"/><circle cx="657.8" cy="504.9" r="9.5" fill="#ffee00"/><circle cx="600.6" cy="520.2" r="9.5" fill="#ffee00"/><circle cx="676.1" cy="523.0" r="9.5" fill="#ffee00"/><circle cx="603.5" cy="559.4" r="9.5" fill="#ffee00"/><circle cx="678.9" cy="562.3" r="9.5" fill="#ffee00"/><circle cx="621.6" cy="577.5" r="9.5" fill="#ffee00"/><circle cx="660.6" cy="580.5" r="9.5" fill="#ffee00"/><circle cx="618.7" cy="616.8" r="9.5" fill="#ffee00"/><circle cx="657.8" cy="619.6" r="9.5" fill="#ffee00"/><circle cx="600.6" cy="635.0" r="9.5" fill="#ffee00"/><path d="M108 120V170H150" stroke="#d0d0e0" stroke-width="2.5" fill="none"/><polygon points="104,132 112,132 108,118" fill="#e8e8f0"/><polygon points="136,166 136,174 152,170" fill="#e8e8f0"/><rect x="838" y="670" width="52" height="72" fill="#d0d0e0"/><circle cx="850.6666666666666" cy="683.2" r="9.533333333333333" fill="#ff00ff"/><rect x="862.8" y="681.4666666666667" width="10.4" height="2.6" fill="#bbb" opacity="0.7"/><circle cx="850.6666666666666" cy="709.2" r="9.533333333333333" fill="#ffff00"/><rect x="862.8" y="707.4666666666667" width="10.4" height="2.6" fill="#bbb" opacity="0.7"/><circle cx="850.6666666666666" cy="735.2" r="9.533333333333333" fill="#00e000"/><rect x="862.8" y="733.4666666666667" width="10.4" height="2.6" fill="#bbb" opacity="0.7"/></g></svg>
<span class="t " style="left:35.90px;top:590px;font-size:12px;line-height:16px;color:#000;letter-spacing:0.103px;">Network with broken-off bo...</span>
<div class="b" style="left:35px;top:618px;width:160px;height:140px;border:1px solid #a6a6a6;background:linear-gradient(#f3f3f3,#ececec 30%,#d2d2d2);box-shadow:inset 0 0 0 1px #fff"></div>
<div class="b" style="left:42px;top:637.0px;width:146px;height:101.79999999999995px;background:#b8b8b8;"></div>
<svg class="b" style="left:42.5px;top:637.5px" width="145" height="100.79999999999995" viewBox="0 0 145 100.79999999999995"><defs><radialGradient id="gy" cx="0.42" cy="0.38" r="0.6"><stop offset="0" stop-color="#ffff9a"/><stop offset="0.25" stop-color="#ffff00"/><stop offset="1" stop-color="#d8d800"/></radialGradient><radialGradient id="gw" cx="0.42" cy="0.38" r="0.6"><stop offset="0" stop-color="#fff"/><stop offset="0.5" stop-color="#e8e8e8"/><stop offset="1" stop-color="#9a9a9a"/></radialGradient></defs><rect width="145" height="100.79999999999995" fill="#000"/><g transform="scale(0.12549) translate(-60,-100)"><rect x="458" y="270" width="402" height="410" fill="none" stroke="#8a8a8a" stroke-width="5"/><path d="M623 297L575 413M623 297L693 440M623 297L538 328M650 273L785 355M575 413L432 490M575 413L655 475M693 440L655 475M693 440L808 513M693 440L835 492M405 513L548 565M432 490L512 608M603 517L548 565M630 497L703 562M808 513L703 562M808 513L740 645M548 565L627 700M512 608L653 678M703 562L627 700M740 645L653 678M405 513L483 370M432 490L548 565M835 492L785 355M655 475L703 562M808 513L795 603M400 315L335 243M400 315L452 245M400 315L330 393M400 315L483 370M458 283L390 200M458 283L508 205M458 283L538 328M458 283L380 350M802 317L737 243M802 317L855 245M802 317L728 395M802 317L885 372M862 285L790 200M862 285L910 205M862 285L940 330M862 285L785 355M402 717L335 645M402 717L455 648M402 717L330 797M402 717L485 772M458 683L392 603M458 683L512 608M458 683L540 730M458 683L385 755M805 718L740 645M805 718L858 650M805 718L733 800M805 718L888 775M860 688L795 603M860 688L912 608M860 688L943 733M860 688L790 757" stroke="#c8820a" stroke-width="5.5" fill="none"/><path d="M623 297L693 440M432 490L575 413" stroke="#e8d0a0" stroke-width="3" fill="none"/><rect x="400" y="315" width="405" height="405" fill="none" stroke="#c0c0c0" stroke-width="5"/><circle cx="458" cy="283" r="9" fill="#e000c0"/><circle cx="862" cy="285" r="9" fill="#e000c0"/><circle cx="458" cy="683" r="9" fill="#e000c0"/><circle cx="860" cy="688" r="9" fill="#e000c0"/><circle cx="430" cy="292" r="17" fill="url(#gw)"/><circle cx="650" cy="273" r="17" fill="url(#gw)"/><circle cx="623" cy="297" r="17" fill="url(#gw)"/><circle cx="830" cy="295" r="17" fill="url(#gw)"/><circle cx="405" cy="513" r="17" fill="url(#gw)"/><circle cx="432" cy="490" r="17" fill="url(#gw)"/><circle cx="603" cy="517" r="17" fill="url(#gw)"/><circle cx="655" cy="475" r="17" fill="url(#gw)"/><circle cx="808" cy="513" r="17" fill="url(#gw)"/><circle cx="835" cy="492" r="17" fill="url(#gw)"/><circle cx="430" cy="697" r="17" fill="url(#gw)"/><circle cx="627" cy="700" r="17" fill="url(#gw)"/><circle cx="653" cy="678" r="17" fill="url(#gw)"/><circle cx="833" cy="697" r="17" fill="url(#gw)"/><circle cx="400" cy="315" r="13" fill="#ff00ff"/><circle cx="802" cy="317" r="13" fill="#ff00ff"/><circle cx="630" cy="497" r="13" fill="#ff00ff"/><circle cx="402" cy="717" r="13" fill="#ff00ff"/><circle cx="805" cy="718" r="13" fill="#ff00ff"/><circle cx="390" cy="200" r="31" fill="url(#gy)"/><circle cx="508" cy="205" r="31" fill="url(#gy)"/><circle cx="335" cy="243" r="31" fill="url(#gy)"/><circle cx="452" cy="245" r="31" fill="url(#gy)"/><circle cx="790" cy="200" r="31" fill="url(#gy)"/><circle cx="910" cy="205" r="31" fill="url(#gy)"/><circle cx="737" cy="243" r="31" fill="url(#gy)"/><circle cx="855" cy="245" r="31" fill="url(#gy)"/><circle cx="538" cy="328" r="31" fill="url(#gy)"/><circle cx="940" cy="330" r="31" fill="url(#gy)"/><circle cx="330" cy="393" r="31" fill="url(#gy)"/><circle cx="380" cy="350" r="31" fill="url(#gy)"/><circle cx="483" cy="370" r="31" fill="url(#gy)"/><circle cx="575" cy="413" r="31" fill="url(#gy)"/><circle cx="693" cy="440" r="31" fill="url(#gy)"/><circle cx="728" cy="395" r="31" fill="url(#gy)"/><circle cx="785" cy="355" r="31" fill="url(#gy)"/><circle cx="885" cy="372" r="31" fill="url(#gy)"/><circle cx="548" cy="565" r="31" fill="url(#gy)"/><circle cx="703" cy="562" r="31" fill="url(#gy)"/><circle cx="392" cy="603" r="31" fill="url(#gy)"/><circle cx="512" cy="608" r="31" fill="url(#gy)"/><circle cx="335" cy="645" r="31" fill="url(#gy)"/><circle cx="455" cy="648" r="31" fill="url(#gy)"/><circle cx="795" cy="603" r="31" fill="url(#gy)"/><circle cx="912" cy="608" r="31" fill="url(#gy)"/><circle cx="740" cy="645" r="31" fill="url(#gy)"/><circle cx="858" cy="650" r="31" fill="url(#gy)"/><circle cx="540" cy="730" r="31" fill="url(#gy)"/><circle cx="943" cy="733" r="31" fill="url(#gy)"/><circle cx="385" cy="755" r="31" fill="url(#gy)"/><circle cx="485" cy="772" r="31" fill="url(#gy)"/><circle cx="330" cy="797" r="31" fill="url(#gy)"/><circle cx="790" cy="757" r="31" fill="url(#gy)"/><circle cx="888" cy="775" r="31" fill="url(#gy)"/><circle cx="733" cy="800" r="31" fill="url(#gy)"/><path d="M160 125.0V218.33333333333334M149.33333333333334 205H240.0" stroke="#ddd" stroke-width="2.6666666666666665" stroke-dasharray="8.0 4.0" fill="none"/><polygon points="208.0,199.66666666666666 208.0,210.33333333333334 229.33333333333331,205" fill="#fff"/><circle cx="1153.3333333333333" cy="800.0" r="14.666666666666666" fill="#ff00ff"/><rect x="1172.0" y="797.3333333333334" width="16.0" height="4.0" fill="#bbb" opacity="0.7"/><circle cx="1153.3333333333333" cy="840.0" r="14.666666666666666" fill="#ffff00"/><rect x="1172.0" y="837.3333333333334" width="16.0" height="4.0" fill="#bbb" opacity="0.7"/><circle cx="1153.3333333333333" cy="880.0" r="14.666666666666666" fill="url(#gw)"/><rect x="1172.0" y="877.3333333333334" width="16.0" height="4.0" fill="#bbb" opacity="0.7"/></g></svg>
<span class="t " style="left:92.50px;top:760px;font-size:12px;line-height:16px;color:#000;letter-spacing:-0.295px;">Picture 5</span>
<div class="b" style="left:35px;top:788px;width:160px;height:140px;border:1px solid #a6a6a6;background:linear-gradient(#f3f3f3,#ececec 30%,#d2d2d2);box-shadow:inset 0 0 0 1px #fff"></div>
<div class="b" style="left:42px;top:807.0px;width:146px;height:101.79999999999995px;background:#b8b8b8;"></div>
<svg class="b" style="left:42.5px;top:807.5px" width="145" height="100.79999999999995" viewBox="0 0 145 100.79999999999995"><defs><radialGradient id="gy" cx="0.42" cy="0.38" r="0.6"><stop offset="0" stop-color="#ffff9a"/><stop offset="0.25" stop-color="#ffff00"/><stop offset="1" stop-color="#d8d800"/></radialGradient><radialGradient id="gw" cx="0.42" cy="0.38" r="0.6"><stop offset="0" stop-color="#fff"/><stop offset="0.5" stop-color="#e8e8e8"/><stop offset="1" stop-color="#9a9a9a"/></radialGradient></defs><rect width="145" height="100.79999999999995" fill="#000"/><g transform="scale(0.12549) translate(-60,-100)"><rect x="458" y="270" width="402" height="410" fill="none" stroke="#8a8a8a" stroke-width="5"/><path d="M623 297L575 413M623 297L693 440M623 297L538 328M650 273L785 355M575 413L432 490M575 413L655 475M693 440L655 475M693 440L808 513M693 440L835 492M405 513L548 565M432 490L512 608M603 517L548 565M630 497L703 562M808 513L703 562M808 513L740 645M548 565L627 700M512 608L653 678M703 562L627 700M740 645L653 678M405 513L483 370M432 490L548 565M835 492L785 355M655 475L703 562M808 513L795 603M458 283L390 200M458 283L508 205M458 283L538 328M862 285L790 200M862 285L910 205M862 285L940 330M458 683L392 603M458 683L512 608M458 683L540 730M860 688L795 603M860 688L912 608M860 688L943 733" stroke="#c8820a" stroke-width="5.5" fill="none"/><path d="M623 297L693 440M432 490L575 413" stroke="#e8d0a0" stroke-width="3" fill="none"/><polygon points="330,243 455,245 483,370 330,395" fill="#b878a8" opacity="0.93"/><polygon points="330,243 455,245 330,395" fill="#c488b4" opacity="0.9"/><path d="M330 243L483 370M455 245L330 395" stroke="#d8a040" stroke-width="3" opacity="0.8"/><polygon points="330,243 455,245 483,370 330,395" fill="none" stroke="#d8a040" stroke-width="3"/><circle cx="394.5" cy="346.5" r="24" fill="#c89070" opacity="0.8"/><circle cx="330" cy="243" r="8" fill="#ffff00"/><circle cx="455" cy="245" r="8" fill="#ffff00"/><circle cx="483" cy="370" r="8" fill="#ffff00"/><circle cx="330" cy="395" r="8" fill="#ffff00"/><polygon points="737,243 855,245 885,372 730,398" fill="#b878a8" opacity="0.93"/><polygon points="737,243 855,245 730,398" fill="#c488b4" opacity="0.9"/><path d="M737 243L885 372M855 245L730 398" stroke="#d8a040" stroke-width="3" opacity="0.8"/><polygon points="737,243 855,245 885,372 730,398" fill="none" stroke="#d8a040" stroke-width="3"/><circle cx="799.0" cy="347.5" r="24" fill="#c89070" opacity="0.8"/><circle cx="737" cy="243" r="8" fill="#ffff00"/><circle cx="855" cy="245" r="8" fill="#ffff00"/><circle cx="885" cy="372" r="8" fill="#ffff00"/><circle cx="730" cy="398" r="8" fill="#ffff00"/><polygon points="335,648 457,650 487,775 330,797" fill="#b878a8" opacity="0.93"/><polygon points="335,648 457,650 330,797" fill="#c488b4" opacity="0.9"/><path d="M335 648L487 775M457 650L330 797" stroke="#d8a040" stroke-width="3" opacity="0.8"/><polygon points="335,648 457,650 487,775 330,797" fill="none" stroke="#d8a040" stroke-width="3"/><circle cx="399.0" cy="751.5" r="24" fill="#c89070" opacity="0.8"/><circle cx="335" cy="648" r="8" fill="#ffff00"/><circle cx="457" cy="650" r="8" fill="#ffff00"/><circle cx="487" cy="775" r="8" fill="#ffff00"/><circle cx="330" cy="797" r="8" fill="#ffff00"/><polygon points="740,648 858,650 890,775 733,800" fill="#b878a8" opacity="0.93"/><polygon points="740,648 858,650 733,800" fill="#c488b4" opacity="0.9"/><path d="M740 648L890 775M858 650L733 800" stroke="#d8a040" stroke-width="3" opacity="0.8"/><polygon points="740,648 858,650 890,775 733,800" fill="none" stroke="#d8a040" stroke-width="3"/><circle cx="803.0" cy="751.5" r="24" fill="#c89070" opacity="0.8"/><circle cx="740" cy="648" r="8" fill="#ffff00"/><circle cx="858" cy="650" r="8" fill="#ffff00"/><circle cx="890" cy="775" r="8" fill="#ffff00"/><circle cx="733" cy="800" r="8" fill="#ffff00"/><rect x="400" y="315" width="405" height="405" fill="none" stroke="#c0c0c0" stroke-width="5"/><circle cx="458" cy="283" r="9" fill="#e000c0"/><circle cx="862" cy="285" r="9" fill="#e000c0"/><circle cx="458" cy="683" r="9" fill="#e000c0"/><circle cx="860" cy="688" r="9" fill="#e000c0"/><circle cx="650" cy="273" r="17" fill="url(#gw)"/><circle cx="623" cy="297" r="17" fill="url(#gw)"/><circle cx="405" cy="513" r="17" fill="url(#gw)"/><circle cx="432" cy="490" r="17" fill="url(#gw)"/><circle cx="603" cy="517" r="17" fill="url(#gw)"/><circle cx="655" cy="475" r="17" fill="url(#gw)"/><circle cx="808" cy="513" r="17" fill="url(#gw)"/><circle cx="835" cy="492" r="17" fill="url(#gw)"/><circle cx="627" cy="700" r="17" fill="url(#gw)"/><circle cx="653" cy="678" r="17" fill="url(#gw)"/><circle cx="400" cy="315" r="11" fill="#ff20e0"/><circle cx="802" cy="317" r="11" fill="#ff20e0"/><circle cx="630" cy="497" r="11" fill="#ff20e0"/><circle cx="402" cy="717" r="11" fill="#ff20e0"/><circle cx="805" cy="718" r="11" fill="#ff20e0"/><circle cx="390" cy="200" r="31" fill="url(#gy)"/><circle cx="508" cy="205" r="31" fill="url(#gy)"/><circle cx="790" cy="200" r="31" fill="url(#gy)"/><circle cx="910" cy="205" r="31" fill="url(#gy)"/><circle cx="538" cy="328" r="31" fill="url(#gy)"/><circle cx="940" cy="330" r="31" fill="url(#gy)"/><circle cx="575" cy="413" r="31" fill="url(#gy)"/><circle cx="693" cy="440" r="31" fill="url(#gy)"/><circle cx="548" cy="565" r="31" fill="url(#gy)"/><circle cx="703" cy="562" r="31" fill="url(#gy)"/><circle cx="392" cy="603" r="31" fill="url(#gy)"/><circle cx="512" cy="608" r="31" fill="url(#gy)"/><circle cx="795" cy="603" r="31" fill="url(#gy)"/><circle cx="912" cy="608" r="31" fill="url(#gy)"/><circle cx="540" cy="730" r="31" fill="url(#gy)"/><circle cx="943" cy="733" r="31" fill="url(#gy)"/><path d="M160 125.0V218.33333333333334M149.33333333333334 205H240.0" stroke="#ddd" stroke-width="2.6666666666666665" stroke-dasharray="8.0 4.0" fill="none"/><polygon points="208.0,199.66666666666666 208.0,210.33333333333334 229.33333333333331,205" fill="#fff"/><circle cx="1153.3333333333333" cy="800.0" r="14.666666666666666" fill="#ff00ff"/><rect x="1172.0" y="797.3333333333334" width="16.0" height="4.0" fill="#bbb" opacity="0.7"/><circle cx="1153.3333333333333" cy="840.0" r="14.666666666666666" fill="#ffff00"/><rect x="1172.0" y="837.3333333333334" width="16.0" height="4.0" fill="#bbb" opacity="0.7"/><circle cx="1153.3333333333333" cy="880.0" r="14.666666666666666" fill="url(#gw)"/><rect x="1172.0" y="877.3333333333334" width="16.0" height="4.0" fill="#bbb" opacity="0.7"/></g></svg>
<span class="t " style="left:92.50px;top:930px;font-size:12px;line-height:16px;color:#000;letter-spacing:-0.295px;">Picture 6</span>
<div class="b" style="left:252px;top:139px;width:643px;height:808px;background:#666699;border-top:1px solid #8c8c98;border-left:1px solid #8c8c98"></div>
<svg class="b" style="left:253px;top:140px" width="642" height="807" viewBox="253 140 642 807"><defs>
<radialGradient id="sy" cx="0.5" cy="0.47" r="0.535" fx="0.5" fy="0.38"><stop offset="0" stop-color="#ffffd8"/><stop offset="0.07" stop-color="#ffff80"/><stop offset="0.2" stop-color="#ffff00"/><stop offset="0.72" stop-color="#fbfb00"/><stop offset="0.88" stop-color="#dede00"/><stop offset="1" stop-color="#a4a410"/></radialGradient>
<radialGradient id="sg" cx="0.5" cy="0.47" r="0.535" fx="0.5" fy="0.38"><stop offset="0" stop-color="#d0ffd0"/><stop offset="0.1" stop-color="#60ff60"/><stop offset="0.25" stop-color="#00ff00"/><stop offset="0.7" stop-color="#00f400"/><stop offset="0.88" stop-color="#00d000"/><stop offset="1" stop-color="#009000"/></radialGradient>
<radialGradient id="sm" cx="0.5" cy="0.47" r="0.535" fx="0.5" fy="0.38"><stop offset="0" stop-color="#ffd8ff"/><stop offset="0.1" stop-color="#ff70ff"/><stop offset="0.25" stop-color="#ff00ff"/><stop offset="0.7" stop-color="#f400f4"/><stop offset="0.88" stop-color="#d000d0"/><stop offset="1" stop-color="#8c008c"/></radialGradient>
<radialGradient id="sgy" cx="0.5" cy="0.47" r="0.535" fx="0.5" fy="0.38"><stop offset="0" stop-color="#d8ffb0"/><stop offset="0.25" stop-color="#7ee818"/><stop offset="0.8" stop-color="#78dc18"/><stop offset="1" stop-color="#5cae20"/></radialGradient>
</defs><circle cx="367.1" cy="331.4" r="19.2" fill="url(#sy)"/><circle cx="532.8" cy="337.8" r="19.2" fill="url(#sy)"/><circle cx="407.0" cy="371.2" r="19.2" fill="url(#sy)"/><circle cx="492.6" cy="377.7" r="19.2" fill="url(#sy)"/><circle cx="400.6" cy="457.4" r="19.2" fill="url(#sy)"/><circle cx="486.5" cy="463.6" r="19.2" fill="url(#sy)"/><circle cx="360.7" cy="497.3" r="19.2" fill="url(#sy)"/><circle cx="526.7" cy="503.5" r="19.2" fill="url(#sy)"/><circle cx="367.1" cy="583.4" r="19.2" fill="url(#sy)"/><circle cx="532.8" cy="589.8" r="19.2" fill="url(#sy)"/><circle cx="407.0" cy="623.2" r="19.2" fill="url(#sy)"/><circle cx="492.6" cy="629.7" r="19.2" fill="url(#sy)"/><circle cx="400.6" cy="709.4" r="19.2" fill="url(#sy)"/><circle cx="486.5" cy="715.6" r="19.2" fill="url(#sy)"/><circle cx="360.7" cy="749.3" r="19.2" fill="url(#sy)"/><circle cx="526.7" cy="755.5" r="19.2" fill="url(#sy)"/><circle cx="619.1" cy="331.4" r="19.2" fill="url(#sy)"/><circle cx="784.8" cy="337.8" r="19.2" fill="url(#sy)"/><circle cx="659.0" cy="371.2" r="19.2" fill="url(#sy)"/><circle cx="744.6" cy="377.7" r="19.2" fill="url(#sy)"/><circle cx="652.6" cy="457.4" r="19.2" fill="url(#sy)"/><circle cx="738.5" cy="463.6" r="19.2" fill="url(#sy)"/><circle cx="612.7" cy="497.3" r="19.2" fill="url(#sy)"/><circle cx="778.7" cy="503.5" r="19.2" fill="url(#sy)"/><circle cx="619.1" cy="583.4" r="19.2" fill="url(#sy)"/><circle cx="784.8" cy="589.8" r="19.2" fill="url(#sy)"/><circle cx="659.0" cy="623.2" r="19.2" fill="url(#sy)"/><circle cx="744.6" cy="629.7" r="19.2" fill="url(#sy)"/><circle cx="652.6" cy="709.4" r="19.2" fill="url(#sy)"/><circle cx="738.5" cy="715.6" r="19.2" fill="url(#sy)"/><circle cx="612.7" cy="749.3" r="19.2" fill="url(#sy)"/><circle cx="778.7" cy="755.5" r="19.2" fill="url(#sy)"/><path d="M320.5 291.5L355.6 321.5M446.5 291.5L384.3 322.7M446.5 291.5L414.0 357.1M446.5 291.5L483.5 360.7M446.5 291.5L515.8 328.7M320.5 417.5L357.9 348.4M320.5 417.5L390.0 380.3M446.5 417.5L417.3 383.2M572.5 417.5L506.5 384.6M572.5 417.5L539.6 351.5M320.5 417.5L398.8 456.5M320.5 417.5L353.9 483.7M446.5 417.5L402.1 456.1M446.5 417.5L485.2 462.1M572.5 417.5L488.3 462.7M572.5 417.5L527.6 501.7M446.5 543.5L409.7 474.4M446.5 543.5L479.6 477.5M446.5 543.5L377.7 506.5M446.5 543.5L509.4 512.1M572.5 543.5L528.2 504.8M320.5 543.5L365.6 582.1M446.5 543.5L384.3 574.7M446.5 543.5L414.0 609.1M446.5 543.5L483.5 612.7M446.5 543.5L515.8 580.7M320.5 669.5L366.1 585.2M320.5 669.5L405.2 624.1M446.5 669.5L408.3 624.7M446.5 669.5L491.1 631.0M572.5 669.5L494.4 630.6M572.5 669.5L539.6 603.5M320.5 669.5L387.2 702.7M320.5 669.5L353.9 735.7M446.5 669.5L476.4 704.0M572.5 669.5L503.5 706.5M572.5 669.5L535.8 738.5M446.5 795.5L409.7 726.4M446.5 795.5L479.6 729.5M446.5 795.5L377.7 758.5M446.5 795.5L509.4 764.1M572.5 795.5L538.7 766.0M572.5 291.5L607.6 321.5M698.5 291.5L636.3 322.7M698.5 291.5L666.0 357.1M698.5 291.5L735.5 360.7M698.5 291.5L767.8 328.7M572.5 417.5L609.9 348.4M572.5 417.5L642.0 380.3M698.5 417.5L669.3 383.2M824.5 417.5L758.5 384.6M824.5 417.5L791.6 351.5M572.5 417.5L639.2 450.7M572.5 417.5L605.9 483.7M698.5 417.5L728.4 452.0M824.5 417.5L755.5 454.5M824.5 417.5L787.8 486.5M698.5 543.5L661.7 474.4M698.5 543.5L731.6 477.5M698.5 543.5L629.7 506.5M698.5 543.5L761.4 512.1M824.5 543.5L790.7 514.0M572.5 543.5L607.6 573.5M698.5 543.5L636.3 574.7M698.5 543.5L666.0 609.1M698.5 543.5L735.5 612.7M698.5 543.5L767.8 580.7M572.5 669.5L609.9 600.4M572.5 669.5L642.0 632.3M698.5 669.5L669.3 635.2M824.5 669.5L758.5 636.6M824.5 669.5L791.6 603.5M572.5 669.5L639.2 702.7M572.5 669.5L605.9 735.7M698.5 669.5L728.4 704.0M824.5 669.5L755.5 706.5M824.5 669.5L787.8 738.5M698.5 795.5L661.7 726.4M698.5 795.5L731.6 729.5M698.5 795.5L629.7 758.5M698.5 795.5L761.4 764.1M824.5 795.5L790.7 766.0" stroke="#d98a00" stroke-width="3.2" fill="none"/><path d="M320.5 291.5L355.6 321.5M446.5 291.5L384.3 322.7M446.5 291.5L414.0 357.1M446.5 291.5L483.5 360.7M446.5 291.5L515.8 328.7M320.5 417.5L357.9 348.4M320.5 417.5L390.0 380.3M446.5 417.5L417.3 383.2M572.5 417.5L506.5 384.6M572.5 417.5L539.6 351.5M320.5 417.5L398.8 456.5M320.5 417.5L353.9 483.7M446.5 417.5L402.1 456.1M446.5 417.5L485.2 462.1M572.5 417.5L488.3 462.7M572.5 417.5L527.6 501.7M446.5 543.5L409.7 474.4M446.5 543.5L479.6 477.5M446.5 543.5L377.7 506.5M446.5 543.5L509.4 512.1M572.5 543.5L528.2 504.8M320.5 543.5L365.6 582.1M446.5 543.5L384.3 574.7M446.5 543.5L414.0 609.1M446.5 543.5L483.5 612.7M446.5 543.5L515.8 580.7M320.5 669.5L366.1 585.2M320.5 669.5L405.2 624.1M446.5 669.5L408.3 624.7M446.5 669.5L491.1 631.0M572.5 669.5L494.4 630.6M572.5 669.5L539.6 603.5M320.5 669.5L387.2 702.7M320.5 669.5L353.9 735.7M446.5 669.5L476.4 704.0M572.5 669.5L503.5 706.5M572.5 669.5L535.8 738.5M446.5 795.5L409.7 726.4M446.5 795.5L479.6 729.5M446.5 795.5L377.7 758.5M446.5 795.5L509.4 764.1M572.5 795.5L538.7 766.0M572.5 291.5L607.6 321.5M698.5 291.5L636.3 322.7M698.5 291.5L666.0 357.1M698.5 291.5L735.5 360.7M698.5 291.5L767.8 328.7M572.5 417.5L609.9 348.4M572.5 417.5L642.0 380.3M698.5 417.5L669.3 383.2M824.5 417.5L758.5 384.6M824.5 417.5L791.6 351.5M572.5 417.5L639.2 450.7M572.5 417.5L605.9 483.7M698.5 417.5L728.4 452.0M824.5 417.5L755.5 454.5M824.5 417.5L787.8 486.5M698.5 543.5L661.7 474.4M698.5 543.5L731.6 477.5M698.5 543.5L629.7 506.5M698.5 543.5L761.4 512.1M824.5 543.5L790.7 514.0M572.5 543.5L607.6 573.5M698.5 543.5L636.3 574.7M698.5 543.5L666.0 609.1M698.5 543.5L735.5 612.7M698.5 543.5L767.8 580.7M572.5 669.5L609.9 600.4M572.5 669.5L642.0 632.3M698.5 669.5L669.3 635.2M824.5 669.5L758.5 636.6M824.5 669.5L791.6 603.5M572.5 669.5L639.2 702.7M572.5 669.5L605.9 735.7M698.5 669.5L728.4 704.0M824.5 669.5L755.5 706.5M824.5 669.5L787.8 738.5M698.5 795.5L661.7 726.4M698.5 795.5L731.6 729.5M698.5 795.5L629.7 758.5M698.5 795.5L761.4 764.1M824.5 795.5L790.7 766.0" stroke="#ffb020" stroke-width="1.5" fill="none"/><path d="M572.5 291.5L539.8 329.6M446.5 417.5L484.3 384.8M320.5 543.5L353.7 505.3M572.5 543.5L539.8 581.6M446.5 669.5L409.1 702.0M320.5 795.5L353.7 757.3M824.5 291.5L791.8 329.6M698.5 417.5L736.3 384.8M698.5 417.5L661.1 450.0M572.5 543.5L605.7 505.3M824.5 543.5L791.8 581.6M698.5 669.5L736.3 636.8M698.5 669.5L661.1 702.0M572.5 795.5L605.7 757.3" stroke="#c47a00" stroke-width="3.2" fill="none"/><path d="M572.5 291.5L539.8 329.6M446.5 417.5L484.3 384.8M320.5 543.5L353.7 505.3M572.5 543.5L539.8 581.6M446.5 669.5L409.1 702.0M320.5 795.5L353.7 757.3M824.5 291.5L791.8 329.6M698.5 417.5L736.3 384.8M698.5 417.5L661.1 450.0M572.5 543.5L605.7 505.3M824.5 543.5L791.8 581.6M698.5 669.5L736.3 636.8M698.5 669.5L661.1 702.0M572.5 795.5L605.7 757.3" stroke="#e89a08" stroke-width="1.3" fill="none"/><circle cx="320.5" cy="291.5" r="10.6" fill="url(#sg)"/><circle cx="320.5" cy="417.5" r="10.6" fill="url(#sg)"/><circle cx="320.5" cy="543.5" r="10.6" fill="url(#sg)"/><circle cx="320.5" cy="669.5" r="10.6" fill="url(#sg)"/><circle cx="320.5" cy="795.5" r="10.6" fill="url(#sg)"/><circle cx="446.5" cy="291.5" r="10.6" fill="url(#sg)"/><circle cx="446.5" cy="417.5" r="10.6" fill="url(#sg)"/><circle cx="446.5" cy="543.5" r="10.6" fill="url(#sg)"/><circle cx="446.5" cy="669.5" r="10.6" fill="url(#sg)"/><circle cx="446.5" cy="795.5" r="10.6" fill="url(#sg)"/><circle cx="572.5" cy="291.5" r="10.6" fill="url(#sg)"/><circle cx="572.5" cy="417.5" r="10.6" fill="url(#sg)"/><circle cx="572.5" cy="543.5" r="10.6" fill="url(#sg)"/><circle cx="572.5" cy="669.5" r="10.6" fill="url(#sg)"/><circle cx="572.5" cy="795.5" r="10.6" fill="url(#sg)"/><circle cx="698.5" cy="291.5" r="10.6" fill="url(#sg)"/><circle cx="698.5" cy="417.5" r="10.6" fill="url(#sg)"/><circle cx="698.5" cy="543.5" r="10.6" fill="url(#sg)"/><circle cx="698.5" cy="669.5" r="10.6" fill="url(#sg)"/><circle cx="698.5" cy="795.5" r="10.6" fill="url(#sg)"/><circle cx="824.5" cy="291.5" r="10.6" fill="url(#sg)"/><circle cx="824.5" cy="417.5" r="10.6" fill="url(#sg)"/><circle cx="824.5" cy="543.5" r="10.6" fill="url(#sg)"/><circle cx="824.5" cy="669.5" r="10.6" fill="url(#sg)"/><circle cx="824.5" cy="795.5" r="10.6" fill="url(#sg)"/><path d="M320.5 291.5H824.5M320.5 543.5H824.5M320.5 795.5H824.5M320.5 291.5V795.5M572.5 291.5V795.5M824.5 291.5V795.5" stroke="#fff" stroke-width="1" fill="none" shape-rendering="crispEdges"/><circle cx="446.5" cy="291.5" r="10.6" fill="url(#sg)"/><circle cx="698.5" cy="291.5" r="10.6" fill="url(#sg)"/><circle cx="320.5" cy="417.5" r="10.6" fill="url(#sg)"/><circle cx="320.5" cy="669.5" r="10.6" fill="url(#sg)"/><circle cx="446.5" cy="795.5" r="10.6" fill="url(#sg)"/><circle cx="698.5" cy="795.5" r="10.6" fill="url(#sg)"/><circle cx="824.5" cy="417.5" r="10.6" fill="url(#sg)"/><circle cx="824.5" cy="669.5" r="10.6" fill="url(#sg)"/><circle cx="320.5" cy="291.5" r="10.6" fill="#00c000"/><circle cx="320.5" cy="291.8" r="8.6" fill="url(#sm)"/><circle cx="320.5" cy="543.5" r="10.6" fill="#00c000"/><circle cx="320.5" cy="543.8" r="8.6" fill="url(#sm)"/><circle cx="320.5" cy="795.5" r="10.6" fill="#00c000"/><circle cx="320.5" cy="795.8" r="8.6" fill="url(#sm)"/><circle cx="572.5" cy="291.5" r="10.6" fill="#00c000"/><circle cx="572.5" cy="291.8" r="8.6" fill="url(#sm)"/><circle cx="572.5" cy="543.5" r="10.6" fill="#00c000"/><circle cx="572.5" cy="543.8" r="8.6" fill="url(#sm)"/><circle cx="572.5" cy="795.5" r="10.6" fill="#00c000"/><circle cx="572.5" cy="795.8" r="8.6" fill="url(#sm)"/><circle cx="824.5" cy="291.5" r="10.6" fill="#00c000"/><circle cx="824.5" cy="291.8" r="8.6" fill="url(#sm)"/><circle cx="824.5" cy="543.5" r="10.6" fill="#00c000"/><circle cx="824.5" cy="543.8" r="8.6" fill="url(#sm)"/><circle cx="824.5" cy="795.5" r="10.6" fill="#00c000"/><circle cx="824.5" cy="795.8" r="8.6" fill="url(#sm)"/><polygon points="400.5,457.4 485.8,462.0 525.7,502.5 493.1,628.6 407.2,624.2 367.0,583.5" fill="#c8b828" fill-opacity="0.88"/><polygon points="400.5,457.4 485.8,462.0 525.7,502.5" fill="#c89a40" fill-opacity="0.55"/><polygon points="367.0,583.5 525.7,502.5 493.1,628.6" fill="#b4862a" fill-opacity="0.55"/><polygon points="367.0,583.5 493.1,628.6 407.2,624.2" fill="#4a2a28" fill-opacity="0.45"/><polygon points="485.8,462.0 525.7,502.5 489.5,545.0" fill="#b89090" fill-opacity="0.35"/><path d="M441.5 532.9L405.2 466.0M451.7 551.7L489.4 621.8M436.7 537.7L379.7 507.4M457.4 548.8L515.7 580.5M451.7 533.5L483.9 466.1M442.3 552.9L409.2 620.2" stroke="#e9b81c" stroke-width="2.4" fill="none"/><circle cx="447.1" cy="543.2" r="10.6" fill="url(#sgy)"/><path d="M366 543.5H527" stroke="#fff" stroke-width="1" shape-rendering="crispEdges"/><path d="M400.5 457.4L407.2 624.2M485.8 462.0L493.1 628.6M485.8 462.0L407.2 624.2" stroke="#7c7cb4" stroke-width="1" fill="none"/><path d="M400.5 457.4L485.8 462.0M400.5 457.4L525.7 502.5M485.8 462.0L525.7 502.5M400.5 457.4L367.0 583.5M367.0 583.5L525.7 502.5M525.7 502.5L493.1 628.6M367.0 583.5L493.1 628.6M367.0 583.5L407.2 624.2M407.2 624.2L493.1 628.6" stroke="#0808e0" stroke-width="1.7" fill="none"/><circle cx="400.5" cy="457.4" r="4.3" fill="url(#sy)"/><circle cx="485.8" cy="462.0" r="4.3" fill="url(#sy)"/><circle cx="525.7" cy="502.5" r="4.3" fill="url(#sy)"/><circle cx="493.1" cy="628.6" r="4.3" fill="url(#sy)"/><circle cx="407.2" cy="624.2" r="4.3" fill="url(#sy)"/><circle cx="367.0" cy="583.5" r="4.3" fill="url(#sy)"/><path d="M309.5 170V196.3H336" stroke="#a4a4a4" stroke-width="1" fill="none"/><polygon points="309.5,159 305.2,170.3 313.2,170.3" fill="#fff"/><polygon points="347.5,196.8 335,192.6 335,200" fill="#fff"/><text x="306.5" y="154" font-size="12" fill="#b4b4bc" font-family="Liberation Sans, sans-serif">b</text><text x="354.5" y="199" font-size="12" fill="#b4b4bc" font-family="Liberation Sans, sans-serif">a</text><rect x="844.4" y="878.4" width="49" height="68" fill="#666699" stroke="#dcdcd4" stroke-width="2"/><circle cx="854.1" cy="888.9" r="8.8" fill="url(#sm)"/><text x="863.6" y="892.8" font-size="11.6" fill="#fff" font-family="Liberation Sans, sans-serif">P+5</text><circle cx="854.1" cy="911.9" r="8.8" fill="url(#sy)"/><text x="863.6" y="915.8" font-size="11.6" fill="#fff" font-family="Liberation Sans, sans-serif">S-2</text><circle cx="854.1" cy="934.8" r="8.8" fill="url(#sg)"/><text x="863.6" y="938.7" font-size="11.6" fill="#fff" font-family="Liberation Sans, sans-serif">Na+1</text></svg>
<div class="b" style="left:900px;top:139px;width:536px;height:452px;background:#f0f0f0;border-left:1px solid #a0a0a0"></div>
<div class="b" style="left:900px;top:139px;width:535px;height:26px;background:#f0f0f0;border:1px solid #a0a0a0"></div>
<span class="t " style="left:908.10px;top:145px;font-size:12px;line-height:16px;color:#000;letter-spacing:-0.099px;">Table of reflection parameters</span>
<svg class="b" style="left:1071px;top:156px;" width="7" height="4" viewBox="0 0 7 4"><polygon points="0.5,0.5 6,0.5 3.2,3.5" fill="#b0b0b0"/></svg>
<svg class="b" style="left:1418px;top:147px;" width="12" height="10" viewBox="0 0 12 10"><path d="M1.5 1L10 9M10 1L1.5 9" stroke="#6a6a6a" stroke-width="2.3"/></svg>
<span class="t " style="left:911.80px;top:180px;font-size:11.5px;line-height:14px;color:#000;letter-spacing:-0.097px;">Wavelength [Å]:</span>
<div class="b" style="left:997px;top:176px;width:140px;height:22px;background:#fff;border:1px solid #7a7a7a"></div>
<span class="t " style="left:1003.90px;top:179px;font-size:11.5px;line-height:14px;color:#000;letter-spacing:-0.634px;">1.5406</span>
<svg class="b" style="left:1124px;top:183px;" width="11" height="7" viewBox="0 0 11 7"><path d="M1 1.2L5.2 5.4L9.4 1.2" fill="none" stroke="#444" stroke-width="1.1"/></svg>
<span class="t " style="left:1144.20px;top:180px;font-size:11.5px;line-height:14px;color:#000;letter-spacing:-0.051px;">2theta-min [°]:</span>
<div class="b" style="left:1224px;top:176px;width:61px;height:22px;background:#fff;border:1px solid #7a7a7a"></div>
<span class="t " style="left:1232.00px;top:179px;font-size:11.5px;line-height:14px;color:#000;">5</span>
<span class="t " style="left:1290.80px;top:180px;font-size:11.5px;line-height:14px;color:#000;letter-spacing:0.042px;">2theta-max [°]:</span>
<div class="b" style="left:1372px;top:176px;width:60px;height:22px;background:#fff;border:1px solid #7a7a7a"></div>
<span class="t " style="left:1378.40px;top:179px;font-size:11.5px;line-height:14px;color:#000;">90</span>
<div class="b" style="left:901px;top:211px;width:517px;height:379px;background:#fff;"></div>
<svg class="b" style="left:901px;top:211px;" width="517" height="379" viewBox="0 0 517 379"><rect x="39" y="0" width="1" height="24" fill="#e5e5e5"/><rect x="40" y="24" width="1" height="355" fill="#ededed"/><rect x="106" y="0" width="1" height="24" fill="#e5e5e5"/><rect x="107" y="24" width="1" height="355" fill="#ededed"/><rect x="194" y="0" width="1" height="24" fill="#e5e5e5"/><rect x="195" y="24" width="1" height="355" fill="#ededed"/><rect x="274" y="0" width="1" height="24" fill="#e5e5e5"/><rect x="275" y="24" width="1" height="355" fill="#ededed"/><rect x="354" y="0" width="1" height="24" fill="#e5e5e5"/><rect x="355" y="24" width="1" height="355" fill="#ededed"/><rect x="378" y="0" width="1" height="24" fill="#e5e5e5"/><rect x="379" y="24" width="1" height="355" fill="#ededed"/><rect x="402" y="0" width="1" height="24" fill="#e5e5e5"/><rect x="403" y="24" width="1" height="355" fill="#ededed"/><rect x="426" y="0" width="1" height="24" fill="#e5e5e5"/><rect x="427" y="24" width="1" height="355" fill="#ededed"/><rect x="470" y="0" width="1" height="24" fill="#e5e5e5"/><rect x="471" y="24" width="1" height="355" fill="#ededed"/><rect x="0" y="42" width="517" height="1" fill="#ededed"/><rect x="0" y="61" width="517" height="1" fill="#ededed"/><rect x="0" y="80" width="517" height="1" fill="#ededed"/><rect x="0" y="99" width="517" height="1" fill="#ededed"/><rect x="0" y="118" width="517" height="1" fill="#ededed"/><rect x="0" y="137" width="517" height="1" fill="#ededed"/><rect x="0" y="156" width="517" height="1" fill="#ededed"/><rect x="0" y="175" width="517" height="1" fill="#ededed"/><rect x="0" y="194" width="517" height="1" fill="#ededed"/><rect x="0" y="213" width="517" height="1" fill="#ededed"/><rect x="0" y="232" width="517" height="1" fill="#ededed"/><rect x="0" y="251" width="517" height="1" fill="#ededed"/><rect x="0" y="270" width="517" height="1" fill="#ededed"/><rect x="0" y="289" width="517" height="1" fill="#ededed"/><rect x="0" y="308" width="517" height="1" fill="#ededed"/><rect x="0" y="327" width="517" height="1" fill="#ededed"/><rect x="0" y="346" width="517" height="1" fill="#ededed"/><rect x="0" y="365" width="517" height="1" fill="#ededed"/><rect x="0" y="384" width="517" height="1" fill="#ededed"/></svg>
<span class="t " style="left:907.50px;top:215px;font-size:12px;line-height:16px;color:#000;letter-spacing:-0.337px;">No.</span>
<span class="t " style="left:948.00px;top:215px;font-size:12px;line-height:16px;color:#000;letter-spacing:-0.240px;">2Theta [°]</span>
<span class="t " style="left:1015.60px;top:215px;font-size:12px;line-height:16px;color:#000;letter-spacing:0.080px;">d-spacing [Å]</span>
<span class="t " style="left:1148.50px;top:215px;font-size:12px;line-height:16px;color:#000;letter-spacing:0.274px;">Int.</span>
<span class="t " style="left:1239.67px;top:215px;font-size:12px;line-height:16px;color:#000;">F</span>
<span class="t " style="left:1262.00px;top:215px;font-size:12px;line-height:16px;color:#000;">h</span>
<span class="t " style="left:1286.00px;top:215px;font-size:12px;line-height:16px;color:#000;">k</span>
<span class="t " style="left:1310.40px;top:215px;font-size:12px;line-height:16px;color:#000;">l</span>
<span class="t " style="left:1334.20px;top:215px;font-size:12px;line-height:16px;color:#000;letter-spacing:0.499px;">Mult.</span>
<div class="b" style="left:901px;top:235px;width:517px;height:355px;overflow:hidden">
<span class="t" style="left:7.00px;top:2px;font-size:12px;line-height:16px;letter-spacing:0.000px">1</span>
<span class="t" style="left:67.45px;top:2px;font-size:12px;line-height:16px;letter-spacing:-0.550px">17.872</span>
<span class="t" style="left:155.65px;top:2px;font-size:12px;line-height:16px;letter-spacing:-0.550px">4.9590</span>
<span class="t" style="left:217.10px;top:2px;font-size:12px;line-height:16px;letter-spacing:-0.503px">379704.19</span>
<span class="t" style="left:322.10px;top:2px;font-size:12px;line-height:16px;letter-spacing:-0.582px">34.46</span>
<span class="t" style="left:361.00px;top:2px;font-size:12px;line-height:16px;letter-spacing:0.000px">0</span>
<span class="t" style="left:385.00px;top:2px;font-size:12px;line-height:16px;letter-spacing:0.000px">1</span>
<span class="t" style="left:408.70px;top:2px;font-size:12px;line-height:16px;letter-spacing:0.000px">1</span>
<span class="t" style="left:433.20px;top:2px;font-size:12px;line-height:16px;letter-spacing:0.000px">8</span>
<span class="t" style="left:7.00px;top:21px;font-size:12px;line-height:16px;letter-spacing:0.000px">2</span>
<span class="t" style="left:67.45px;top:21px;font-size:12px;line-height:16px;letter-spacing:-0.550px">18.031</span>
<span class="t" style="left:155.65px;top:21px;font-size:12px;line-height:16px;letter-spacing:-0.550px">4.9158</span>
<span class="t" style="left:217.10px;top:21px;font-size:12px;line-height:16px;letter-spacing:-0.503px">164365.50</span>
<span class="t" style="left:322.10px;top:21px;font-size:12px;line-height:16px;letter-spacing:-0.582px">32.35</span>
<span class="t" style="left:361.00px;top:21px;font-size:12px;line-height:16px;letter-spacing:0.000px">1</span>
<span class="t" style="left:385.00px;top:21px;font-size:12px;line-height:16px;letter-spacing:0.000px">1</span>
<span class="t" style="left:408.70px;top:21px;font-size:12px;line-height:16px;letter-spacing:0.000px">0</span>
<span class="t" style="left:433.20px;top:21px;font-size:12px;line-height:16px;letter-spacing:0.000px">4</span>
<span class="t" style="left:7.00px;top:40px;font-size:12px;line-height:16px;letter-spacing:0.000px">3</span>
<span class="t" style="left:67.45px;top:40px;font-size:12px;line-height:16px;letter-spacing:-0.550px">25.152</span>
<span class="t" style="left:155.65px;top:40px;font-size:12px;line-height:16px;letter-spacing:-0.550px">3.5378</span>
<span class="t" style="left:229.60px;top:40px;font-size:12px;line-height:16px;letter-spacing:-0.529px">7597.35</span>
<span class="t" style="left:322.10px;top:40px;font-size:12px;line-height:16px;letter-spacing:-0.582px">13.90</span>
<span class="t" style="left:361.00px;top:40px;font-size:12px;line-height:16px;letter-spacing:0.000px">0</span>
<span class="t" style="left:385.00px;top:40px;font-size:12px;line-height:16px;letter-spacing:0.000px">0</span>
<span class="t" style="left:408.70px;top:40px;font-size:12px;line-height:16px;letter-spacing:0.000px">2</span>
<span class="t" style="left:433.20px;top:40px;font-size:12px;line-height:16px;letter-spacing:0.000px">2</span>
<span class="t" style="left:7.00px;top:59px;font-size:12px;line-height:16px;letter-spacing:0.000px">4</span>
<span class="t" style="left:67.45px;top:59px;font-size:12px;line-height:16px;letter-spacing:-0.550px">25.607</span>
<span class="t" style="left:155.65px;top:59px;font-size:12px;line-height:16px;letter-spacing:-0.550px">3.4760</span>
<span class="t" style="left:223.35px;top:59px;font-size:12px;line-height:16px;letter-spacing:-0.514px">42057.02</span>
<span class="t" style="left:322.10px;top:59px;font-size:12px;line-height:16px;letter-spacing:-0.582px">23.57</span>
<span class="t" style="left:361.00px;top:59px;font-size:12px;line-height:16px;letter-spacing:0.000px">0</span>
<span class="t" style="left:385.00px;top:59px;font-size:12px;line-height:16px;letter-spacing:0.000px">2</span>
<span class="t" style="left:408.70px;top:59px;font-size:12px;line-height:16px;letter-spacing:0.000px">0</span>
<span class="t" style="left:433.20px;top:59px;font-size:12px;line-height:16px;letter-spacing:0.000px">4</span>
<span class="t" style="left:7.00px;top:78px;font-size:12px;line-height:16px;letter-spacing:0.000px">5</span>
<span class="t" style="left:67.45px;top:78px;font-size:12px;line-height:16px;letter-spacing:-0.550px">28.281</span>
<span class="t" style="left:155.65px;top:78px;font-size:12px;line-height:16px;letter-spacing:-0.550px">3.1530</span>
<span class="t" style="left:223.35px;top:78px;font-size:12px;line-height:16px;letter-spacing:-0.514px">61622.88</span>
<span class="t" style="left:322.10px;top:78px;font-size:12px;line-height:16px;letter-spacing:-0.582px">22.41</span>
<span class="t" style="left:361.00px;top:78px;font-size:12px;line-height:16px;letter-spacing:0.000px">0</span>
<span class="t" style="left:385.00px;top:78px;font-size:12px;line-height:16px;letter-spacing:0.000px">1</span>
<span class="t" style="left:408.70px;top:78px;font-size:12px;line-height:16px;letter-spacing:0.000px">2</span>
<span class="t" style="left:433.20px;top:78px;font-size:12px;line-height:16px;letter-spacing:0.000px">8</span>
<span class="t" style="left:7.00px;top:97px;font-size:12px;line-height:16px;letter-spacing:0.000px">6</span>
<span class="t" style="left:67.45px;top:97px;font-size:12px;line-height:16px;letter-spacing:-0.550px">28.589</span>
<span class="t" style="left:155.65px;top:97px;font-size:12px;line-height:16px;letter-spacing:-0.372px">3.1199</span>
<span class="t" style="left:223.35px;top:97px;font-size:12px;line-height:16px;letter-spacing:-0.514px">14674.84</span>
<span class="t" style="left:322.10px;top:97px;font-size:12px;line-height:16px;letter-spacing:-0.359px">11.06</span>
<span class="t" style="left:361.00px;top:97px;font-size:12px;line-height:16px;letter-spacing:0.000px">0</span>
<span class="t" style="left:385.00px;top:97px;font-size:12px;line-height:16px;letter-spacing:0.000px">2</span>
<span class="t" style="left:408.70px;top:97px;font-size:12px;line-height:16px;letter-spacing:0.000px">1</span>
<span class="t" style="left:433.20px;top:97px;font-size:12px;line-height:16px;letter-spacing:0.000px">8</span>
<span class="t" style="left:7.00px;top:116px;font-size:12px;line-height:16px;letter-spacing:0.000px">7</span>
<span class="t" style="left:67.45px;top:116px;font-size:12px;line-height:16px;letter-spacing:-0.550px">28.690</span>
<span class="t" style="left:155.65px;top:116px;font-size:12px;line-height:16px;letter-spacing:-0.550px">3.1090</span>
<span class="t" style="left:223.35px;top:116px;font-size:12px;line-height:16px;letter-spacing:-0.514px">12489.61</span>
<span class="t" style="left:322.10px;top:116px;font-size:12px;line-height:16px;letter-spacing:-0.582px">10.24</span>
<span class="t" style="left:361.00px;top:116px;font-size:12px;line-height:16px;letter-spacing:0.000px">1</span>
<span class="t" style="left:385.00px;top:116px;font-size:12px;line-height:16px;letter-spacing:0.000px">2</span>
<span class="t" style="left:408.70px;top:116px;font-size:12px;line-height:16px;letter-spacing:0.000px">0</span>
<span class="t" style="left:433.20px;top:116px;font-size:12px;line-height:16px;letter-spacing:0.000px">8</span>
<span class="t" style="left:7.00px;top:135px;font-size:12px;line-height:16px;letter-spacing:0.000px">8</span>
<span class="t" style="left:67.45px;top:135px;font-size:12px;line-height:16px;letter-spacing:-0.550px">31.121</span>
<span class="t" style="left:155.65px;top:135px;font-size:12px;line-height:16px;letter-spacing:-0.550px">2.8715</span>
<span class="t" style="left:217.10px;top:135px;font-size:12px;line-height:16px;letter-spacing:-0.503px">404508.19</span>
<span class="t" style="left:322.10px;top:135px;font-size:12px;line-height:16px;letter-spacing:-0.582px">63.61</span>
<span class="t" style="left:361.00px;top:135px;font-size:12px;line-height:16px;letter-spacing:0.000px">1</span>
<span class="t" style="left:385.00px;top:135px;font-size:12px;line-height:16px;letter-spacing:0.000px">1</span>
<span class="t" style="left:408.70px;top:135px;font-size:12px;line-height:16px;letter-spacing:0.000px">2</span>
<span class="t" style="left:433.20px;top:135px;font-size:12px;line-height:16px;letter-spacing:0.000px">8</span>
<span class="t" style="left:7.00px;top:154px;font-size:12px;line-height:16px;letter-spacing:0.000px">9</span>
<span class="t" style="left:67.45px;top:154px;font-size:12px;line-height:16px;letter-spacing:-0.550px">31.403</span>
<span class="t" style="left:155.65px;top:154px;font-size:12px;line-height:16px;letter-spacing:-0.550px">2.8464</span>
<span class="t" style="left:217.10px;top:154px;font-size:12px;line-height:16px;letter-spacing:-0.503px">706557.88</span>
<span class="t" style="left:322.10px;top:154px;font-size:12px;line-height:16px;letter-spacing:-0.582px">60.02</span>
<span class="t" style="left:361.00px;top:154px;font-size:12px;line-height:16px;letter-spacing:0.000px">1</span>
<span class="t" style="left:385.00px;top:154px;font-size:12px;line-height:16px;letter-spacing:0.000px">2</span>
<span class="t" style="left:408.70px;top:154px;font-size:12px;line-height:16px;letter-spacing:0.000px">1</span>
<span class="t" style="left:433.20px;top:154px;font-size:12px;line-height:16px;letter-spacing:-0.847px">16</span>
<span class="t" style="left:7.00px;top:173px;font-size:12px;line-height:16px;letter-spacing:-0.847px">10</span>
<span class="t" style="left:67.45px;top:173px;font-size:12px;line-height:16px;letter-spacing:-0.550px">36.199</span>
<span class="t" style="left:155.65px;top:173px;font-size:12px;line-height:16px;letter-spacing:-0.550px">2.4795</span>
<span class="t" style="left:217.10px;top:173px;font-size:12px;line-height:16px;letter-spacing:-0.391px">470311.41</span>
<span class="t" style="left:322.10px;top:173px;font-size:12px;line-height:16px;letter-spacing:-0.582px">80.82</span>
<span class="t" style="left:361.00px;top:173px;font-size:12px;line-height:16px;letter-spacing:0.000px">0</span>
<span class="t" style="left:385.00px;top:173px;font-size:12px;line-height:16px;letter-spacing:0.000px">2</span>
<span class="t" style="left:408.70px;top:173px;font-size:12px;line-height:16px;letter-spacing:0.000px">2</span>
<span class="t" style="left:433.20px;top:173px;font-size:12px;line-height:16px;letter-spacing:0.000px">8</span>
<span class="t" style="left:7.00px;top:192px;font-size:12px;line-height:16px;letter-spacing:0.044px">11</span>
<span class="t" style="left:67.45px;top:192px;font-size:12px;line-height:16px;letter-spacing:-0.550px">36.528</span>
<span class="t" style="left:155.65px;top:192px;font-size:12px;line-height:16px;letter-spacing:-0.550px">2.4579</span>
<span class="t" style="left:217.10px;top:192px;font-size:12px;line-height:16px;letter-spacing:-0.503px">312693.53</span>
<span class="t" style="left:322.10px;top:192px;font-size:12px;line-height:16px;letter-spacing:-0.582px">94.13</span>
<span class="t" style="left:361.00px;top:192px;font-size:12px;line-height:16px;letter-spacing:0.000px">2</span>
<span class="t" style="left:385.00px;top:192px;font-size:12px;line-height:16px;letter-spacing:0.000px">2</span>
<span class="t" style="left:408.70px;top:192px;font-size:12px;line-height:16px;letter-spacing:0.000px">0</span>
<span class="t" style="left:433.20px;top:192px;font-size:12px;line-height:16px;letter-spacing:0.000px">4</span>
<span class="t" style="left:7.00px;top:211px;font-size:12px;line-height:16px;letter-spacing:-0.847px">12</span>
<span class="t" style="left:67.45px;top:211px;font-size:12px;line-height:16px;letter-spacing:-0.550px">38.518</span>
<span class="t" style="left:155.65px;top:211px;font-size:12px;line-height:16px;letter-spacing:-0.550px">2.3354</span>
<span class="t" style="left:217.10px;top:211px;font-size:12px;line-height:16px;letter-spacing:-0.503px">141928.89</span>
<span class="t" style="left:322.10px;top:211px;font-size:12px;line-height:16px;letter-spacing:-0.582px">33.62</span>
<span class="t" style="left:361.00px;top:211px;font-size:12px;line-height:16px;letter-spacing:0.000px">1</span>
<span class="t" style="left:385.00px;top:211px;font-size:12px;line-height:16px;letter-spacing:0.000px">2</span>
<span class="t" style="left:408.70px;top:211px;font-size:12px;line-height:16px;letter-spacing:0.000px">2</span>
<span class="t" style="left:433.20px;top:211px;font-size:12px;line-height:16px;letter-spacing:-0.847px">16</span>
<span class="t" style="left:7.00px;top:230px;font-size:12px;line-height:16px;letter-spacing:-0.847px">13</span>
<span class="t" style="left:67.45px;top:230px;font-size:12px;line-height:16px;letter-spacing:-0.550px">40.349</span>
<span class="t" style="left:155.65px;top:230px;font-size:12px;line-height:16px;letter-spacing:-0.550px">2.2335</span>
<span class="t" style="left:223.35px;top:230px;font-size:12px;line-height:16px;letter-spacing:-0.514px">75722.64</span>
<span class="t" style="left:322.10px;top:230px;font-size:12px;line-height:16px;letter-spacing:-0.582px">36.56</span>
<span class="t" style="left:361.00px;top:230px;font-size:12px;line-height:16px;letter-spacing:0.000px">0</span>
<span class="t" style="left:385.00px;top:230px;font-size:12px;line-height:16px;letter-spacing:0.000px">1</span>
<span class="t" style="left:408.70px;top:230px;font-size:12px;line-height:16px;letter-spacing:0.000px">3</span>
<span class="t" style="left:433.20px;top:230px;font-size:12px;line-height:16px;letter-spacing:0.000px">8</span>
<span class="t" style="left:7.00px;top:249px;font-size:12px;line-height:16px;letter-spacing:-0.847px">14</span>
<span class="t" style="left:67.45px;top:249px;font-size:12px;line-height:16px;letter-spacing:-0.550px">40.948</span>
<span class="t" style="left:155.65px;top:249px;font-size:12px;line-height:16px;letter-spacing:-0.550px">2.2022</span>
<span class="t" style="left:223.35px;top:249px;font-size:12px;line-height:16px;letter-spacing:-0.514px">76490.62</span>
<span class="t" style="left:322.10px;top:249px;font-size:12px;line-height:16px;letter-spacing:-0.582px">37.36</span>
<span class="t" style="left:361.00px;top:249px;font-size:12px;line-height:16px;letter-spacing:0.000px">0</span>
<span class="t" style="left:385.00px;top:249px;font-size:12px;line-height:16px;letter-spacing:0.000px">3</span>
<span class="t" style="left:408.70px;top:249px;font-size:12px;line-height:16px;letter-spacing:0.000px">1</span>
<span class="t" style="left:433.20px;top:249px;font-size:12px;line-height:16px;letter-spacing:0.000px">8</span>
<span class="t" style="left:7.00px;top:268px;font-size:12px;line-height:16px;letter-spacing:-0.847px">15</span>
<span class="t" style="left:67.45px;top:268px;font-size:12px;line-height:16px;letter-spacing:-0.550px">41.022</span>
<span class="t" style="left:155.65px;top:268px;font-size:12px;line-height:16px;letter-spacing:-0.550px">2.1984</span>
<span class="t" style="left:223.35px;top:268px;font-size:12px;line-height:16px;letter-spacing:-0.514px">66884.49</span>
<span class="t" style="left:322.10px;top:268px;font-size:12px;line-height:16px;letter-spacing:-0.582px">35.00</span>
<span class="t" style="left:361.00px;top:268px;font-size:12px;line-height:16px;letter-spacing:0.000px">1</span>
<span class="t" style="left:385.00px;top:268px;font-size:12px;line-height:16px;letter-spacing:0.000px">3</span>
<span class="t" style="left:408.70px;top:268px;font-size:12px;line-height:16px;letter-spacing:0.000px">0</span>
<span class="t" style="left:433.20px;top:268px;font-size:12px;line-height:16px;letter-spacing:0.000px">8</span>
<span class="t" style="left:7.00px;top:287px;font-size:12px;line-height:16px;letter-spacing:-0.847px">16</span>
<span class="t" style="left:67.45px;top:287px;font-size:12px;line-height:16px;letter-spacing:-0.550px">43.051</span>
<span class="t" style="left:155.65px;top:287px;font-size:12px;line-height:16px;letter-spacing:-0.550px">2.0994</span>
<span class="t" style="left:229.60px;top:287px;font-size:12px;line-height:16px;letter-spacing:-0.529px">8267.06</span>
<span class="t" style="left:328.35px;top:287px;font-size:12px;line-height:16px;letter-spacing:-0.635px">9.19</span>
<span class="t" style="left:361.00px;top:287px;font-size:12px;line-height:16px;letter-spacing:0.000px">1</span>
<span class="t" style="left:385.00px;top:287px;font-size:12px;line-height:16px;letter-spacing:0.000px">3</span>
<span class="t" style="left:408.70px;top:287px;font-size:12px;line-height:16px;letter-spacing:0.000px">1</span>
<span class="t" style="left:433.20px;top:287px;font-size:12px;line-height:16px;letter-spacing:-0.847px">16</span>
<span class="t" style="left:7.00px;top:306px;font-size:12px;line-height:16px;letter-spacing:-0.847px">17</span>
<span class="t" style="left:67.45px;top:306px;font-size:12px;line-height:16px;letter-spacing:-0.550px">44.867</span>
<span class="t" style="left:155.65px;top:306px;font-size:12px;line-height:16px;letter-spacing:-0.550px">2.0186</span>
<span class="t" style="left:217.10px;top:306px;font-size:12px;line-height:16px;letter-spacing:-0.503px">180899.14</span>
<span class="t" style="left:322.10px;top:306px;font-size:12px;line-height:16px;letter-spacing:-0.582px">63.66</span>
<span class="t" style="left:361.00px;top:306px;font-size:12px;line-height:16px;letter-spacing:0.000px">2</span>
<span class="t" style="left:385.00px;top:306px;font-size:12px;line-height:16px;letter-spacing:0.000px">2</span>
<span class="t" style="left:408.70px;top:306px;font-size:12px;line-height:16px;letter-spacing:0.000px">2</span>
<span class="t" style="left:433.20px;top:306px;font-size:12px;line-height:16px;letter-spacing:0.000px">8</span>
<span class="t" style="left:7.00px;top:325px;font-size:12px;line-height:16px;letter-spacing:-0.847px">18</span>
<span class="t" style="left:67.45px;top:325px;font-size:12px;line-height:16px;letter-spacing:-0.550px">46.492</span>
<span class="t" style="left:155.65px;top:325px;font-size:12px;line-height:16px;letter-spacing:-0.550px">1.9517</span>
<span class="t" style="left:248.35px;top:325px;font-size:12px;line-height:16px;letter-spacing:-0.635px">1.35</span>
<span class="t" style="left:328.35px;top:325px;font-size:12px;line-height:16px;letter-spacing:-0.635px">0.18</span>
<span class="t" style="left:361.00px;top:325px;font-size:12px;line-height:16px;letter-spacing:0.000px">0</span>
<span class="t" style="left:385.00px;top:325px;font-size:12px;line-height:16px;letter-spacing:0.000px">2</span>
<span class="t" style="left:408.70px;top:325px;font-size:12px;line-height:16px;letter-spacing:0.000px">3</span>
<span class="t" style="left:433.20px;top:325px;font-size:12px;line-height:16px;letter-spacing:0.000px">8</span>
<span class="t" style="left:7.00px;top:344px;font-size:12px;line-height:16px;letter-spacing:-0.847px">19</span>
<span class="t" style="left:67.45px;top:344px;font-size:12px;line-height:16px;letter-spacing:-0.550px">46.828</span>
<span class="t" style="left:155.65px;top:344px;font-size:12px;line-height:16px;letter-spacing:-0.550px">1.9385</span>
<span class="t" style="left:223.35px;top:344px;font-size:12px;line-height:16px;letter-spacing:-0.514px">25332.09</span>
<span class="t" style="left:322.10px;top:344px;font-size:12px;line-height:16px;letter-spacing:-0.582px">25.00</span>
<span class="t" style="left:361.00px;top:344px;font-size:12px;line-height:16px;letter-spacing:0.000px">0</span>
<span class="t" style="left:385.00px;top:344px;font-size:12px;line-height:16px;letter-spacing:0.000px">3</span>
<span class="t" style="left:408.70px;top:344px;font-size:12px;line-height:16px;letter-spacing:0.000px">2</span>
<span class="t" style="left:433.20px;top:344px;font-size:12px;line-height:16px;letter-spacing:0.000px">8</span>
</div>
<div class="b" style="left:1418px;top:211px;width:16px;height:379px;background:#f0f0f0;"></div>
<div class="b" style="left:1419px;top:228px;width:15px;height:66px;background:#cdcdcd;"></div>
<svg class="b" style="left:1419px;top:213px;" width="15" height="14" viewBox="0 0 15 14"><path d="M3.8 9.8L7.5 6L11.2 9.8" fill="none" stroke="#555" stroke-width="2.2"/></svg>
<svg class="b" style="left:1419px;top:574px;" width="15" height="14" viewBox="0 0 15 14"><path d="M3.8 5.2L7.5 9L11.2 5.2" fill="none" stroke="#555" stroke-width="2.2"/></svg>
<div class="b" style="left:900px;top:595px;width:536px;height:354px;background:#f0f0f0;border-left:1px solid #a0a0a0"></div>
<div class="b" style="left:900px;top:595px;width:535px;height:20px;background:#f0f0f0;border:1px solid #a0a0a0"></div>
<span class="t " style="left:908.20px;top:598px;font-size:12px;line-height:16px;color:#000;letter-spacing:-0.210px;">Properties</span>
<svg class="b" style="left:1418px;top:600px;" width="12" height="10" viewBox="0 0 12 10"><path d="M1.5 1L10 9M10 1L1.5 9" stroke="#6a6a6a" stroke-width="2.3"/></svg>
<div class="b" style="left:903px;top:617px;width:530px;height:22px;background:#fff;border:1px solid #7a7a7a"></div>
<span class="t " style="left:908.20px;top:620px;font-size:11.5px;line-height:14px;color:#000;letter-spacing:-0.517px;">Diffraction diagram</span>
<svg class="b" style="left:1419px;top:625.5px;" width="11" height="7" viewBox="0 0 11 7"><path d="M1 1.2L5.2 5.4L9.4 1.2" fill="none" stroke="#444" stroke-width="1.1"/></svg>
<div class="b" style="left:901px;top:641px;width:536px;height:308px;background:#fff;"></div>
<svg class="b" style="left:901px;top:639px" width="533" height="308" viewBox="901 639 533 308"><path d="M954.5 891.5H1420.5" stroke="#000" stroke-width="1" fill="none" shape-rendering="crispEdges"/><path d="M981.5 656.5V906.5M1036.5 656.5V906.5M1091.5 656.5V906.5M1146.5 656.5V906.5M1201.5 656.5V906.5M1256.5 656.5V906.5M1311.5 656.5V906.5M1365.5 656.5V906.5M954.5 858.5H1420.5M954.5 824.5H1420.5M954.5 791.5H1420.5M954.5 758.5H1420.5M954.5 724.5H1420.5M954.5 691.5H1420.5M954.5 658.5H1420.5" stroke="#b8b8b8" stroke-width="1" stroke-dasharray="3 3" fill="none" shape-rendering="crispEdges"/><path d="M1025.5 891.5V765.1M1064.5 891.5V889.0M1067.5 891.5V877.5M1082.5 891.5V871.0M1083.5 891.5V886.6M1084.5 891.5V887.3M1097.5 891.5V756.8M1099.5 891.5V656.5M1125.5 891.5V734.9M1127.5 891.5V787.4M1138.5 891.5V844.2M1148.5 891.5V866.3M1151.5 891.5V866.0M1163.5 891.5V888.7M1173.5 891.5V831.3M1183.5 891.5V883.1M1185.5 891.5V889.5M1193.5 891.5V877.5M1194.5 891.5V866.2M1196.5 891.5V878.2M1215.5 891.5V887.2M1219.5 891.5V881.8M1223.5 891.5V888.2M1224.5 891.5V889.5M1229.5 891.5V862.9M1232.5 891.5V842.9M1234.5 891.5V852.9M1240.5 891.5V889.2M1247.5 891.5V876.8M1251.5 891.5V863.9M1252.5 891.5V849.9M1256.5 891.5V885.5M1260.5 891.5V889.2M1261.5 891.5V889.5M1267.5 891.5V876.8M1269.5 891.5V890.5M1282.5 891.5V880.8M1286.5 891.5V852.9M1291.5 891.5V889.2M1297.5 891.5V890.2M1299.5 891.5V862.9M1301.5 891.5V888.8M1304.5 891.5V885.8M1312.5 891.5V889.8M1324.5 891.5V883.2M1327.5 891.5V875.2M1329.5 891.5V875.2M1335.5 891.5V878.8M1336.5 891.5V881.5M1348.5 891.5V887.2M1352.5 891.5V886.2M1356.5 891.5V885.8M1361.5 891.5V889.2M1365.5 891.5V884.8M1368.5 891.5V888.2M1374.5 891.5V887.5M1375.5 891.5V889.5M1379.5 891.5V878.8M1382.5 891.5V881.2M1384.5 891.5V872.2M1390.5 891.5V878.8M1392.5 891.5V889.5M1397.5 891.5V888.8M1398.5 891.5V886.2M1399.5 891.5V889.8M1406.5 891.5V889.2M1412.5 891.5V890.8M1416.5 891.5V890.8" stroke="#0000e6" stroke-width="1" fill="none" shape-rendering="crispEdges"/><rect x="954.5" y="656.5" width="466.0" height="250.0" fill="none" stroke="#000" stroke-width="1" shape-rendering="crispEdges"/><path d="M942.5 891.5H954.5M942.5 858.5H954.5M942.5 824.5H954.5M942.5 791.5H954.5M942.5 758.5H954.5M942.5 724.5H954.5M942.5 691.5H954.5M942.5 658.5H954.5M954.5 906.5V909.0M959.5 906.5V909.0M965.5 906.5V909.0M970.5 906.5V909.0M976.5 906.5V909.0M981.5 906.5V917.0M987.5 906.5V909.0M992.5 906.5V909.0M998.5 906.5V909.0M1003.5 906.5V909.0M1009.5 906.5V909.0M1014.5 906.5V909.0M1020.5 906.5V909.0M1025.5 906.5V909.0M1031.5 906.5V909.0M1036.5 906.5V917.0M1042.5 906.5V909.0M1047.5 906.5V909.0M1053.5 906.5V909.0M1058.5 906.5V909.0M1064.5 906.5V909.0M1069.5 906.5V909.0M1075.5 906.5V909.0M1080.5 906.5V909.0M1086.5 906.5V909.0M1091.5 906.5V917.0M1097.5 906.5V909.0M1102.5 906.5V909.0M1108.5 906.5V909.0M1113.5 906.5V909.0M1119.5 906.5V909.0M1124.5 906.5V909.0M1129.5 906.5V909.0M1135.5 906.5V909.0M1140.5 906.5V909.0M1146.5 906.5V917.0M1151.5 906.5V909.0M1157.5 906.5V909.0M1162.5 906.5V909.0M1168.5 906.5V909.0M1173.5 906.5V909.0M1179.5 906.5V909.0M1184.5 906.5V909.0M1190.5 906.5V909.0M1195.5 906.5V909.0M1201.5 906.5V917.0M1206.5 906.5V909.0M1212.5 906.5V909.0M1217.5 906.5V909.0M1223.5 906.5V909.0M1228.5 906.5V909.0M1234.5 906.5V909.0M1239.5 906.5V909.0M1245.5 906.5V909.0M1250.5 906.5V909.0M1256.5 906.5V917.0M1261.5 906.5V909.0M1267.5 906.5V909.0M1272.5 906.5V909.0M1278.5 906.5V909.0M1283.5 906.5V909.0M1289.5 906.5V909.0M1294.5 906.5V909.0M1300.5 906.5V909.0M1305.5 906.5V909.0M1311.5 906.5V917.0M1316.5 906.5V909.0M1322.5 906.5V909.0M1327.5 906.5V909.0M1333.5 906.5V909.0M1338.5 906.5V909.0M1344.5 906.5V909.0M1349.5 906.5V909.0M1354.5 906.5V909.0M1360.5 906.5V909.0M1365.5 906.5V917.0M1371.5 906.5V909.0M1376.5 906.5V909.0M1382.5 906.5V909.0M1387.5 906.5V909.0M1393.5 906.5V909.0M1398.5 906.5V909.0M1404.5 906.5V909.0M1409.5 906.5V909.0M1415.5 906.5V909.0M1420.5 906.5V917.0" stroke="#000" stroke-width="1" fill="none" shape-rendering="crispEdges"/><text x="942.8" y="895.9" text-anchor="end" font-family="Liberation Sans, sans-serif" font-size="12.4">0</text><text x="942.8" y="862.6" text-anchor="end" font-family="Liberation Sans, sans-serif" font-size="12.4">100000</text><text x="942.8" y="829.3" text-anchor="end" font-family="Liberation Sans, sans-serif" font-size="12.4">200000</text><text x="942.8" y="796.0" text-anchor="end" font-family="Liberation Sans, sans-serif" font-size="12.4">300000</text><text x="942.8" y="762.7" text-anchor="end" font-family="Liberation Sans, sans-serif" font-size="12.4">400000</text><text x="942.8" y="729.4" text-anchor="end" font-family="Liberation Sans, sans-serif" font-size="12.4">500000</text><text x="942.8" y="696.1" text-anchor="end" font-family="Liberation Sans, sans-serif" font-size="12.4">600000</text><text x="942.8" y="662.8" text-anchor="end" font-family="Liberation Sans, sans-serif" font-size="12.4">700000</text><text x="981.5" y="929" text-anchor="middle" font-family="Liberation Sans, sans-serif" font-size="12">10</text><text x="1036.5" y="929" text-anchor="middle" font-family="Liberation Sans, sans-serif" font-size="12">20</text><text x="1091.5" y="929" text-anchor="middle" font-family="Liberation Sans, sans-serif" font-size="12">30</text><text x="1146.5" y="929" text-anchor="middle" font-family="Liberation Sans, sans-serif" font-size="12">40</text><text x="1201.5" y="929" text-anchor="middle" font-family="Liberation Sans, sans-serif" font-size="12">50</text><text x="1256.5" y="929" text-anchor="middle" font-family="Liberation Sans, sans-serif" font-size="12">60</text><text x="1311.5" y="929" text-anchor="middle" font-family="Liberation Sans, sans-serif" font-size="12">70</text><text x="1365.5" y="929" text-anchor="middle" font-family="Liberation Sans, sans-serif" font-size="12">80</text><text x="1420.0" y="929" text-anchor="middle" font-family="Liberation Sans, sans-serif" font-size="12">90</text><text x="937.6" y="652.8" font-family="Liberation Sans, sans-serif" font-size="12">Int.</text><text x="1186.8" y="943.6" text-anchor="middle" font-family="Liberation Sans, sans-serif" font-size="12">2Theta</text></svg>
<div class="b" style="left:1px;top:949px;width:1436px;height:26px;background:#d6dbe9;"></div>
<div class="b" style="left:0px;top:975px;width:1438px;height:19px;background:#065a96;"></div>
<div class="b" style="left:0px;top:994px;width:1438px;height:2px;background:#3c3c3c;"></div>
<div class="b" style="left:4px;top:950px;width:762px;height:24px;background:#d1d7e6;"></div>
<div class="b" style="left:770px;top:950px;width:250px;height:24px;background:#d1d7e6;"></div>
<div class="b" style="left:1026px;top:950px;width:120px;height:24px;background:#d1d7e6;"></div>
<svg class="b" style="left:11px;top:954px;" width="5" height="18" viewBox="0 0 5 18"><rect x="0" y="0" width="1" height="1" fill="#6f7a96"/><rect x="4" y="0" width="1" height="1" fill="#6f7a96"/><rect x="2" y="2" width="1" height="1" fill="#6f7a96"/><rect x="0" y="4" width="1" height="1" fill="#6f7a96"/><rect x="4" y="4" width="1" height="1" fill="#6f7a96"/><rect x="2" y="6" width="1" height="1" fill="#6f7a96"/><rect x="0" y="8" width="1" height="1" fill="#6f7a96"/><rect x="4" y="8" width="1" height="1" fill="#6f7a96"/><rect x="2" y="10" width="1" height="1" fill="#6f7a96"/><rect x="0" y="12" width="1" height="1" fill="#6f7a96"/><rect x="4" y="12" width="1" height="1" fill="#6f7a96"/><rect x="2" y="14" width="1" height="1" fill="#6f7a96"/><rect x="0" y="16" width="1" height="1" fill="#6f7a96"/><rect x="4" y="16" width="1" height="1" fill="#6f7a96"/></svg>
<svg class="b" style="left:26px;top:955px;" width="16" height="16" viewBox="0 0 16 16"><rect x="0.6" y="0.6" width="14.8" height="13.8" fill="#fff" stroke="#10107a" stroke-width="1.2"/><rect x="1.2" y="1.2" width="6.8" height="12.6" fill="#a8c8f0"/><rect x="8" y="1.2" width="6.8" height="1.6" fill="#a8a8a8"/><rect x="1.2" y="1.2" width="6.8" height="1.6" fill="#10107a"/><path d="M5 7C5.5 4.2 10 3.6 11.6 6M11.4 8.8C10.6 11.4 6.6 11.8 5 9.6" fill="none" stroke="#b8903a" stroke-width="1.9"/><polygon points="13.2,3.6 12.8,7.4 9.6,6.2" fill="#b8903a"/><polygon points="3.4,12 3.8,8.4 6.8,9.6" fill="#b8903a"/></svg>
<svg class="b" style="left:48px;top:955px;" width="17" height="16" viewBox="0 0 17 16"><rect x="0.6" y="0.6" width="13.2" height="11.2" fill="#fff" stroke="#000" stroke-width="1.2"/><rect x="0.6" y="0.3" width="13.2" height="1.8" fill="#10107a"/><path d="M2 3.8H8.8M2 5.8H8.8M2 7.8H6" stroke="#707070" stroke-width="1"/><path d="M6.8 9H11.6V6.6L16 10.5L11.6 14.6V12.2H6.8Z" fill="#20e8f8" stroke="#000" stroke-width="0.9"/></svg>
<svg class="b" style="left:70px;top:955px;" width="17" height="16" viewBox="0 0 17 16"><circle cx="2.2" cy="7" r="1.9" fill="#ffee00" stroke="#504800" stroke-width="0.5"/><circle cx="2.2" cy="13" r="1.9" fill="#ffee00" stroke="#504800" stroke-width="0.5"/><circle cx="3.4" cy="10" r="1.8" fill="#ffee00" stroke="#504800" stroke-width="0.5"/><circle cx="6.4" cy="10" r="2.1" fill="#8a7a10" stroke="#403800" stroke-width="0.5"/><path d="M5.5 2.5L15 12.2" stroke="#10107a" stroke-width="2.2"/><path d="M5.2 2.2L9 6" stroke="#f0e020" stroke-width="1.6"/><path d="M9.2 1.2H12.2M10.7 -0.2V2.8M12.5 3.8H14.9M13.7 2.6V5" stroke="#000" stroke-width="1"/><rect x="0.3" y="0.3" width="1" height="1" fill="#000"/></svg>
<svg class="b" style="left:92px;top:955px;" width="19" height="16" viewBox="0 0 19 16"><rect x="4.5" y="0.6" width="11.6" height="11.6" fill="#fff" stroke="#8a8a8a" stroke-width="1.1"/><path d="M7 8.2L0.8 14.4" stroke="#a01818" stroke-width="1.7"/><path d="M6.4 8.6L1.2 13.8" stroke="#301010" stroke-width="0.6"/><polygon points="3.6,5.4 6.9,3.4 12.3,7.9 10.3,10.5 7.8,7.9 6.1,8.4" fill="#ffee00" stroke="#605000" stroke-width="0.6"/></svg>
<svg class="b" style="left:115px;top:963px;" width="5" height="3" viewBox="0 0 5 3"><polygon points="0,0 5,0 2.5,3" fill="#505868"/></svg>
<div class="b" style="left:129px;top:953px;width:1px;height:20px;background:#8591a8;"></div>
<div class="b" style="left:152px;top:953px;width:1px;height:20px;background:#8591a8;"></div>
<svg class="b" style="left:160px;top:955px;" width="15" height="16" viewBox="0 0 15 16"><path d="M1.5 7.5L7 2L14 6.5L9.5 13.5L4.5 13.5Z" fill="#fff" stroke="#000" stroke-width="1.5"/><path d="M3.5 8L6 12H9L12.5 7.5L8 5Z" fill="#f0e020"/><path d="M2 8L7 3.5L12.8 7" fill="none" stroke="#808080" stroke-width="1.6"/></svg>
<svg class="b" style="left:181px;top:955px;" width="17" height="16" viewBox="0 0 17 16"><circle cx="5" cy="4.5" r="3.6" fill="#ffee00" stroke="#000" stroke-width="1.2"/><circle cx="12" cy="4.5" r="3.6" fill="#ffee00" stroke="#000" stroke-width="1.2"/><circle cx="5" cy="11.5" r="3.6" fill="#ffee00" stroke="#000" stroke-width="1.2"/><circle cx="12" cy="11.5" r="3.6" fill="#ffee00" stroke="#000" stroke-width="1.2"/><path d="M8.5 5V11M5.5 8H11.5" stroke="#000" stroke-width="1.2"/></svg>
<svg class="b" style="left:204px;top:955px;" width="16" height="16" viewBox="0 0 16 16"><path d="M0.5 8H7M3.8 4.8V11.2" stroke="#000" stroke-width="1.7"/><circle cx="11.5" cy="8" r="3.4" fill="#ffee00" stroke="#000" stroke-width="1.3"/></svg>
<svg class="b" style="left:225px;top:955px;" width="16" height="16" viewBox="0 0 16 16"><circle cx="3.5" cy="12" r="2.6" fill="#fff" stroke="#000" stroke-width="1.2"/><circle cx="12.5" cy="12" r="2.6" fill="#fff" stroke="#000" stroke-width="1.2"/><path d="M6 12H10" stroke="#000" stroke-width="1.2"/><path d="M5.5 4C5.5 0.5 11 0.5 11 3.5C11 5.5 8.3 5.5 8.3 8" fill="none" stroke="#000" stroke-width="1.5"/><rect x="7.5" y="9" width="1.6" height="1.6" fill="#000"/></svg>
<svg class="b" style="left:246px;top:955px;" width="17" height="16" viewBox="0 0 17 16"><path d="M3.5 3.5H13.5V12.5H3.5ZM3.5 3.5L13.5 12.5M13.5 3.5L3.5 12.5" stroke="#2040c0" stroke-width="1.1" fill="none"/><circle cx="3.5" cy="3.5" r="2.3" fill="#fff" stroke="#000" stroke-width="1.1"/><circle cx="13.5" cy="3.5" r="2.3" fill="#fff" stroke="#000" stroke-width="1.1"/><circle cx="3.5" cy="12.5" r="2.3" fill="#fff" stroke="#000" stroke-width="1.1"/><circle cx="13.5" cy="12.5" r="2.3" fill="#fff" stroke="#000" stroke-width="1.1"/></svg>
<svg class="b" style="left:270px;top:955px;" width="15" height="16" viewBox="0 0 15 16"><circle cx="3.5" cy="12" r="2.8" fill="#fff" stroke="#000" stroke-width="1.2"/><circle cx="11.5" cy="12" r="2.8" fill="#fff" stroke="#000" stroke-width="1.2"/><path d="M6 1.5H9V5H11L7.5 9.5L4 5H6Z" fill="#fff" stroke="#000" stroke-width="1.1"/><path d="M6 12H9" stroke="#000"/></svg>
<svg class="b" style="left:292px;top:955px;" width="15" height="16" viewBox="0 0 15 16"><circle cx="7.5" cy="8" r="6.4" fill="none" stroke="#000" stroke-width="1" stroke-dasharray="1.2 1.2"/><circle cx="7.5" cy="8" r="3.8" fill="#8a7a10" stroke="#403800" stroke-width="1"/></svg>
<svg class="b" style="left:313px;top:963px;" width="5" height="3" viewBox="0 0 5 3"><polygon points="0,0 5,0 2.5,3" fill="#404040"/></svg>
<div class="b" style="left:323px;top:953px;width:1px;height:20px;background:#8591a8;"></div>
<svg class="b" style="left:330px;top:955px;" width="16" height="16" viewBox="0 0 16 16"><path d="M4.5 2H11.5L15 7.5L11.5 13H4.5L1 7.5Z" fill="none" stroke="#1030f0" stroke-width="2"/></svg>
<svg class="b" style="left:352px;top:955px;" width="16" height="16" viewBox="0 0 16 16"><path d="M4.5 2H11.5L15 7.5L11.5 13H8" fill="none" stroke="#ffff00" stroke-width="2"/><path d="M8 13H4.5L1 7.5L4 2.8" fill="none" stroke="#1030f0" stroke-width="2"/></svg>
<svg class="b" style="left:374px;top:955px;" width="16" height="16" viewBox="0 0 16 16"><path d="M2.5 4.5H10.5V12.5H2.5ZM2.5 4.5L5 2.5H13V10.5L10.5 12.5M10.5 4.5L13 2.5" fill="none" stroke="#808080" stroke-width="1.1"/><path d="M3 2.5L5.5 0.8H10L12.5 2.5M4 6.5H10M6 9H12.5L15 11.5L12.5 14H7.5L5 11.5Z" fill="none" stroke="#1030f0" stroke-width="1.4"/></svg>
<svg class="b" style="left:397px;top:955px;" width="16" height="16" viewBox="0 0 16 16"><path d="M4.5 4L1.9 1.4M4.5 4L7.1 1.4M4.5 4L1.9 6.6M11.5 4L8.9 1.4M11.5 4L14.1 1.4M11.5 4L14.1 6.6M4.5 11L1.9 8.4M4.5 11L1.9 13.6M4.5 11L7.1 13.6M11.5 11L14.1 8.4M11.5 11L8.9 13.6M11.5 11L14.1 13.6" stroke="#1030f0" stroke-width="1.5" fill="none"/><path d="M4.5 4L11.5 11M11.5 4L4.5 11" stroke="#000" stroke-width="1.7"/><rect x="3.5" y="3" width="2" height="2" fill="#000"/><rect x="10.5" y="3" width="2" height="2" fill="#000"/><rect x="3.5" y="10" width="2" height="2" fill="#000"/><rect x="10.5" y="10" width="2" height="2" fill="#000"/></svg>
<svg class="b" style="left:419px;top:955px;" width="16" height="16" viewBox="0 0 16 16"><path d="M4.5 4L1.9 1.4M4.5 4L7.1 1.4M4.5 4L1.9 6.6M11.5 4L8.9 1.4M11.5 4L14.1 1.4M11.5 4L14.1 6.6M4.5 11L1.9 8.4M4.5 11L1.9 13.6M4.5 11L7.1 13.6M11.5 11L14.1 8.4M11.5 11L8.9 13.6M11.5 11L14.1 13.6" stroke="#d82008" stroke-width="1.5" fill="none"/><path d="M4.5 4L11.5 11M11.5 4L4.5 11" stroke="#000" stroke-width="1.7"/><rect x="3.5" y="3" width="2" height="2" fill="#000"/><rect x="10.5" y="3" width="2" height="2" fill="#000"/><rect x="3.5" y="10" width="2" height="2" fill="#000"/><rect x="10.5" y="10" width="2" height="2" fill="#000"/></svg>
<div class="b" style="left:440px;top:953px;width:1px;height:20px;background:#8591a8;"></div>
<svg class="b" style="left:446px;top:955px;" width="15" height="16" viewBox="0 0 15 16"><path d="M4 11.5L10.5 5" stroke="#1030e0" stroke-width="1.8"/><circle cx="3.6" cy="11.8" r="3" fill="#a8c8e8" stroke="#000" stroke-width="1"/><circle cx="11" cy="4.5" r="3.2" fill="#ffee00" stroke="#000" stroke-width="1"/></svg>
<svg class="b" style="left:468px;top:955px;" width="16" height="16" viewBox="0 0 16 16"><path d="M5 4.5H11L13.5 8L11 11.5H5L2.5 8Z" fill="none" stroke="#000" stroke-width="1.5"/><path d="M5 4.5L2 1.5M11 4.5L14 1.5M5 11.5L2 14.5M11 11.5L14 14.5" stroke="#1030e0" stroke-width="1.5"/><rect x="0.5" y="0.5" width="2.4" height="2.4" fill="#ffee00"/><rect x="13" y="0.5" width="2.4" height="2.4" fill="#ffee00"/><rect x="0.5" y="13" width="2.4" height="2.4" fill="#ffee00"/><rect x="13" y="13" width="2.4" height="2.4" fill="#ffee00"/></svg>
<svg class="b" style="left:491px;top:955px;" width="15" height="16" viewBox="0 0 15 16"><path d="M6 1.5H11.5L14 4.2L11.5 7H6L3.5 4.2Z" fill="none" stroke="#e8d800" stroke-width="1.4"/><path d="M3.5 9H9L11.5 11.8L9 14.5H3.5L1 11.8Z" fill="none" stroke="#000" stroke-width="1.4"/></svg>
<svg class="b" style="left:513px;top:955px;" width="15" height="16" viewBox="0 0 15 16"><path d="M6 1.5H11.5L14 4.2L11.5 7H6L3.5 4.2Z" fill="none" stroke="#888" stroke-width="1.3"/><path d="M3.5 9H9L11.5 11.8L9 14.5H3.5L1 11.8Z" fill="none" stroke="#000" stroke-width="1.4"/></svg>
<div class="b" style="left:533px;top:953px;width:1px;height:20px;background:#8591a8;"></div>
<svg class="b" style="left:540px;top:955px;" width="16" height="16" viewBox="0 0 16 16"><path d="M4.5 1.5H15V11.5H4.5ZM1 4.5L4.5 1.5M11.5 4.5L15 1.5M11.5 14.5L15 11.5M1 14.5L4.5 11.5" fill="none" stroke="#1030e0" stroke-width="1.2"/><rect x="1" y="4.5" width="10.5" height="10" fill="none" stroke="#101040" stroke-width="1.6"/></svg>
<svg class="b" style="left:563px;top:955px;" width="16" height="16" viewBox="0 0 16 16"><path d="M8 0.8L15 8L8 15.2L1 8Z" fill="#fff" stroke="#000" stroke-width="1.2"/><path d="M8 1V15M1 8H15" stroke="#000" stroke-width="1"/></svg>
<svg class="b" style="left:585px;top:955px;" width="16" height="16" viewBox="0 0 16 16"><circle cx="4" cy="5" r="1.8" fill="#ffee00"/><circle cx="8" cy="4.5" r="1.8" fill="#2040e0"/><circle cx="12" cy="5" r="1.8" fill="#ffee00"/><circle cx="4" cy="10" r="1.8" fill="#2040e0"/><circle cx="8" cy="10.5" r="1.8" fill="#ffee00"/><circle cx="12" cy="10" r="1.8" fill="#2040e0"/><path d="M0.5 3.5L15.5 12M0.5 12.5L15.5 3" stroke="#e01010" stroke-width="1.8"/><path d="M1 8H15" stroke="#e01010" stroke-width="1.2"/></svg>
<svg class="b" style="left:606px;top:963px;" width="5" height="3" viewBox="0 0 5 3"><polygon points="0,0 5,0 2.5,3" fill="#505868"/></svg>
<svg class="b" style="left:617px;top:955px;" width="18" height="16" viewBox="0 0 18 16"><path d="M4 11L9 6" stroke="#000" stroke-width="1.2"/><circle cx="3.6" cy="11.8" r="3" fill="#fff" stroke="#000" stroke-width="1.2"/><text x="7.5" y="8.5" font-size="9" font-weight="bold" font-family="Liberation Sans, sans-serif" fill="#000">Fe</text></svg>
<div class="b" style="left:638px;top:953px;width:1px;height:20px;background:#8591a8;"></div>
<svg class="b" style="left:644px;top:955px;" width="16" height="16" viewBox="0 0 16 16"><rect x="0.7" y="0.7" width="14.6" height="14.6" fill="#fff" stroke="#1030e0" stroke-width="1.4"/><path d="M8 2L10.5 5H5.5ZM8 14L10.5 11H5.5ZM2 8L5 5.5V10.5ZM14 8L11 5.5V10.5Z" fill="#000"/><path d="M8 4V12M4 8H12" stroke="#000" stroke-width="1.6"/><circle cx="8" cy="8" r="1.8" fill="#ffee00"/></svg>
<svg class="b" style="left:667px;top:963px;" width="5" height="3" viewBox="0 0 5 3"><polygon points="0,0 5,0 2.5,3" fill="#505868"/></svg>
<div class="b" style="left:677px;top:953px;width:1px;height:20px;background:#8591a8;"></div>
<svg class="b" style="left:683px;top:955px;" width="17" height="16" viewBox="0 0 17 16"><text x="0" y="13.5" font-size="17" font-weight="bold" font-style="italic" font-family="Liberation Serif, serif" fill="#101890" textLength="16" lengthAdjust="spacingAndGlyphs">M</text></svg>
<svg class="b" style="left:706px;top:955px;" width="15" height="16" viewBox="0 0 15 16"><rect x="0.7" y="0.7" width="13.6" height="13.6" fill="#fff" stroke="#101890" stroke-width="1.4"/><circle cx="6" cy="6" r="3.4" fill="none" stroke="#e02020" stroke-width="1.2"/><circle cx="8.5" cy="8.5" r="3.6" fill="#208878"/></svg>
<div class="b" style="left:728px;top:953px;width:1px;height:20px;background:#8591a8;"></div>
<svg class="b" style="left:734px;top:955px;" width="16" height="16" viewBox="0 0 16 16"><path d="M5 1V15M11 1V15M1 5H15M1 11H15" stroke="#707888" stroke-width="1.4"/></svg>
<svg class="b" style="left:754px;top:964px;" width="8" height="5" viewBox="0 0 8 5"><polygon points="0.5,0.5 7.5,0.5 4,4.5" fill="#333"/></svg>
<svg class="b" style="left:775px;top:954px;" width="5" height="18" viewBox="0 0 5 18"><rect x="0" y="0" width="1" height="1" fill="#6f7a96"/><rect x="4" y="0" width="1" height="1" fill="#6f7a96"/><rect x="2" y="2" width="1" height="1" fill="#6f7a96"/><rect x="0" y="4" width="1" height="1" fill="#6f7a96"/><rect x="4" y="4" width="1" height="1" fill="#6f7a96"/><rect x="2" y="6" width="1" height="1" fill="#6f7a96"/><rect x="0" y="8" width="1" height="1" fill="#6f7a96"/><rect x="4" y="8" width="1" height="1" fill="#6f7a96"/><rect x="2" y="10" width="1" height="1" fill="#6f7a96"/><rect x="0" y="12" width="1" height="1" fill="#6f7a96"/><rect x="4" y="12" width="1" height="1" fill="#6f7a96"/><rect x="2" y="14" width="1" height="1" fill="#6f7a96"/><rect x="0" y="16" width="1" height="1" fill="#6f7a96"/><rect x="4" y="16" width="1" height="1" fill="#6f7a96"/></svg>
<div class="b" style="left:788px;top:951px;width:22px;height:22px;background:#fdf4bf;border:1px solid #e5c365"></div>
<svg class="b" style="left:794px;top:955px;" width="11" height="16" viewBox="0 0 11 16"><path d="M1.5 0.8V12.5L4.3 9.8L6.3 14.5L8.3 13.6L6.3 9H10Z" fill="#fff" stroke="#000" stroke-width="1"/></svg>
<svg class="b" style="left:812px;top:955px;" width="16" height="16" viewBox="0 0 16 16"><path d="M8 0.5L10.5 3.5H5.5ZM8 15.5L10.5 12.5H5.5ZM0.5 8L3.5 5.5V10.5ZM15.5 8L12.5 5.5V10.5Z" fill="#000"/><path d="M8 3V13M3 8H13" stroke="#000" stroke-width="1.5"/><circle cx="8" cy="8" r="3" fill="#fff" stroke="#000" stroke-width="1.3"/></svg>
<svg class="b" style="left:835px;top:955px;" width="15" height="16" viewBox="0 0 15 16"><path d="M12.6 5A5.6 5.6 0 1 0 13.6 8.5" fill="none" stroke="#000" stroke-width="1.9"/><polygon points="8.5,0.5 14.5,3 9.5,7" fill="#000"/></svg>
<svg class="b" style="left:857px;top:955px;" width="16" height="16" viewBox="0 0 16 16"><path d="M8 0.5L11 4H5ZM8 15.5L11 12H5ZM0.5 8L4 5V11ZM15.5 8L12 5V11Z" fill="#000"/><path d="M8 3V13M3 8H13" stroke="#000" stroke-width="1.8"/></svg>
<svg class="b" style="left:879px;top:955px;" width="16" height="16" viewBox="0 0 16 16"><path d="M1 4.5V1H4.5M11.5 1H15V4.5M15 11.5V15H11.5M4.5 15H1V11.5" fill="none" stroke="#000" stroke-width="1.4"/><path d="M2 2L14 14M14 2L2 14" stroke="#000" stroke-width="1.2"/><rect x="5.5" y="5.5" width="5" height="5" fill="#fff" stroke="#000" stroke-width="1.3"/></svg>
<svg class="b" style="left:900px;top:955px;" width="16" height="16" viewBox="0 0 16 16"><path d="M15 2L1.5 8L15 14" fill="none" stroke="#000" stroke-width="1.7"/><path d="M11 4V12" stroke="#000" stroke-width="1.5" stroke-dasharray="2.2 1.6"/></svg>
<svg class="b" style="left:923px;top:955px;" width="16" height="16" viewBox="0 0 16 16"><path d="M8 2L1.5 8.5H14.5ZM8 6L3 13.5H13Z" fill="none" stroke="#000" stroke-width="1.4"/><path d="M8 1V14M2 14.5H14" stroke="#000" stroke-width="1.4"/></svg>
<svg class="b" style="left:945px;top:955px;" width="16" height="16" viewBox="0 0 16 16"><circle cx="8" cy="8.5" r="3.2" fill="#fff" stroke="#000" stroke-width="1.8"/><path d="M2 5.5C3.5 2.5 12.5 2.5 14 5.5M1.5 9C1.5 13.5 5 14.8 8 14.8C11 14.8 14.5 13.5 14.5 9" fill="none" stroke="#000" stroke-width="1.5" stroke-dasharray="2 1.6"/></svg>
<svg class="b" style="left:967px;top:955px;" width="16" height="16" viewBox="0 0 16 16"><path d="M1.5 2.5H9.5V8.5H1.5Z" fill="#fff" stroke="#000" stroke-width="1.6"/><path d="M3 10.5V12.5M6 9V12.5M1 13H8" stroke="#000" stroke-width="1.4" stroke-dasharray="2 1.2"/><rect x="10.5" y="6.5" width="2.2" height="8" fill="#d0d0d0" stroke="#a0a0a0" stroke-width="0.6"/><rect x="13.5" y="6.5" width="2.2" height="8" fill="#d0d0d0" stroke="#a0a0a0" stroke-width="0.6"/></svg>
<svg class="b" style="left:989px;top:955px;" width="18" height="16" viewBox="0 0 18 16"><path d="M1.5 2.5H9.5V8.5H1.5Z" fill="#fff" stroke="#000" stroke-width="1.6"/><path d="M3 10.5V12.5M6 9V12.5M1 13H8" stroke="#000" stroke-width="1.4" stroke-dasharray="2 1.2"/><rect x="8.5" y="7.5" width="8" height="7.5" fill="#808080" stroke="#606060" stroke-width="0.6"/></svg>
<svg class="b" style="left:1010px;top:964px;" width="8" height="5" viewBox="0 0 8 5"><polygon points="0.5,0.5 7.5,0.5 4,4.5" fill="#333"/></svg>
<svg class="b" style="left:1032px;top:954px;" width="5" height="18" viewBox="0 0 5 18"><rect x="0" y="0" width="1" height="1" fill="#6f7a96"/><rect x="4" y="0" width="1" height="1" fill="#6f7a96"/><rect x="2" y="2" width="1" height="1" fill="#6f7a96"/><rect x="0" y="4" width="1" height="1" fill="#6f7a96"/><rect x="4" y="4" width="1" height="1" fill="#6f7a96"/><rect x="2" y="6" width="1" height="1" fill="#6f7a96"/><rect x="0" y="8" width="1" height="1" fill="#6f7a96"/><rect x="4" y="8" width="1" height="1" fill="#6f7a96"/><rect x="2" y="10" width="1" height="1" fill="#6f7a96"/><rect x="0" y="12" width="1" height="1" fill="#6f7a96"/><rect x="4" y="12" width="1" height="1" fill="#6f7a96"/><rect x="2" y="14" width="1" height="1" fill="#6f7a96"/><rect x="0" y="16" width="1" height="1" fill="#6f7a96"/><rect x="4" y="16" width="1" height="1" fill="#6f7a96"/></svg>
<svg class="b" style="left:1046px;top:955px;" width="16" height="16" viewBox="0 0 16 16"><path d="M1 2V13.5H15.5M4.5 5V13.5M8 5V13.5M11.5 5V13.5M15 5V13.5" fill="none" stroke="#000" stroke-width="1.2"/></svg>
<svg class="b" style="left:1069px;top:955px;" width="15" height="16" viewBox="0 0 15 16"><path d="M7.5 2L13.5 14H1.5Z" fill="none" stroke="#000" stroke-width="1.3"/></svg>
<svg class="b" style="left:1090px;top:955px;" width="17" height="16" viewBox="0 0 17 16"><path d="M6 8.5L9 2M8.5 8.5L13 3" stroke="#000" stroke-width="1.4"/><circle cx="6.5" cy="11" r="3.6" fill="#fff" stroke="#000" stroke-width="1.4"/><circle cx="10.5" cy="2" r="1.3" fill="#000"/></svg>
<svg class="b" style="left:1113px;top:955px;" width="18" height="16" viewBox="0 0 18 16"><path d="M1.5 11L6 4.5H16L11 11Z" fill="#fff" stroke="#000" stroke-width="1.3"/><path d="M1.5 11V13.5H11L16 7V4.5" fill="none" stroke="#000" stroke-width="1.1"/><path d="M5 9.5L12 6" stroke="#000" stroke-width="1" stroke-dasharray="1.5 1.2"/></svg>
<svg class="b" style="left:1133px;top:964px;" width="8" height="5" viewBox="0 0 8 5"><polygon points="0.5,0.5 7.5,0.5 4,4.5" fill="#333"/></svg>
<span class="t " style="left:4.60px;top:978px;font-size:12px;line-height:16px;color:#fff;letter-spacing:-0.468px;">For Help, press F1</span>
<svg class="b" style="left:795px;top:978px;" width="16" height="15" viewBox="0 0 16 15"><rect x="0.5" y="2.5" width="11" height="9" fill="#fff" stroke="#b0b0b0"/><path d="M2 5.5H10M2 7.5H10M2 9.5H7" stroke="#404040"/><path d="M3 0V6M0 3H6M0.8 0.8L5.2 5.2M5.2 0.8L0.8 5.2" stroke="#ffee00" stroke-width="1.2"/><path d="M7 10H11V8L15.5 11L11 14V12H7Z" fill="#20d8f8" stroke="#000" stroke-width="0.7"/></svg>
<div class="b" style="left:821px;top:978px;width:97px;height:16px;background:#b9c5dd;"></div>
<span class="t " style="left:825.00px;top:978px;font-size:12px;line-height:16px;color:#101030;letter-spacing:-0.131px;">Manual</span>
<svg class="b" style="left:924px;top:979px;" width="14" height="14" viewBox="0 0 14 14"><rect x="0.6" y="0.6" width="12.8" height="12.8" fill="#0a5a96" stroke="#a89a6a" stroke-width="1.2"/><path d="M7 2.5V11.5M2.5 7H11.5" stroke="#a89a6a" stroke-width="2.4"/><path d="M7 0.8L9.8 4H4.2ZM7 13.2L9.8 10H4.2ZM0.8 7L4 4.2V9.8ZM13.2 7L10 4.2V9.8Z" fill="#a89a6a"/></svg>
<span class="t " style="left:941.80px;top:978px;font-size:12px;line-height:16px;color:#fff;letter-spacing:-0.729px;">0.95834</span>
<svg class="b" style="left:1041px;top:981px;" width="14" height="11" viewBox="0 0 14 11"><path d="M0.5 3.5H3L4 2H9L10 3.5H13V10.5H0.5Z" fill="#8a9ab0" stroke="#c0c8d8" stroke-width="0.9"/><circle cx="6.5" cy="6.8" r="2.6" fill="#506080" stroke="#d0d8e8"/></svg>
<span class="t " style="left:1058.00px;top:978px;font-size:12px;line-height:16px;color:#fff;">0</span>
<span class="t " style="left:1084.00px;top:978px;font-size:12px;line-height:16px;color:#fff;letter-spacing:-0.225px;">4 parms</span>
<span class="t " style="left:1155.60px;top:978px;font-size:12px;line-height:16px;color:#fff;letter-spacing:-0.329px;">177 atoms</span>
<span class="t " style="left:1227.00px;top:978px;font-size:12px;line-height:16px;color:#fff;letter-spacing:-0.381px;">304 bonds</span>
<span class="t " style="left:1298.40px;top:978px;font-size:12px;line-height:16px;color:#fff;letter-spacing:0.032px;">polymeric</span>
<span class="t " style="left:1362.50px;top:978px;font-size:12px;line-height:16px;color:#fff;letter-spacing:-0.147px;">1 polyh.</span>
<svg class="b" style="left:1424px;top:980px;" width="12" height="12" viewBox="0 0 12 12"><rect x="9" y="3" width="1.4" height="1.4" fill="#8ab0d8"/><rect x="6" y="6" width="1.4" height="1.4" fill="#8ab0d8"/><rect x="9" y="6" width="1.4" height="1.4" fill="#8ab0d8"/><rect x="3" y="9" width="1.4" height="1.4" fill="#8ab0d8"/><rect x="6" y="9" width="1.4" height="1.4" fill="#8ab0d8"/><rect x="9" y="9" width="1.4" height="1.4" fill="#8ab0d8"/></svg>
</body></html>
